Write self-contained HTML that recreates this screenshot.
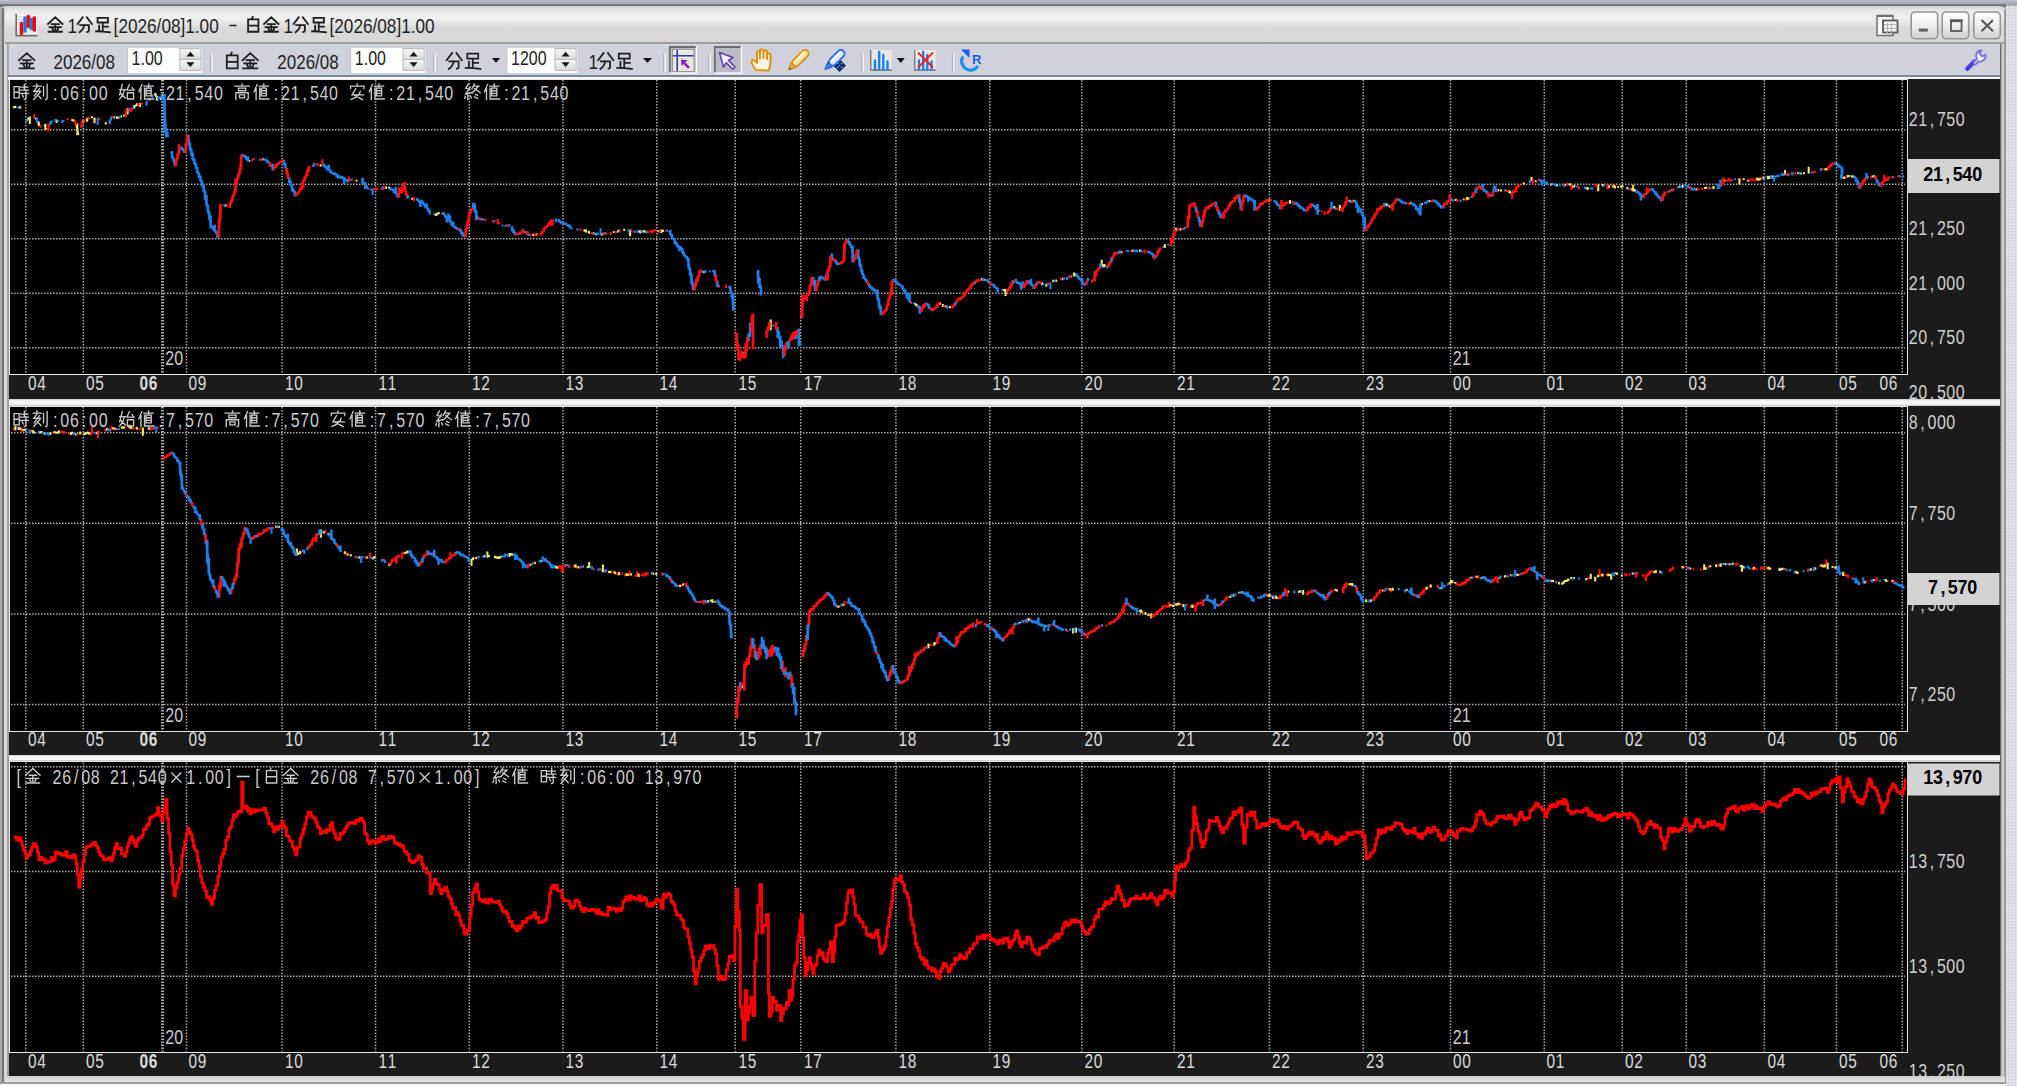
<!DOCTYPE html><html><head><meta charset="utf-8"><style>
*{margin:0;padding:0;box-sizing:border-box}
html,body{width:2017px;height:1086px;overflow:hidden;background:#a9adb9}
body{position:relative;font-family:"Liberation Sans",sans-serif}
.a{position:absolute}
.t{position:absolute;white-space:pre;transform-origin:0 0;line-height:1}
.mono{font-family:"Liberation Mono",monospace}
</style></head><body>
<div class="a" style="left:0;top:0;width:2017px;height:5px;background:linear-gradient(#bcc0cc,#9da1ad)"></div>
<div class="a" style="left:0;top:4.3px;width:2006px;height:3px;background:linear-gradient(#8a8a8a,#6c6c6c 50%,#888)"></div>
<div class="a" style="left:2006px;top:6px;width:11px;height:1080px;background-color:#d3d5dd;background-image:radial-gradient(circle at 1.5px 1.5px,#ededf2 0.9px,transparent 1.3px);background-size:3.1px 3.1px"></div>
<div class="a" style="left:0;top:6px;width:2006px;height:1078px;background:#d6d6d6;border-radius:6px 6px 0 0"></div>
<div class="a" style="left:0;top:8px;width:1.5px;height:1076px;background:#aaaaaa"></div>
<div class="a" style="left:1.5px;top:8px;width:2.5px;height:1076px;background:#737373"></div>
<div class="a" style="left:4px;top:8px;width:3px;height:1076px;background:#d8d8d8"></div>
<div class="a" style="left:7px;top:44px;width:2px;height:1033px;background:#a0a0a0"></div>
<div class="a" style="left:1999.5px;top:44px;width:4.5px;height:1034px;background:linear-gradient(90deg,#1a1a1a 0,#9a9a9a 20%,#d0d0d0 70%,#d8d8d8 100%)"></div>
<div class="a" style="left:2004px;top:10px;width:1.5px;height:1074px;background:#9a9a9a"></div>
<div class="a" style="left:7px;top:1076px;width:1998px;height:6px;background:linear-gradient(#cfcfcf,#e6e6e6)"></div>
<div class="a" style="left:0;top:1082px;width:2006px;height:1.5px;background:#9c9c9c"></div>
<div class="a" style="left:0;top:1083.5px;width:2006px;height:2.5px;background:#f4f4f4"></div>
<div class="a" style="left:5px;top:7.3px;width:1999px;height:35px;border-radius:7px 7px 0 0;background:linear-gradient(#d6d6d6 0%,#e6e6e6 8%,#f0f0f0 30%,#e4e4e4 48%,#d9d9d9 60%,#d8d8d8 100%)"></div>
<div class="a" style="left:5px;top:42.2px;width:1999px;height:1.7px;background:#a09d9d"></div>
<div class="a" style="left:8px;top:43.5px;width:1992px;height:32px;background:linear-gradient(#d4d7de 0,#cfd2da 10%,#cfd2da 90%,#d6d9df 100%);border-left:1.5px solid #a8acb4"></div>
<div class="a" style="left:8px;top:74.8px;width:1992px;height:1.8px;background:#7b869a"></div>
<div class="a" style="left:8px;top:76.5px;width:1992px;height:3px;background:#f8f8f8"></div>
<div class="a" style="left:9px;top:79px;width:1990.5px;height:320px;background:#1b1b1b"></div>
<div class="a" style="left:9px;top:78.5px;width:1898.5px;height:296.2px;background:#000;border:1.5px solid #e6e6e6"></div>
<div class="a" style="left:9px;top:399px;width:1990.5px;height:6.5px;background:linear-gradient(#c8c8c8 0,#f4f4f4 25%,#f4f4f4 75%,#bdbdbd 100%)"></div>
<div class="a" style="left:9px;top:406px;width:1990.5px;height:348.5px;background:#1b1b1b"></div>
<div class="a" style="left:9px;top:405.5px;width:1898.5px;height:326px;background:#000;border:1.5px solid #e6e6e6"></div>
<div class="a" style="left:9px;top:754.5px;width:1990.5px;height:6.5px;background:linear-gradient(#c8c8c8 0,#f4f4f4 25%,#f4f4f4 75%,#bdbdbd 100%)"></div>
<div class="a" style="left:9px;top:761.5px;width:1990.5px;height:314.5px;background:#1b1b1b"></div>
<div class="a" style="left:9px;top:761.0px;width:1898.5px;height:292.0999999999999px;background:#000;border:1.5px solid #e6e6e6"></div>
<svg class="a" style="left:0;top:0" width="2017" height="1086" viewBox="0 0 2017 1086">
<defs>
<symbol id="k_kin" viewBox="0 0 16 16" overflow="visible"><path d="M1,7.5 L8,1 L15,7.5 M4.5,7.5 H11.5 M2.5,10.5 H13.5 M8,7.5 V15 M5,11.5 L6,13.5 M11,11.5 L10,13.5 M1.5,15 H14.5" fill="none" stroke="currentColor" stroke-linecap="square" stroke-linejoin="miter"/></symbol>
<symbol id="k_fun" viewBox="0 0 16 16" overflow="visible"><path d="M6,1 L1,7.5 M10,1 L15,7.5 M3.5,8.5 H12 V14 Q12,15.2 10.5,15.2 M7.5,8.5 Q7,12.5 3,15.5" fill="none" stroke="currentColor" stroke-linecap="square" stroke-linejoin="miter"/></symbol>
<symbol id="k_ashi" viewBox="0 0 16 16" overflow="visible"><path d="M3,1.5 H13 V6 H3 Z M8,6 V14.5 M8,10 H13 M4.5,9 V14 M1.5,14.5 Q8,14.5 15,15.5" fill="none" stroke="currentColor" stroke-linecap="square" stroke-linejoin="miter"/></symbol>
<symbol id="k_shiro" viewBox="0 0 16 16" overflow="visible"><path d="M7.5,0.5 L6.5,2.8 M3,3 H13 V15 H3 Z M3,9 H13" fill="none" stroke="currentColor" stroke-linecap="square" stroke-linejoin="miter"/></symbol>
<symbol id="k_ji" viewBox="0 0 16 16" overflow="visible"><path d="M1,3 H6 V14 H1 Z M1,8.5 H6 M7.5,3.5 H14.5 M11,1 V6.5 M7,6.5 H15 M7,9.5 H15 M12.5,7.5 V14.5 Q12.5,15.5 11,15.5 M9,11 L10,13" fill="none" stroke="currentColor" stroke-linecap="square" stroke-linejoin="miter"/></symbol>
<symbol id="k_koku" viewBox="0 0 16 16" overflow="visible"><path d="M4.5,0.5 V2.5 M1,2.5 H9 M5,3 L1.5,7.5 H8 M7,5 L2,12 M8,8 L1.5,15.5 M5,11 L8.5,14.5 M11,3 V12 M14.5,1 V14.5 Q14.5,15.5 13,15.5" fill="none" stroke="currentColor" stroke-linecap="square" stroke-linejoin="miter"/></symbol>
<symbol id="k_shi" viewBox="0 0 16 16" overflow="visible"><path d="M3.5,1 L1,11 M1,6 H6.5 M5.5,6 Q5,11 1,15 M2,9.5 L6.5,14 M10.5,1 L8,6.5 H15 M13,4 L15,6.5 M8.5,9 H14.5 V15 H8.5 Z" fill="none" stroke="currentColor" stroke-linecap="square" stroke-linejoin="miter"/></symbol>
<symbol id="k_chi" viewBox="0 0 16 16" overflow="visible"><path d="M4,1 L1,8 M3,5 V15.5 M6,2.5 H15 M10.5,0.5 V4.5 M8,4.5 H13 V12 H8 Z M8,7 H13 M8,9.5 H13 M6.5,4.5 V15 H15.5" fill="none" stroke="currentColor" stroke-linecap="square" stroke-linejoin="miter"/></symbol>
<symbol id="k_kou" viewBox="0 0 16 16" overflow="visible"><path d="M8,0.5 V2.5 M1,2.5 H15 M4.5,4.5 H11.5 V7 H4.5 Z M2,9 V15.5 M2,9 H14 V14.5 Q14,15.5 12.5,15.5 M5.5,11 H10.5 V14 H5.5 Z" fill="none" stroke="currentColor" stroke-linecap="square" stroke-linejoin="miter"/></symbol>
<symbol id="k_an" viewBox="0 0 16 16" overflow="visible"><path d="M8,0.5 V2.5 M1.5,5 V2.5 H14.5 V5 M6.5,5 L3,11 H14 M11,7.5 Q10,13 2,15.5 M5.5,11.5 L13,15.5" fill="none" stroke="currentColor" stroke-linecap="square" stroke-linejoin="miter"/></symbol>
<symbol id="k_shuu" viewBox="0 0 16 16" overflow="visible"><path d="M4,0.5 L1.5,4.5 L5.5,6 M6,3.5 L1.5,10 L7,9 M3.5,10 V15.5 M1,12.5 L0.5,14.5 M6,12 L7,14 M10,0.5 L7.5,5 M9.5,2.5 H14 L8,9 M10,5 L15.5,9 M11,10.5 L13,11.5 M10,13 L13,14.5" fill="none" stroke="currentColor" stroke-linecap="square" stroke-linejoin="miter"/></symbol>
</defs>
<path d="M162.5,80V373.2" stroke="#a9a9a9" stroke-width="3" stroke-dasharray="1.5 1.5" fill="none"/>
<path d="M25.8,80V373.2M83.3,80V373.2M186.5,80V373.2M282.1,80V373.2M375.6,80V373.2M469.3,80V373.2M562.9,80V373.2M656.8,80V373.2M735.2,80V373.2M800.7,80V373.2M895.9,80V373.2M989.8,80V373.2M1081.8,80V373.2M1174.1,80V373.2M1269.4,80V373.2M1363.2,80V373.2M1450.5,80V373.2M1544.2,80V373.2M1622.2,80V373.2M1686.3,80V373.2M1764.4,80V373.2M1836.5,80V373.2M1902.3,80V373.2M11,129.7H1905M11,184.2H1905M11,238.7H1905M11,293.2H1905M11,347.7H1905" stroke="#a9a9a9" stroke-width="1.5" stroke-dasharray="1.5 1.5" fill="none"/>
<path d="M162.5,407V730" stroke="#a9a9a9" stroke-width="3" stroke-dasharray="1.5 1.5" fill="none"/>
<path d="M25.8,407V730M83.3,407V730M186.5,407V730M282.1,407V730M375.6,407V730M469.3,407V730M562.9,407V730M656.8,407V730M735.2,407V730M800.7,407V730M895.9,407V730M989.8,407V730M1081.8,407V730M1174.1,407V730M1269.4,407V730M1363.2,407V730M1450.5,407V730M1544.2,407V730M1622.2,407V730M1686.3,407V730M1764.4,407V730M1836.5,407V730M1902.3,407V730M11,432.7H1905M11,523.3H1905M11,613.9H1905M11,704.5H1905" stroke="#a9a9a9" stroke-width="1.5" stroke-dasharray="1.5 1.5" fill="none"/>
<path d="M162.5,762.5V1051.6" stroke="#a9a9a9" stroke-width="3" stroke-dasharray="1.5 1.5" fill="none"/>
<path d="M25.8,762.5V1051.6M83.3,762.5V1051.6M186.5,762.5V1051.6M282.1,762.5V1051.6M375.6,762.5V1051.6M469.3,762.5V1051.6M562.9,762.5V1051.6M656.8,762.5V1051.6M735.2,762.5V1051.6M800.7,762.5V1051.6M895.9,762.5V1051.6M989.8,762.5V1051.6M1081.8,762.5V1051.6M1174.1,762.5V1051.6M1269.4,762.5V1051.6M1363.2,762.5V1051.6M1450.5,762.5V1051.6M1544.2,762.5V1051.6M1622.2,762.5V1051.6M1686.3,762.5V1051.6M1764.4,762.5V1051.6M1836.5,762.5V1051.6M1902.3,762.5V1051.6M11,766.7H1905M11,871.5H1905M11,976.3H1905" stroke="#a9a9a9" stroke-width="1.5" stroke-dasharray="1.5 1.5" fill="none"/>
<path d="M12.9,107.3L14.5,107.1M13.7,106.3V107.3M14.5,107.1L16.1,106.9M15.3,105.7V107.8M19.2,107.2L20.8,108.4M20,106V108.6M27.4,119.3L29,118.9M28.2,117.6V119.9M29,118.9L30.5,116.8M29.8,116.5V123.9M35,118.2L36.2,118.9M35.6,117.5V119.3M38,122L39.7,125.9M38.8,121.4V126.2M44.6,124.9L46.1,129.4M45.4,123.7V130M55.9,120.5L57.3,121.8M56.6,119.6V123M71.4,120L72.9,120M72.2,119.4V121M72.9,120L74.4,120.9M73.7,119.4V121.8M76.4,124.5L78.3,135.1M77.3,123.3V135.2M82.3,122L83.6,121.5M83,120.2V123.3M86.3,119.5L87.9,118.5M87.1,118.5V121.8M91.2,117.8L92.5,116.7M91.9,116.3V118.3M93.9,118.2L95.2,119.8M94.5,117.4V123.3M105.1,123.3L106.4,123.8M105.8,122.3V124.4M113.4,116.8L114.8,117.8M114.1,116.7V117.9M116.2,118.3L117.6,117.4M116.9,116.3V118.6M117.6,117.4L119,118.1M118.3,117.2V118.4M120.5,116L122,116.6M121.2,115.4V116.9M123.4,115.8L124.9,115.8M124.2,114.2V116.1M126.9,109.5L128.2,109M127.6,108.8V114.5M133.6,108L134.9,106.1M134.2,105.1V108.7M134.9,106.1L136.4,105.3M135.6,105V106.4M136.4,105.3L137.9,104.6M137.1,103.3V105.8M139.3,105.5L140.8,103.5M140.1,103.1V106.9M148.8,100.1L150.2,98.5M149.5,98.2V100.2M154.7,93.7L156.2,95.9M155.4,93.1V96M156.2,95.9L157.7,99.6M156.9,95.9V100.7M162.1,96.9L163.6,95.1M162.8,93.9V98M225.2,205L226.5,205.6M225.8,204.2V206.5M248.6,160.8L250.1,160.8M249.4,160.3V161.2M262.2,159.4L263.7,159.2M262.9,158.3V159.7M319.9,166L321.6,164.7M320.7,164.7V166.2M355.7,180.4L357.3,180.9M356.5,180.2V181M385.2,188.2L386.7,187.4M386,186.2V189M388.4,187.8L390,188.1M389.2,186.8V188.2M411.4,198.9L413.1,198.9M412.2,197.7V199M435.1,214.6L436.6,214.7M435.8,213.3V215.9M436.6,214.7L438.1,213.2M437.4,213.1V215.1M438.1,213.2L439.6,212.8M438.9,212.4V213.2M532.6,234.8L534.1,235.6M533.3,233.7V235.8M535.5,234.4L537,234.5M536.3,233.8V234.8M583.8,229.7L585.3,231.4M584.6,229.3V231.5M585.3,231.4L586.7,232M586,229.4V232.3M588.2,231.7L589.6,232.6M588.9,230.7V233.7M592.5,233.3L594,233.5M593.2,232.9V233.7M595.4,234.2L596.9,234.3M596.2,234.2V235.2M601.3,233.6L602.8,234.4M602.1,233.3V235.4M613.1,232L614.6,232.3M613.9,231.5V232.7M617.5,232.1L619,230.6M618.3,229.8V232.3M623.4,230.2L624.9,229.5M624.2,228.9V230.6M629.3,230.1L630.8,230.9M630.1,229.6V236.2M638.2,231.3L639.6,231.2M638.9,230.4V232.4M639.6,231.2L641.1,232.5M640.4,230.3V233.4M642.6,231.2L644.1,230.7M643.4,230.5V232.5M644.1,230.7L645.7,232.5M644.9,230.4V232.5M657.7,231.1L659.2,231.3M658.5,230.5V232.2M660.7,231.9L662.1,230.1M661.4,229.4V233M662.1,230.1L663.6,231.3M662.9,229.8V232M703,272.3L704.6,272.2M703.8,271.1V273.1M770,325.7L771.4,324.4M770.7,319.6V330.2M914.4,303.3L915.8,304.3M915.1,303.3V304.5M915.8,304.3L917.2,305.6M916.5,304V306.4M939.4,303.5L940.8,303.9M940.1,302.5V304.2M942.2,304.6L943.6,306.1M942.9,304.1V306.9M945,305.9L946.4,306.3M945.7,305.7V307.6M949.1,306.8L950.5,307.2M949.8,306V308.3M981.1,279.7L982.5,278.7M981.8,278.4V280.3M983.9,280.1L985.3,279.5M984.6,278.7V280.2M1003.1,290.1L1004.8,290M1004,289.5V291.1M1004.8,290L1006.4,291.3M1005.6,288.9V295.9M1041.4,283.1L1042.7,284M1042,282V285.3M1045.5,284.5L1046.9,285M1046.2,283.8V286.8M1052.5,281.7L1053.9,280.7M1053.2,279.8V282.3M1055.4,281.4L1057,280.1M1056.2,279.7V281.7M1061.6,279.1L1063.2,279.2M1062.4,278.9V279.3M1073.3,275.4L1074.7,275.2M1074,272.6V276M1074.7,275.2L1076.1,273.9M1075.4,273.4V276.5M1101,264.7L1102.4,264.8M1101.7,259.8V265.8M1102.4,264.8L1103.8,266.5M1103.1,264.3V267.2M1103.8,266.5L1105.2,265.3M1104.5,264.1V267.3M1120.5,251.4L1121.9,252.6M1121.2,251.2V252.6M1131.7,251.1L1133.2,250.1M1132.5,249.8V251.9M1139.2,251.4L1140.8,250.2M1140,249.5V251.9M1164,246.7L1165.7,245.2M1164.8,244V247.9M1175.4,230.3L1176.9,228.2M1176.1,227.7V231.3M1179.8,229.9L1181.3,228.4M1180.6,228.2V230.5M1268.4,200.4L1269.8,199.7M1269.1,199.6V201.6M1289.2,202.5L1290.6,201.3M1289.9,200.1V203.8M1333.6,206.7L1335,208M1334.3,206V208.5M1339.1,209.7L1340.5,209.4M1339.8,205V210.5M1348.9,201.2L1350.3,200.5M1349.6,200V201.9M1353,201.1L1354.4,200.9M1353.7,199.8V201.6M1385,204L1386.4,204.5M1385.7,203.1V205.5M1386.4,204.5L1387.8,205.6M1387.1,203.8V206M1389.1,205.6L1390.5,206.7M1389.8,205.5V207.6M1410,202.7L1411.4,203M1410.7,202.3V204.3M1421.1,204.6L1422.7,203.3M1421.9,203.2V205.1M1428.9,201.1L1430.5,201M1429.7,200.2V201.8M1455.1,199.7L1456.6,199.5M1455.8,199.3V200.9M1463,199.6L1464.6,199.2M1463.8,199.1V199.7M1466.2,199.6L1467.7,198M1467,197.1V200.3M1467.7,198L1469.3,198.5M1468.5,197.6V199.4M1497.5,190L1498.9,190.8M1498.2,189V190.9M1500.2,190L1501.6,190.7M1500.9,190V191.5M1508.6,191.3L1510,192.2M1509.3,190.2V193.1M1510,192.2L1511.4,193.2M1510.7,191.8V193.7M1522.9,183.3L1524.5,183.5M1523.7,182.6V184.4M1530.8,180L1532.2,180.4M1531.5,177.1V180.8M1535.1,181.4L1536.5,181.1M1535.8,181V181.8M1550.3,185.2L1551.7,184.1M1551,183.5V185.6M1556.1,185.7L1557.5,184.9M1556.8,184V186.5M1564.8,185.1L1566.2,185M1565.5,184.1V185.1M1569.2,184.2L1570.7,185.4M1569.9,183.2V185.6M1572.1,186.3L1573.6,186.6M1572.9,186.2V187.7M1573.6,186.6L1575.1,185.9M1574.4,185.3V186.8M1585.4,188.2L1586.9,188M1586.2,187.7V189M1586.9,188L1588.4,188.9M1587.7,186.9V190.1M1597.4,186.6L1599,185M1598.2,184.3V191.3M1602,185.7L1603.6,185M1602.8,183.9V186M1608.2,185.8L1609.7,187.1M1608.9,184.9V188.3M1612.7,185.6L1614.3,187.2M1613.5,184.8V187.7M1614.3,187.2L1615.8,186.2M1615,185.8V188.4M1617.3,187.1L1618.9,186.7M1618.1,185.9V187.2M1620.4,187.1L1621.9,186.5M1621.2,185.3V187.4M1621.9,186.5L1623.4,186.5M1622.7,186.3V187.1M1626.4,188L1628,188.5M1627.2,187V189.1M1631,189.7L1632.5,189M1631.7,188.4V190M1632.5,189L1634,189.6M1633.2,184.8V191.5M1634,189.6L1635.5,191.2M1634.7,188.9V191.5M1678.6,186.8L1680.1,186.6M1679.3,186.5V187.7M1681.7,187.2L1683.3,185.9M1682.5,184.9V187.9M1695.8,189.9L1697.2,189M1696.5,187.9V190.5M1704.3,188.4L1705.7,187.6M1705,187.2V189.1M1705.7,187.6L1707.1,187.7M1706.4,186.7V188.3M1712.8,188.2L1714.2,186.7M1713.5,186V189.3M1724,180.6L1725.5,180.2M1724.7,179.9V181.5M1738.7,180.6L1740.1,179.4M1739.4,178.3V184.6M1743,179.3L1744.5,179M1743.7,178.9V179.9M1747.4,180.9L1748.8,180.6M1748.1,180.1V181.2M1756.1,179.5L1757.7,178.5M1756.9,177.5V180.4M1757.7,178.5L1759.2,179.6M1758.4,177.9V180.7M1759.2,179.6L1760.8,178.2M1760,178.1V180.2M1762.4,178.1L1763.9,177.3M1763.2,176.5V179.3M1767.1,178L1768.6,178.4M1767.8,175.8V179.2M1768.6,178.4L1770.2,176.5M1769.4,176V178.9M1771.8,178.1L1773.3,176.4M1772.6,175.5V178.5M1784.3,174.9L1785.8,173.6M1785,170.1V175.1M1797.4,173.4L1798.8,172.6M1798.1,172.5V174.1M1800.3,173.7L1801.7,173.9M1801,172.7V174M1803.2,173.5L1804.8,172.8M1804,172.8V174M1807.9,172.5L1809.5,171.4M1808.7,166.8V173.5M1824.7,169.1L1826.2,169.3M1825.4,168.2V170.4M1826.2,169.3L1827.7,169.1M1826.9,168.8V169.5M1835.8,163.2L1837.1,164.4M1836.5,162.9V165.1M1842.3,177.7L1843.8,177.6M1843.1,177V177.7M1843.8,177.6L1845.4,177.2M1844.6,176.6V178.9M1846.9,177L1848.4,175.7M1847.6,175.1V177.1M1848.4,175.7L1849.8,176.4M1849.1,175.4V176.9M1851.2,176.6L1852.6,176.4M1851.9,175.2V176.9M1852.6,176.4L1854,176.7M1853.3,175.4V177.7M1871.8,176.7L1873.3,176.1M1872.5,176V177.2M1873.3,176.1L1874.8,176.4M1874,175.4V176.5" stroke="#f2e66a" stroke-width="2.1" fill="none" stroke-linecap="butt"/>
<path d="M17.6,108.2L19.2,107.2M18.4,106V108.7M25.8,121.6L27.4,119.3M26.6,119.1V122.1M36.2,118.9L38,122M37.1,117.8V123.1M49.6,124.4L51.2,122.2M50.4,121.1V124.9M51.2,122.2L52.9,120.9M52,120.7V122.4M54.5,119.9L55.9,120.5M55.2,119V121.2M57.3,121.8L58.7,120.5M58,120.3V122.1M61.5,121.9L62.9,120.9M62.2,120.3V123.1M62.9,120.9L64.3,120.9M63.6,120.2V121M96.8,118.6L98.5,119.5M97.7,117.6V124.9M109.1,123L110.5,119.9M109.8,119.6V124.2M110.5,119.9L112,116.9M111.3,116.2V120.4M119,118.1L120.5,116M119.7,115.7V118.5M128.2,109L129.6,109.8M128.9,108V110M132.2,108.3L133.6,108M132.9,107.2V109.2M145.8,104.6L147.3,101.1M146.5,101V105.7M151.7,97.4L153.2,95.4M152.5,94.3V97.7M157.7,99.6L159.1,97.5M158.4,96.4V100.1M159.1,97.5L160.6,96.7M159.9,96.3V98.4M160.6,96.7L162.1,96.9M161.3,95.5V97.3M223.8,206L225.2,205M224.5,204.1V207.1M259.2,159.6L260.7,160.1M259.9,159.1V160.4M263.7,159.2L265.2,159.3M264.4,159V160.4M312.2,165.6L313.6,165.4M312.9,165.2V166.7M313.6,165.4L315,164.1M314.3,163.1V166.5M349.5,180.6L351.1,179.8M350.3,178.6V180.7M367.4,188.1L368.9,188.8M368.1,188.1V189.5M370.4,189.8L371.9,189.6M371.1,188.8V190.3M371.9,189.6L373.3,189.2M372.6,188.2V194.9M382.2,188.6L383.7,186.9M383,186.1V189.7M433.6,213.8L435.1,214.6M434.3,213.5V215M493.8,221.1L495.3,220.9M494.5,220.2V221.7M501.8,225.4L503.4,225.7M502.6,225.3V226.3M505,226.4L506.6,225.2M505.8,225V226.9M508.3,225.2L509.9,225.7M509.1,224.2V226.9M555,221L556.6,219M555.8,218.6V222.2M576.6,229.7L578.1,229M577.3,228.6V230.5M594,233.5L595.4,234.2M594.7,232.3V234.4M596.9,234.3L598.4,233.3M597.7,232.4V234.9M599.9,232.9L601.3,233.6M600.6,228.3V235.6M604.3,233.3L605.8,233.6M605,232.1V234.5M616.1,232.3L617.5,232.1M616.8,231.7V232.5M627.8,231.4L629.3,230.1M628.6,230V232.6M633.7,230.9L635.2,232.1M634.5,230.5V232.9M636.7,232.5L638.2,231.3M637.4,230.4V232.8M641.1,232.5L642.6,231.2M641.9,230.6V232.9M645.7,232.5L647.2,231.3M646.4,230.8V233.4M666.6,231L668,230.2M667.3,229.3V231.2M701.5,271.3L703,272.3M702.2,270.3V273.1M704.6,272.2L706.2,270.8M705.4,270.1V272.7M709.3,271.3L710.9,271.5M710.1,270.8V271.8M712.4,271.2L714,270.7M713.2,270.1V271.6M728.2,286.8L729.7,286.8M729,286.4V287.1M772.8,325.6L774.1,325.3M773.4,325.1V326.8M913.1,302.7L914.4,303.3M913.8,302.4V303.7M946.4,306.3L947.8,307.5M947.1,305.5V308.8M982.5,278.7L983.9,280.1M983.2,278.1V281.3M1001.5,290L1003.1,290.1M1002.3,289.7V290.7M1038.6,281.8L1040,282.8M1039.3,281.1V283.1M1042.7,284L1044.1,284.1M1043.4,283.8V285.1M1046.9,285L1048.3,283.1M1047.6,282.8V285.6M1049.7,283.4L1051.1,282.9M1050.4,282.5V289.3M1053.9,280.7L1055.4,281.4M1054.7,279.7V281.7M1063.2,279.2L1064.7,277.6M1063.9,277.2V279.7M1066.3,279.1L1067.8,277.1M1067,277V280.1M1070.6,275.9L1071.9,276.9M1071.3,275V278.1M1106.6,267.4L1108,266.4M1107.3,265.4V268.6M1117.8,252.2L1119.2,253.1M1118.5,250.9V253.8M1119.2,253.1L1120.5,251.4M1119.8,250.2V254.3M1126.1,250.4L1127.5,251.1M1126.8,250.4V251.7M1127.5,251.1L1128.9,251.5M1128.2,249.9V251.7M1133.2,250.1L1134.7,250.9M1134,249.4V251.5M1134.7,250.9L1136.2,251.5M1135.5,250V251.8M1136.2,251.5L1137.7,250.8M1137,249.6V252.4M1140.8,250.2L1142.3,251.7M1141.5,249.9V252.2M1162.4,247.2L1164,246.7M1163.2,246.5V247.6M1167.3,244.8L1168.9,244.7M1168.1,244.2V245.2M1182.8,229.5L1184.2,228.7M1183.5,228.1V229.6M1184.2,228.7L1185.7,227.2M1185,227V228.8M1291.9,201.9L1293.3,203M1292.6,201V203.1M1294.7,204L1296.1,202.2M1295.4,201.9V204.4M1335,208L1336.3,208.9M1335.7,207.7V210.1M1350.3,200.5L1351.6,202M1351,199.9V203.2M1387.8,205.6L1389.1,205.6M1388.4,204.7V205.8M1411.4,203L1412.8,203.2M1412.1,202.8V203.5M1424.2,203.3L1425.8,202.5M1425,201.7V204M1425.8,202.5L1427.3,201.8M1426.6,201.7V203.4M1427.3,201.8L1428.9,201.1M1428.1,199.9V202.5M1450.3,199L1451.9,199.3M1451.1,198.2V200.6M1451.9,199.3L1453.5,200.9M1452.7,198.9V201.8M1459.8,200.5L1461.4,201.3M1460.6,199.5V201.4M1470.9,196.1L1472.5,196.9M1471.7,195.5V198.1M1504.4,190.2L1505.8,190.6M1505.1,189.2V191.6M1529.2,182L1530.8,180M1530,179.6V182.9M1551.7,184.1L1553.2,184.7M1552.4,182.9V185M1554.6,184.4L1556.1,185.7M1555.3,183.5V185.8M1559,185.3L1560.4,185M1559.7,183.9V186.3M1563.3,185.6L1564.8,185.1M1564.1,184.5V186.8M1576.6,185.8L1578.1,187M1577.3,185.5V187.6M1584,187.6L1585.4,188.2M1584.7,186.4V189.2M1589.9,188.3L1591.4,188.8M1590.7,187.5V189.5M1591.4,188.8L1592.9,188.1M1592.2,187.2V189.5M1603.6,185L1605.1,185.4M1604.3,184.5V186.4M1628,188.5L1629.5,189.2M1628.7,188V189.5M1668.4,192.1L1669.9,190.7M1669.2,190.2V192.3M1671.3,190.3L1672.7,189.9M1672,189V191.4M1677,188L1678.6,186.8M1677.8,186.1V188.6M1680.1,186.6L1681.7,187.2M1680.9,185.4V187.5M1683.3,185.9L1684.8,185.2M1684.1,184.6V187.2M1709.9,188.3L1711.3,188.1M1710.6,187.9V189.2M1717,188.1L1718.4,187.5M1717.7,183.7V189M1734.3,179.4L1735.7,178.9M1735,178.7V180.2M1763.9,177.3L1765.5,177.9M1764.7,176.5V178.2M1770.2,176.5L1771.8,178.1M1771,175.3V179M1773.3,176.4L1774.9,176.5M1774.1,176.4V181.8M1774.9,176.5L1776.5,176.9M1775.7,176.5V177.1M1776.5,176.9L1778,175.8M1777.2,174.8V176.9M1778,175.8L1779.6,175.3M1778.8,174.7V176.9M1781.2,175.4L1782.7,174.1M1782,173.1V176.1M1782.7,174.1L1784.3,174.9M1783.5,172.9V175.9M1787.2,174.9L1788.7,174.7M1787.9,173.6V176M1791.6,172.9L1793,174.5M1792.3,172.1V175.4M1798.8,172.6L1800.3,173.7M1799.6,171.7V174.8M1811,172.5L1812.6,172.5M1811.8,172.2V173.7M1820.2,169.1L1821.7,169.7M1820.9,168V170.9M1833.3,163.7L1834.6,163.4M1833.9,162.4V164.6M1834.6,163.4L1835.8,163.2M1835.2,162.2V164.2M1867.2,176.4L1868.7,177.4M1868,176.2V178.6M1891.3,177.3L1892.8,177.2M1892.1,176.7V178M1899.1,176L1900.7,176.8M1899.9,175.2V177.1M1902.3,176.4L1904,176.2M1903.2,175.7V177.5" stroke="#1f7fe8" stroke-width="2.1" fill="none" stroke-linecap="butt"/>
<path d="M33.7,115L35,118.2M34.3,113.9V118.5M39.7,125.9L41.3,126.4M40.5,125.3V127.7M47.6,130.6L49.6,124.4M48.6,123.4V131.2M67,119.1L68.4,119.1M67.7,118.3V119.8M74.4,120.9L76.4,124.5M75.4,119.7V125.6M81,127.3L82.3,122M81.6,120.9V128.3M83.6,121.5L85,120.1M84.3,119V122M87.9,118.5L89.6,116.9M88.8,116.8V119.6M98.5,119.5L100.1,118.7M99.3,118V119.9M112,116.9L113.4,116.8M112.7,116.4V117.8M124.9,115.8L126.9,109.5M125.9,108.7V116.9M129.6,109.8L130.9,111.1M130.2,108.8V111.8M130.9,111.1L132.2,108.3M131.6,107.4V111.5M137.9,104.6L139.3,105.5M138.6,103.8V105.6M140.8,103.5L142.5,103.6M141.6,102.6V104.2M226.5,205.6L227.9,206M227.2,204.7V206.6M251.6,160.9L253.1,159.2M252.4,159V161M253.1,159.2L254.6,158.7M253.9,157.9V159.7M260.7,160.1L262.2,159.4M261.4,158.5V160.5M316.6,164L318.3,165.2M317.5,163.1V166.3M321.6,164.7L323.2,164.6M322.4,159.2V165.3M348,181.8L349.5,180.6M348.8,176.6V181.8M351.1,179.8L352.6,179.7M351.9,178.4V180.3M373.3,189.2L374.8,189.7M374.1,188.7V190.9M376.3,189.4L377.8,188M377,187.5V190.2M380.8,189.1L382.2,188.6M381.5,187.5V189.1M383.7,186.9L385.2,188.2M384.5,186.4V188.9M413.1,198.9L414.7,200.3M413.9,196.9V201.3M441.2,214.1L442.7,213.1M441.9,212.8V214.2M483.2,219.5L484.7,219.8M484,219.1V220.6M484.7,219.8L486.2,220.1M485.5,219.1V220.7M492.3,222L493.8,221.1M493,220.3V222.8M496.9,221.5L498.5,223.2M497.7,218.9V224.3M498.5,223.2L500.2,223.3M499.4,222.8V223.7M506.6,225.2L508.3,225.2M507.4,224.2V226.2M529.7,234.6L531.2,235.2M530.4,233.8V235.7M534.1,235.6L535.5,234.4M534.8,233.2V236.2M537,234.5L538.4,234.5M537.7,233.2V234.6M552,220.6L553.5,220.2M552.8,219.7V225.6M579.5,228.9L581,230.3M580.2,228.5V230.8M591.1,232.6L592.5,233.3M591.8,232.2V234.2M602.8,234.4L604.3,233.3M603.5,232.3V234.8M605.8,233.6L607.2,233.3M606.5,233.3V234.1M610.2,233.7L611.6,232.3M610.9,232V235M614.6,232.3L616.1,232.3M615.3,232V233M619,230.6L620.5,230.4M619.7,229.4V230.7M630.8,230.9L632.3,230.6M631.5,229.4V231.2M647.2,231.3L648.7,232.1M648,230.8V233.2M650.2,231L651.8,232M651,230.6V232.1M651.8,232L653.3,230.9M652.5,229.7V233.2M653.3,230.9L654.8,230.3M654,230.2V231.7M654.8,230.3L656.2,229.9M655.5,229.3V230.6M659.2,231.3L660.7,231.9M659.9,230.6V232.4M665.1,230.7L666.6,231M665.8,230.6V231.1M699.9,270.9L701.5,271.3M700.7,269.6V271.3M718.1,286.6L719.6,284.8M718.8,284.7V287.7M725.4,287.1L726.8,285.6M726.1,284.8V288M910.3,302.2L911.7,303.1M911,301.6V304M943.6,306.1L945,305.9M944.3,305V306.4M979.7,280.2L981.1,279.7M980.4,279.5V280.7M1006.4,291.3L1008,290.6M1007.2,289.4V292.4M1040,282.8L1041.4,283.1M1040.7,281.7V284.3M1048.3,283.1L1049.7,283.4M1049,282.9V284.3M1060.1,278.6L1061.6,279.1M1060.8,277.3V280.3M1067.8,277.1L1069.2,277.5M1068.5,276.5V277.9M1069.2,277.5L1070.6,275.9M1069.9,274.7V278M1091.3,280.7L1092.7,281.4M1092,279.5V282.7M1115,252.2L1116.4,253.7M1115.7,251.9V254.5M1116.4,253.7L1117.8,252.2M1117.1,251.9V254.1M1121.9,252.6L1123.3,252.8M1122.6,252.4V253.2M1130.3,250.5L1131.7,251.1M1131,250.3V251.7M1143.8,250.2L1145.3,251.9M1144.5,249.7V253.4M1146.8,252.1L1148.3,252M1147.5,250.7V252.6M1176.9,228.2L1178.4,229.3M1177.6,227.6V230.5M1181.3,228.4L1182.8,229.5M1182,228V229.9M1267,199.9L1268.4,200.4M1267.7,199.6V201M1269.8,199.7L1271.1,201.1M1270.5,199.1V201.3M1293.3,203L1294.7,204M1294,201.8V204.9M1321.1,211.6L1322.5,211.5M1321.8,211.1V211.7M1323.9,212.1L1325.3,212.6M1324.6,212V214.9M1336.3,208.9L1337.7,209.3M1337,208.3V209.6M1351.6,202L1353,201.1M1352.3,200.5V202.3M1405.8,203L1407.2,204M1406.5,202V204.6M1408.6,204.1L1410,202.7M1409.3,202.4V205.2M1430.5,201L1432,201.6M1431.3,200.2V201.6M1432,201.6L1433.6,200.7M1432.8,199.4V202.2M1456.6,199.5L1458.2,201.1M1457.4,199.3V202.1M1464.6,199.2L1466.2,199.6M1465.4,198.7V199.6M1496.1,191.8L1497.5,190M1496.8,189V192.6M1505.8,190.6L1507.2,190.5M1506.5,189.8V191.9M1507.2,190.5L1508.6,191.3M1507.9,190.4V191.6M1511.4,193.2L1512.8,192.8M1512.1,191.5V198.9M1532.2,180.4L1533.7,179.8M1533,179.8V185.3M1538,179.3L1539.4,180.1M1538.7,178.4V181.3M1566.2,185L1567.7,184.1M1567,183.1V185.1M1570.7,185.4L1572.1,186.3M1571.4,185.3V189.7M1578.1,187L1579.5,188.1M1578.8,186.3V189.4M1594.4,185.7L1595.9,185.2M1595.2,184.6V186.1M1595.9,185.2L1597.4,186.6M1596.7,183.9V186.7M1606.6,185.8L1608.2,185.8M1607.4,184.8V189.6M1611.2,185.6L1612.7,185.6M1612,185.2V186.6M1629.5,189.2L1631,189.7M1630.2,188.7V189.9M1667,191.9L1668.4,192.1M1667.7,190.9V192.5M1669.9,190.7L1671.3,190.3M1670.6,189.8V191.4M1672.7,189.9L1674.2,188.4M1673.4,188.1V190.9M1697.2,189L1698.6,189.4M1697.9,187.7V190.4M1701.4,189.7L1702.9,188.9M1702.2,187.8V190M1708.5,187L1709.9,188.3M1709.2,186.8V189.4M1726.9,180.7L1728.4,179.1M1727.7,178.9V182M1728.4,179.1L1729.9,180.3M1729.1,177.8V181M1729.9,180.3L1731.3,180.3M1730.6,179.4V181.4M1731.3,180.3L1732.8,180.1M1732.1,179.9V180.4M1740.1,179.4L1741.6,179.3M1740.8,179.2V179.7M1748.8,180.6L1750.3,179.6M1749.6,178.4V181.5M1751.7,180.3L1753.2,179M1752.5,178.3V181.2M1754.6,180.6L1756.1,179.5M1755.4,178.3V181.4M1760.8,178.2L1762.4,178.1M1761.6,176.9V178.2M1785.8,173.6L1787.2,174.9M1786.5,172.9V175.3M1788.7,174.7L1790.1,174.1M1789.4,173.3V174.9M1794.5,172.7L1795.9,173.7M1795.2,172.4V174.8M1812.6,172.5L1814.1,171.8M1813.4,171.6V173.3M1814.1,171.8L1815.6,171.9M1814.9,171.2V172.9M1821.7,169.7L1823.2,168.6M1822.4,168.3V169.8M1845.4,177.2L1846.9,177M1846.1,176.2V178.2M1870.2,178.2L1871.8,176.7M1871,175.7V178.5M1892.8,177.2L1894.4,176.7M1893.6,176.2V178M1897.4,176.3L1899.1,176M1898.2,176V176.7" stroke="#ff1010" stroke-width="2.1" fill="none" stroke-linecap="butt"/>
<path d="M163.6,95.1L165.7,129M164.6,93.9V133.6M165.7,129L166.8,132.6M166.3,128V137.6M166.8,132.6L168,136.6M167.4,131.9V137M171.3,151.8L172.7,157.4M172,151V158.3M172.7,157.4L174,160.5M173.4,157.4V161.1M174,160.5L175.4,165.9M174.7,159.5V166.2M179.6,147.5L180.9,148M180.3,146.4V148.9M180.9,148L182.3,149M181.6,146.7V150.2M182.3,149L183.7,150.1M183,148V150.2M183.7,150.1L185,152.7M184.3,149.9V153.1M187.8,136L189.2,143.4M188.5,134.8V144.4M189.2,143.4L190.6,149.4M189.9,142.5V150.6M190.6,149.4L192,154.1M191.3,148.3V155.4M192,154.1L193.4,159.3M192.7,153.1V160.6M193.4,159.3L195,163.8M194.2,158.3V164M195,163.8L196.5,167.9M195.8,162.7V168.7M196.5,167.9L198.1,172.8M197.3,167V173.5M198.1,172.8L199.7,176.6M198.9,172.2V177.7M199.7,176.6L201.3,181.2M200.5,175.7V181.7M201.3,181.2L202.8,185.6M202,180.9V186.4M202.8,185.6L204.4,190.7M203.6,185V191.9M204.4,190.7L205.8,198.5M205.1,190.5V199.7M205.8,198.5L207.2,205.4M206.5,195V206.1M207.2,205.4L208.5,211.8M207.9,204.8V212.8M208.5,211.8L209.9,219M209.2,211.8V219.6M209.9,219L211.3,226.5M210.6,215.3V227.7M211.3,226.5L212.7,228M212,225.7V228.9M212.7,228L214.1,229.9M213.4,227.6V229.9M214.1,229.9L215.4,231.2M214.8,224.7V232.2M215.4,231.2L216.8,233.6M216.1,230.6V233.7M216.8,233.6L218.2,237M217.5,233.2V237.9M241.7,154.5L243.1,155.9M242.4,154.1V156.5M243.1,155.9L244.5,155.7M243.8,155.7V156.5M244.5,155.7L245.8,157.7M245.1,154.8V157.9M245.8,157.7L247.2,159.9M246.5,156.6V159.9M247.2,159.9L248.6,160.8M247.9,156.2V161.5M265.2,159.3L266.6,160.2M265.9,158.9V161.3M266.6,160.2L268,162M267.3,159.9V162.7M268,162L269.4,162.5M268.7,161.8V163.5M270.7,165.8L272.1,166.2M271.4,165.2V167M272.1,166.2L273.5,169.3M272.8,163.7V170.4M283.1,160.5L284.5,163.7M283.8,159.7V164.5M284.5,163.7L285.9,168M285.2,162.8V168.5M288.6,178L290,182M289.3,177.3V183M290,182L291.4,185M290.7,180.7V185.9M291.4,185L292.8,189.3M292.1,184.9V191.2M292.8,189.3L294.2,191.5M293.5,189.3V192M294.2,191.5L295.6,195.6M294.9,191.1V196.5M323.2,164.6L324.8,166.4M324,163.5V167M324.8,166.4L326.4,167.8M325.6,165.6V167.8M326.4,167.8L328,169.6M327.2,166.6V170.8M328,169.6L329.5,169.7M328.8,164.8V170.5M329.5,169.7L331.1,172.2M330.3,169.2V172.9M331.1,172.2L332.7,173.2M331.9,171.6V174M332.7,173.2L334.3,173.9M333.5,172.2V174.6M334.3,173.9L335.8,174M335.1,172.6V175M335.8,174L337.3,176.5M336.6,173.6V177.3M337.3,176.5L338.9,175.8M338.1,174.8V178.7M338.9,175.8L340.4,177.7M339.6,175.5V178.5M340.4,177.7L341.9,177.1M341.1,176V178.5M341.9,177.1L343.4,177.9M342.7,176.4V178.2M343.4,177.9L345,179.8M344.2,176.9V183.9M345,179.8L346.5,179.6M345.7,178.7V180.9M346.5,179.6L348,181.8M347.2,179.2V182.3M361.9,178.8L363.3,182.9M362.6,177.8V184M363.3,182.9L364.6,183.5M364,182.1V184.1M364.6,183.5L366,185.7M365.3,182.2V189M366,185.7L367.4,188.1M366.7,185.6V189.1M390,188.1L391.6,189.2M390.8,187.8V190.4M391.6,189.2L393.2,190.2M392.4,188.6V190.5M393.2,190.2L394.9,192.3M394.1,189.3V193M394.9,192.3L396.5,193.9M395.7,187.1V194.3M396.5,193.9L398.1,196.6M397.3,192.8V197.4M406.9,195.3L408.2,198.5M407.5,194.8V198.7M416.3,198.9L417.9,200.1M417.1,197.9V200.5M417.9,200.1L419.5,202.1M418.7,199.5V202.4M419.5,202.1L421.2,201M420.4,201V207M421.2,201L422.8,202.7M422,199.8V203.8M422.8,202.7L424.4,204.4M423.6,202.6V205.5M424.4,204.4L425.9,207.1M425.2,203.9V207.7M425.9,207.1L427.4,208.2M426.7,203.2V209M427.4,208.2L429,211M428.2,207.9V211.2M429,211L430.5,213.8M429.7,210.6V214.5M442.7,213.1L444.3,214.3M443.5,212.1V214.4M444.3,214.3L445.9,217.3M445.1,213.7V217.6M445.9,217.3L447.6,218.5M446.8,216.3V222.4M447.6,218.5L449.2,220.4M448.4,213.5V220.8M449.2,220.4L450.8,221.8M450,215.2V222.4M450.8,221.8L452.4,224.9M451.6,221.6V225.4M452.4,224.9L454,226.7M453.2,221.5V227.2M454,226.7L455.7,227.5M454.9,225.7V228.6M455.7,227.5L457.3,229.6M456.5,227V229.6M458.9,229L460.4,230.9M459.6,227.7V231.2M460.4,230.9L461.9,233M461.1,229.4V233.9M461.9,233L463.4,235.6M462.6,232.2V236.3M463.4,235.6L464.9,237.1M464.1,234.4V237.2M472.7,208.3L474,204M473.3,203V209.4M474,204L475.6,211.4M474.8,203.3V212.6M475.6,211.4L477.1,217.3M476.3,210.6V220.2M477.1,217.3L478.6,218.3M477.9,217.3V219.5M480.1,219L481.7,219.4M480.9,218.1V220.2M481.7,219.4L483.2,219.5M482.4,218.2V219.8M511.5,227L512.9,230.2M512.2,226.2V231.4M512.9,230.2L514.2,232.3M513.5,229.1V233.1M514.2,232.3L515.6,234.5M514.9,231.7V234.9M523.7,231.8L525.2,232.4M524.5,231.1V233.1M525.2,232.4L526.7,232.2M526,231.7V233.2M528.2,234.8L529.7,234.6M529,233.9V236M558.1,219.8L559.7,221.6M558.9,218.9V222M559.7,221.6L561.3,222.6M560.5,220.6V222.9M561.3,222.6L563,223.8M562.2,221.4V224.5M563,223.8L564.6,222.9M563.8,222.4V223.9M564.6,222.9L566.2,224.4M565.4,222.4V224.7M566.2,224.4L567.7,224.8M567,224.4V225.3M567.7,224.8L569.2,225.8M568.5,224.7V226.9M569.2,225.8L570.8,228.3M570,224.7V228.5M570.8,228.3L572.3,228.2M571.5,227.7V228.5M669.5,230.5L671,234.1M670.3,230V235.3M671,234.1L672.5,238M671.8,233.9V238.1M672.5,238L674.1,239.3M673.3,238V239.6M674.1,239.3L675.6,243.2M674.8,238.7V244M675.6,243.2L677.1,245.4M676.4,242V245.6M677.1,245.4L678.6,247.2M677.9,244.4V248.3M678.6,247.2L680.1,247M679.4,246.1V251.2M680.1,247L681.6,248.4M680.9,246.3V248.5M681.6,248.4L683.1,252.7M682.4,248V253.3M683.1,252.7L684.7,255.3M683.9,252V256.4M684.7,255.3L686.2,256.8M685.4,255V257.3M686.2,256.8L687.7,258.4M686.9,256.1V259.5M687.7,258.4L689.2,267.9M688.5,258V268.6M689.2,267.9L690.8,274.3M690,267.9V275.4M690.8,274.3L692.3,283M691.5,273.7V284.1M692.3,283L693.8,290M693,282.2V290.4M714,270.7L715.4,275.7M714.7,270.3V276.6M716.7,281.5L718.1,286.6M717.4,280.7V287M729.7,286.8L731.1,292.5M730.4,286V292.8M731.1,292.5L732.5,297.4M731.8,291.7V298.3M732.5,297.4L733.9,310.3M733.2,293.7V310.7M742.2,354.3L743.6,355.3M742.9,352V358M747.8,340.3L749.2,335.6M748.5,333.6V341.2M749.2,335.6L750.9,327.4M750.1,322.7V336.8M757.5,272.8L758.9,279.1M758.2,269.9V283.8M758.9,279.1L760.2,286.5M759.5,277.9V287.9M760.2,286.5L761.6,292.2M760.9,285.5V295.5M776.9,329.2L778.2,333.9M777.6,327V337.4M778.2,333.9L779.6,337.2M778.9,331.3V339M779.6,337.2L781,341.8M780.3,335.4V346.9M781,341.8L782.5,347M781.7,340.4V348.6M782.5,347L783.9,352.8M783.2,344.9V358.1M786.6,346.8L788,343.8M787.3,341.8V348.9M788,343.8L789.4,340.7M788.7,340.7V348.6M794.9,335.2L796.3,332.4M795.6,331.2V339M797.7,331.7L799.8,345M798.8,328.4V346.2M803.3,298.7L804.7,298.7M804,298.1V299.2M812.3,277.7L814,283.1M813.2,276.9V284M814,283.1L815.8,290.3M814.9,279.8V290.9M818.6,281.1L820,277M819.3,276.7V282.1M820,277L821.4,278.3M820.7,275.5V279.6M821.4,278.3L822.8,277.7M822.1,277.7V279.5M822.8,277.7L824.1,278.3M823.4,276.5V279.5M824.1,278.3L825.5,280.4M824.8,278.3V280.5M831.1,258.4L832.5,259.7M831.8,253.3V260.8M832.5,259.7L833.9,259.3M833.2,258.5V260.3M835.3,261.1L836.6,263.1M836,260V263.6M836.6,263.1L838,264.1M837.3,262.9V265.3M838,264.1L839.4,263.6M838.7,263.5V265M847.1,240.1L848.7,242.2M847.9,238.8V243.5M848.7,242.2L850.4,244.9M849.5,241V245.3M850.4,244.9L852,246.9M851.2,244.9V248M852,246.9L853.3,261.5M852.6,245.9V262.6M857.5,250.5L858.9,258.9M858.2,249.2V259.1M858.9,258.9L860.3,265.1M859.6,258.8V266M860.3,265.1L861.6,270.5M861,264.5V271.4M861.6,270.5L863,274.7M862.3,270.2V274.8M863,274.7L864.4,278.1M863.7,274.4V279M864.4,278.1L865.8,279.7M865.1,277.4V280.4M865.8,279.7L867.2,282.3M866.5,279.2V282.4M868.6,283.9L870,286.4M869.3,283.5V287.3M870,286.4L871.4,287.7M870.7,286.3V288.2M871.4,287.7L872.8,289.2M872.1,286.7V290.3M872.8,289.2L874.1,289.8M873.5,287.9V291M874.1,289.8L875.5,291.6M874.8,289V291.8M875.5,291.6L876.9,293.8M876.2,290.3V294.6M876.9,293.8L878.3,299.6M877.6,289.4V299.7M878.3,299.6L879.7,306.8M879,298.6V307.8M879.7,306.8L881.8,314.9M880.8,306.1V315.2M892.9,280.5L894.5,280.1M893.7,278.8V280.6M894.5,280.1L896,281.6M895.3,279.8V282.8M896,281.6L897.6,283.5M896.8,281.3V284.1M897.6,283.5L899.2,284.2M898.4,282.9V284.4M899.2,284.2L900.6,285.3M899.9,284V286M900.6,285.3L902,286.3M901.3,284.5V286.4M902,286.3L903.3,288.9M902.6,285.6V289.6M903.3,288.9L904.7,290.5M904,288.8V291.7M904.7,290.5L906.1,294M905.4,290V294.3M906.1,294L907.5,295.9M906.8,292.9V298.4M907.5,295.9L908.9,298.9M908.2,295.7V299.7M908.9,298.9L910.3,302.2M909.6,293.3V302.5M917.2,305.6L919,306.8M918.1,305.3V308.1M919,306.8L920.7,311.3M919.8,306.1V313.7M925.5,303.7L926.9,304.3M926.2,302.4V304.9M926.9,304.3L928.3,305.2M927.6,303.3V305.8M928.3,305.2L929.7,308.1M929,304.3V309.1M931.1,308.6L932.5,310.4M931.8,307.7V310.7M954.7,304.1L956.1,302.4M955.4,302.4V305.4M974.2,283.6L975.6,282.4M974.9,281.3V284M986.7,279.9L988.4,282M987.5,279.1V282.1M988.4,282L990,282.9M989.2,281.5V283.4M991.4,284.4L992.8,284.2M992.1,284.1V285.1M992.8,284.2L994.1,286M993.5,284V286.5M994.1,286L995.5,287.8M994.8,285.7V287.9M995.5,287.8L996.9,288M996.2,286.6V288.6M996.9,288L998.3,291.6M997.6,287.7V292.5M1012.2,282.9L1013.6,281.2M1012.9,280.2V283.9M1015,280.2L1016.4,281.4M1015.7,279.1V282.5M1016.4,281.4L1017.8,283M1017.1,281.3V283.9M1017.8,283L1019.1,283M1018.5,282.9V283.7M1019.1,283L1020.5,284.3M1019.8,282V285.4M1020.5,284.3L1021.9,285.3M1021.2,284V289.7M1021.9,285.3L1023.3,287.8M1022.6,281.5V288M1027.5,280.8L1028.9,282.2M1028.2,280.1V283.4M1028.9,282.2L1030.3,283M1029.6,281.8V284.2M1030.3,283L1031.6,285.2M1031,278.8V285.7M1031.6,285.2L1033,285.1M1032.3,285V286.2M1033,285.1L1034.4,287.9M1033.7,284.8V289M1035.8,285.5L1037.2,282.8M1036.5,282.6V286M1076.1,273.9L1077.5,276.1M1076.8,273.5V276.9M1077.5,276.1L1078.9,278M1078.2,275.7V278.5M1078.9,278L1080.2,279M1079.6,277.6V280.1M1080.2,279L1081.6,280.7M1080.9,279V280.7M1081.6,280.7L1083,283.9M1082.3,279V284.8M1083,283.9L1084.4,284.2M1083.7,282.7V285.4M1084.4,284.2L1085.8,284.1M1085.1,283.5V285.2M1087.2,280.6L1088.6,278.5M1087.9,277.9V280.7M1099.6,267.7L1101,264.7M1100.3,263.6V268.4M1110.8,261.5L1112.2,258.2M1111.5,257.2V262.5M1148.3,252L1149.7,252.3M1149,251.3V253.2M1149.7,252.3L1151.1,253M1150.4,251.9V253.3M1151.1,253L1152.5,254.4M1151.8,253V254.7M1152.5,254.4L1153.9,256.5M1153.2,253.3V257.4M1155.3,257.2L1156.7,255.7M1156,255.3V257.2M1195.5,207.3L1196.9,211.5M1196.2,206.4V212.5M1198.3,217.3L1199.7,221M1199,216.4V221.7M1199.7,221L1201.1,226.7M1200.4,220.1V226.9M1209.4,206.1L1210.8,206.3M1210.1,205.3V207.1M1215,202.7L1216.5,206.5M1215.8,201.8V207.2M1218.1,211L1219.7,213.7M1218.9,209.9V214.7M1219.7,213.7L1221.2,217.6M1220.4,213.3V218M1238.6,194.8L1240,201.5M1239.3,194.3V202.3M1240,201.5L1241.4,209.9M1240.7,200.6V210.3M1244.2,194.8L1245.8,195.9M1245,194.6V196.3M1245.8,195.9L1247.4,196.7M1246.6,194.7V198M1247.4,196.7L1249.1,197.5M1248.2,196.4V202M1249.1,197.5L1250.7,199.2M1249.9,197.2V199.8M1250.7,199.2L1252.3,199.9M1251.5,198.7V200.7M1252.3,199.9L1253.9,200.9M1253.1,199.2V201.9M1253.9,200.9L1255.3,209.4M1254.6,199.9V210.7M1258,207.2L1259.4,206.7M1258.7,206.4V207.8M1273.9,200.6L1275.3,201.3M1274.6,200.4V201.7M1275.3,201.3L1276.7,203.4M1276,200.7V203.6M1276.7,203.4L1278,204.9M1277.3,202.7V205.9M1278,204.9L1279.4,205.7M1278.7,204.3V206.4M1279.4,205.7L1280.8,208.3M1280.1,205.1V209.3M1296.1,202.2L1297.7,204.7M1296.9,201.9V205.2M1297.7,204.7L1299.3,206.2M1298.5,203.5V206.8M1299.3,206.2L1300.9,207.7M1300.1,205.2V208.8M1300.9,207.7L1302.6,207.9M1301.8,207.2V208.8M1302.6,207.9L1304.2,210.2M1303.4,207.7V210.8M1304.2,210.2L1305.8,210.7M1305,210V211.2M1311.4,204.4L1312.8,205.5M1312.1,203.3V206.4M1312.8,205.5L1314.2,206M1313.5,205.4V206.7M1314.2,206L1315.6,207.5M1314.9,204.9V207.7M1315.6,207.5L1316.9,209.7M1316.2,207.2V210.4M1316.9,209.7L1318.3,210.7M1317.6,204V214.8M1318.3,210.7L1319.7,210.7M1319,210V211.8M1330.8,208.5L1332.2,206M1331.5,201.9V209.1M1354.4,200.9L1355.8,201.7M1355.1,200.7V202.2M1355.8,201.7L1357.2,205.3M1356.5,201.4V208.1M1357.2,205.3L1358.6,207.7M1357.9,204.9V213.2M1358.6,207.7L1360,209.7M1359.3,207.3V209.7M1360,209.7L1361.4,212.3M1360.7,208.3V212.6M1361.4,212.3L1362.8,215.5M1362.1,212.1V215.7M1362.8,215.5L1364.2,218.5M1363.5,215.2V223.3M1364.2,218.5L1365.5,230.5M1364.8,217.2V231.3M1383.6,206.3L1385,204M1384.3,203V206.9M1397.5,198.9L1398.9,199.9M1398.2,198.8V199.9M1398.9,199.9L1400.3,200.6M1399.6,199V201.6M1400.3,200.6L1401.7,202.1M1401,200.2V202.3M1401.7,202.1L1403,202.8M1402.3,201.1V203.5M1403,202.8L1404.4,202.8M1403.7,202V204M1404.4,202.8L1405.8,203M1405.1,202.3V204.2M1412.8,203.2L1414.2,205.4M1413.5,203.2V205.9M1414.2,205.4L1415.6,205.8M1414.9,204.3V206.6M1415.6,205.8L1416.9,209.1M1416.2,205.2V210M1416.9,209.1L1418.3,210.3M1417.6,208.3V210.6M1418.3,210.3L1419.7,212.7M1419,208.1V213.8M1419.7,212.7L1421.1,204.6M1420.4,203.5V215.4M1433.6,200.7L1435,201.1M1434.3,199.7V201.1M1435,201.1L1436.4,201.8M1435.7,201V201.9M1436.4,201.8L1437.8,203.4M1437.1,201.5V203.7M1437.8,203.4L1439.2,205.5M1438.5,202.6V206.3M1439.2,205.5L1440.6,206.1M1439.9,204.3V206.8M1440.6,206.1L1442,207.8M1441.3,205.1V208.5M1442,207.8L1443.4,206.8M1442.7,206.8V208.4M1475.3,192.1L1476.6,188.9M1476,188.2V193.2M1479.4,186.8L1480.8,187.1M1480.1,185.6V188.3M1482.2,189.3L1483.6,189.5M1482.9,183.8V190.5M1483.6,189.5L1485,191.1M1484.3,189.2V191.7M1485,191.1L1486.4,191.5M1485.7,190V191.6M1486.4,191.5L1487.8,193.4M1487.1,191V194.2M1489.2,195.1L1490.6,195.3M1489.9,194.5V195.8M1490.6,195.3L1492,195.9M1491.3,195V196.7M1493.3,191.9L1494.7,186.7M1494,185.9V192M1494.7,186.7L1496.1,191.8M1495.4,185.6V192.1M1539.4,180.1L1541,180.9M1540.2,179.5V181M1541,180.9L1542.5,180.5M1541.8,180.3V185.5M1542.5,180.5L1544.1,182M1543.3,179.8V182.5M1544.1,182L1545.7,183.6M1544.9,181.8V184.1M1545.7,183.6L1547.2,184.1M1546.5,181.3V184.3M1547.2,184.1L1548.8,184.1M1548,183.9V184.3M1635.5,191.2L1637,191.7M1636.2,190.8V192.7M1637,191.7L1638.5,192.5M1637.8,190.8V192.5M1638.5,192.5L1640,194.5M1639.2,191.8V195.3M1640,194.5L1641.5,195.1M1640.8,193.3V200.4M1641.5,195.1L1643,197.5M1642.2,193.9V198.3M1644.5,194.2L1646,194.2M1645.3,193.4V194.6M1650.6,189.4L1652,189.3M1651.3,189V190M1652,189.3L1653.4,190.7M1652.7,188.1V190.7M1653.4,190.7L1654.8,191.7M1654.1,190.2V192.5M1654.8,191.7L1656.2,194.2M1655.5,191.3V195.1M1656.2,194.2L1657.7,196M1657,193.1V196.2M1657.7,196L1659.1,197.3M1658.4,195.8V197.8M1659.1,197.3L1660.5,198.1M1659.8,196.5V198.6M1660.5,198.1L1661.9,200.4M1661.2,197.7V201.5M1686.4,186.4L1688,186.5M1687.2,185.8V186.9M1688,186.5L1689.5,187.2M1688.8,185.9V188.3M1691.1,188.3L1692.7,189.6M1691.9,188.1V190.5M1692.7,189.6L1694.2,188.7M1693.5,187.4V189.7M1694.2,188.7L1695.8,189.9M1695,188V190.3M1718.4,187.5L1719.8,186.5M1719.1,186.3V188.8M1719.8,186.5L1721.2,184.6M1720.5,179.5V186.8M1837.1,164.4L1838.5,165.4M1837.8,163.5V166.7M1838.5,165.4L1839.9,166.6M1839.2,164.5V167.8M1839.9,166.6L1841.3,167.5M1840.6,166.6V168.2M1841.3,167.5L1842.7,170M1842,166.9V170.3M1842.7,170L1840.8,178.3M1841.8,169.4V178.8M1840.8,178.3L1842.3,177.7M1841.6,177V178.7M1854,176.7L1855.4,177.8M1854.7,176.2V178.4M1855.4,177.8L1856.8,180.7M1856.1,177.5V182.2M1856.8,180.7L1858.3,182.9M1857.6,180V183M1858.3,182.9L1859.7,187.3M1859,182.7V188.5M1865.7,178.7L1867.2,176.4M1866.5,173.1V179.2M1876.2,178.9L1877.6,182.2M1876.9,178.8V182.8M1877.6,182.2L1879,184.1M1878.3,181.3V185.6M1879,184.1L1880.4,185.5M1879.7,182.9V186.6" stroke="#1f7fe8" stroke-width="2.6" fill="none" stroke-linecap="butt"/>
<path d="M175.4,165.9L176.8,159.2M176.1,159V166.1M176.8,159.2L178.2,153.8M177.5,153.7V159.3M178.2,153.8L179.6,147.5M178.9,144.3V154.3M185,152.7L186.4,144.2M185.7,143.5V153M186.4,144.2L187.8,136M187.1,134.7V144.4M218.2,237L219.6,219.3M218.9,219V237.6M219.6,219.3L221,204.3M220.3,204V220.6M229.3,206.8L230.7,202.8M230,201.9V208M230.7,202.8L232.1,199.7M231.4,199.6V203.2M232.1,199.7L233.4,195.4M232.7,195.3V200.6M233.4,195.4L234.8,191.3M234.1,191.2V195.9M234.8,191.3L236.2,183.9M235.5,178.4V192.5M236.2,183.9L237.6,178.4M236.9,178.2V184M237.6,178.4L238.9,174.4M238.2,173.6V179.2M238.9,174.4L240.3,169.3M239.6,169.1V174.7M240.3,169.3L241.7,154.5M241,154.5V169.6M269.4,162.5L270.7,165.8M270,162.4V167.1M273.5,169.3L275.1,167.3M274.3,166.5V169.5M275.1,167.3L276.7,165.2M275.9,164.2V167.9M276.7,165.2L278.3,163.4M277.5,162.9V166.1M278.3,163.4L279.9,162.3M279.1,161.4V164.3M279.9,162.3L281.5,161.8M280.7,161.4V162.4M281.5,161.8L283.1,160.5M282.3,159.6V162.1M285.9,168L287.2,173.4M286.6,167.9V173.6M287.2,173.4L288.6,178M287.9,172.7V178.7M295.6,195.6L297,193.8M296.3,193.6V196.1M297,193.8L298.4,192.9M297.7,191.9V194.7M298.4,192.9L299.7,190.1M299,189.8V193.3M299.7,190.1L301.1,188.5M300.4,187.5V190.5M301.1,188.5L302.5,184.2M301.8,183.1V189.7M302.5,184.2L303.9,180.2M303.2,179.9V188M303.9,180.2L305.2,176.8M304.6,176.5V180.8M305.2,176.8L306.6,174.9M305.9,174.1V178M306.6,174.9L308,170.9M307.3,169.8V175.9M308,170.9L309.4,166.6M308.7,165.7V172.1M398.1,196.6L399.6,192.5M398.9,187.5V197.7M399.6,192.5L401.1,192.1M400.4,191.7V193.1M401.1,192.1L402.7,188.1M401.9,187.1V193.4M402.7,188.1L404.2,186.2M403.4,183.3V189.3M404.2,186.2L405.5,191.2M404.9,182V191.8M405.5,191.2L406.9,195.3M406.2,190.9V196.1M457.3,229.6L458.9,229M458.1,228.3V230.2M464.9,237.1L466.4,229.3M465.7,228.6V237.3M466.4,229.3L468,222.4M467.2,221.6V229.4M468,222.4L470,212.6M469,212.4V223.6M470,212.6L471.3,210.1M470.7,209V213.2M471.3,210.1L472.7,208.3M472,207.9V210.5M478.6,218.3L480.1,219M479.4,217.5V220.1M515.6,234.5L517.2,234.1M516.4,233.6V235.5M517.2,234.1L518.8,233.7M518,233.1V234.5M518.8,233.7L520.5,233M519.7,232.3V234.9M520.5,233L522.1,232.4M521.3,231.3V233.3M522.1,232.4L523.7,231.8M522.9,228.9V233M526.7,232.2L528.2,234.8M527.5,231.3V235M539.9,234.3L541.4,233.9M540.7,233.9V235.4M541.4,233.9L543,231.2M542.2,231V234.6M543,231.2L544.5,228.6M543.7,228V232M544.5,228.6L546,226.8M545.2,226.6V228.8M546,226.8L547.5,226.3M546.8,225.6V227.6M547.5,226.3L549,223.5M548.2,223.4V226.7M549,223.5L550.5,221.1M549.8,220.9V223.6M550.5,221.1L552,220.6M551.2,220.1V226M693.8,290L695.3,285.9M694.6,284.2V290.4M695.3,285.9L696.8,279.9M696.1,279.3V285.9M696.8,279.9L698.4,276.7M697.6,276.7V281.9M698.4,276.7L699.9,270.9M699.1,270.5V277.3M715.4,275.7L716.7,281.5M716,275.2V282.2M736,333.9L737.7,345.9M736.9,333.1V349.9M737.7,345.9L739.4,357M738.5,343.7V360M739.4,357L740.8,356.4M740.1,353.2V360.8M740.8,356.4L742.2,354.3M741.5,350.4V358M743.6,355.3L745,353.4M744.3,353.4V358.7M745,353.4L746.4,348.4M745.7,343.2V357.4M746.4,348.4L747.8,340.3M747.1,337.1V351.3M750.9,327.4L752.6,318.2M751.8,314.9V331.6M752.6,318.2L753.3,342.2M753,313.5V349.2M765.8,332.5L767.2,331.3M766.5,330.3V337.7M767.2,331.3L768.6,327.2M767.9,326.6V331.3M768.6,327.2L770,325.7M769.3,321.8V328.1M775.5,323.6L776.9,329.2M776.2,321.9V329.8M783.9,352.8L785.3,348.4M784.6,345.6V356.3M785.3,348.4L786.6,346.8M786,343V350M789.4,340.7L790.8,339.4M790.1,337.4V341.7M790.8,339.4L792.2,338.4M791.5,334.3V339.6M792.2,338.4L793.5,335.3M792.9,332V340.1M793.5,335.3L794.9,335.2M794.2,331.3V338M796.3,332.4L797.7,331.7M797,329.7V335.6M801.2,317.2L803.3,298.7M802.2,293.8V318.1M804.7,298.7L806,296.3M805.4,295.1V299.5M806,296.3L807.4,295.5M806.7,294.4V301.4M807.4,295.5L808.8,293.6M808.1,293.6V296.3M808.8,293.6L810.5,285.9M809.7,285.1V294M810.5,285.9L812.3,277.7M811.4,277.6V286.1M815.8,290.3L817.2,285.3M816.5,285V291.2M817.2,285.3L818.6,281.1M817.9,279.9V285.4M825.5,280.4L826.9,275M826.2,274.7V280.6M826.9,275L828.3,270.7M827.6,269.7V280.4M828.3,270.7L829.7,266.5M829,265.5V271.5M829.7,266.5L831.1,258.4M830.4,255.5V266.9M833.9,259.3L835.3,261.1M834.6,258.6V261.2M839.4,263.6L840.8,262.7M840.1,262.1V264.4M840.8,262.7L842.2,262.1M841.5,261.1V263.9M842.2,262.1L843.6,260.8M842.9,260.8V263.2M843.6,260.8L845,243.3M844.3,243.1V261.4M845,243.3L847.1,240.1M846,239.7V243.7M853.3,261.5L854.7,259.1M854,259V261.9M854.7,259.1L856.1,254.7M855.4,254V259.3M856.1,254.7L857.5,250.5M856.8,249.8V255.3M867.2,282.3L868.6,283.9M867.9,281.4V284.9M881.8,314.9L883.2,312.5M882.5,312V315.2M883.2,312.5L884.6,311.3M883.9,310.8V313.4M884.6,311.3L886,309.7M885.3,309.7V312.4M886,309.7L887.6,305.5M886.8,304.9V310.3M887.6,305.5L889.2,298.3M888.4,298.1V305.7M889.2,298.3L890.8,293.9M890,291.9V298.9M890.8,293.9L892.9,280.5M891.8,280.4V294.9M920.7,311.3L922.3,308.4M921.5,307.7V311.9M922.3,308.4L923.9,305.4M923.1,304.2V308.8M923.9,305.4L925.5,303.7M924.7,303.6V306.9M929.7,308.1L931.1,308.6M930.4,307.8V309.8M932.5,310.4L933.9,308.9M933.2,308V311.3M933.9,308.9L935.3,308.4M934.6,307.5V308.9M935.3,308.4L936.6,306.7M936,305.7V308.6M936.6,306.7L938,303.7M937.3,303.4V307.9M938,303.7L939.4,303.5M938.7,302.3V304M951.9,307.5L953.3,306.3M952.6,305.4V308.5M953.3,306.3L954.7,304.1M954,304.1V306.7M956.1,302.4L957.5,300.5M956.8,300.1V302.8M957.5,300.5L958.9,298.6M958.2,297.8V300.7M958.9,298.6L960.2,298.8M959.6,297.7V299.9M960.2,298.8L961.6,297.4M960.9,296.8V300.1M961.6,297.4L963,296.7M962.3,296.5V297.9M963,296.7L964.4,295.6M963.7,294.6V296.9M964.4,295.6L965.8,292.3M965.1,291.4V296.6M965.8,292.3L967.2,290.7M966.5,289.8V292.5M967.2,290.7L968.6,288.5M967.9,288.4V291M968.6,288.5L970,288.3M969.3,287.6V288.6M970,288.3L971.4,284.9M970.7,284.5V289.2M971.4,284.9L972.8,283M972.1,282.7V285.7M972.8,283L974.2,283.6M973.5,282.7V284.7M975.6,282.4L976.9,280.4M976.2,279.6V282.4M976.9,280.4L978.3,280.9M977.6,279.2V281.5M978.3,280.9L979.7,280.2M979,279.5V281.4M990,282.9L991.4,284.4M990.7,282.8V285.4M1008,290.6L1009.4,288.3M1008.7,287.8V291.1M1009.4,288.3L1010.8,285.9M1010.1,285.6V288.8M1010.8,285.9L1012.2,282.9M1011.5,281.9V287.1M1013.6,281.2L1015,280.2M1014.3,279.7V281.4M1023.3,287.8L1024.7,285.1M1024,284.1V288.2M1024.7,285.1L1026.1,283M1025.4,282.4V286.1M1026.1,283L1027.5,280.8M1026.8,280V283.8M1034.4,287.9L1035.8,285.5M1035.1,284.2V288.4M1037.2,282.8L1038.6,281.8M1037.9,281.1V283.7M1085.8,284.1L1087.2,280.6M1086.5,280.5V285M1094.1,280.6L1095.5,272.8M1094.8,271.6V281.5M1095.5,272.8L1096.9,270.2M1096.2,270V276.5M1096.9,270.2L1098.2,269.9M1097.6,269.8V271.2M1098.2,269.9L1099.6,267.7M1098.9,266.5V270.3M1108,266.4L1109.4,263.5M1108.7,262.5V267.2M1109.4,263.5L1110.8,261.5M1110.1,260.9V264.7M1112.2,258.2L1113.6,255.9M1112.9,255.2V259.4M1113.6,255.9L1115,252.2M1114.3,252.1V256.1M1153.9,256.5L1155.3,257.2M1154.6,255.6V259.3M1156.7,255.7L1158,251.5M1157.4,250.7V255.7M1158,251.5L1159.4,249.9M1158.7,248.8V252.7M1159.4,249.9L1160.8,248.3M1160.1,247.6V251.1M1170.5,245.6L1172.1,240.4M1171.3,239.3V246.2M1172.1,240.4L1173.8,233.9M1173,233.4V242.5M1173.8,233.9L1175.4,230.3M1174.6,229.4V235M1187.2,227.6L1188.6,216.8M1187.9,215.9V227.9M1188.6,216.8L1190,205.2M1189.3,204.4V219.1M1190,205.2L1191.4,205.4M1190.7,205V206.3M1191.4,205.4L1192.7,203.2M1192,202.9V205.7M1192.7,203.2L1194.1,203.6M1193.4,202.7V203.7M1194.1,203.6L1195.5,207.3M1194.8,202.4V207.9M1196.9,211.5L1198.3,217.3M1197.6,210.4V217.5M1201.1,226.7L1202.5,221.7M1201.8,220.9V227.2M1202.5,221.7L1203.8,215.7M1203.2,214.8V223M1203.8,215.7L1205.2,209.9M1204.5,209.8V216.9M1205.2,209.9L1206.6,208M1205.9,206.8V210.1M1206.6,208L1208,208M1207.3,206.2V209.2M1208,208L1209.4,206.1M1208.7,204.9V209.2M1210.8,206.3L1212.2,204.2M1211.5,203.6V206.8M1212.2,204.2L1213.6,204.2M1212.9,203.9V204.8M1213.6,204.2L1215,202.7M1214.3,201.8V204.9M1216.5,206.5L1218.1,211M1217.3,205.9V211.4M1221.2,217.6L1222.8,216.5M1222,216.2V218.6M1222.8,216.5L1224.5,212.4M1223.7,211.6V218.7M1224.5,212.4L1226.1,210.8M1225.3,209.5V213.3M1226.1,210.8L1227.7,208.9M1226.9,208.6V210.9M1227.7,208.9L1229.2,206.1M1228.4,205.5V209.3M1229.2,206.1L1230.8,203.5M1230,202.3V207.3M1230.8,203.5L1232.3,201.5M1231.6,201V203.7M1232.3,201.5L1233.9,201.3M1233.1,200.1V201.9M1233.9,201.3L1235.5,197.7M1234.7,197.1V202.3M1235.5,197.7L1237,196.6M1236.3,195.4V198.2M1237,196.6L1238.6,194.8M1237.8,194.8V199M1241.4,209.9L1242.8,201.6M1242.1,200.4V210.7M1242.8,201.6L1244.2,194.8M1243.5,194.7V202.4M1255.3,209.4L1256.7,209.4M1256,208.7V209.5M1256.7,209.4L1258,207.2M1257.4,206.5V210.3M1259.4,206.7L1260.8,203.3M1260.1,203.1V207.1M1260.8,203.3L1262.3,204.2M1261.6,202.6V204.3M1262.3,204.2L1263.9,202M1263.1,201.9V204.9M1263.9,202L1265.5,201.5M1264.7,200.4V202.6M1265.5,201.5L1267,199.9M1266.2,199.3V202.4M1280.8,208.3L1282.2,205.4M1281.5,199.9V209.5M1282.2,205.4L1283.6,205.3M1282.9,204.2V206.4M1283.6,205.3L1285,203.5M1284.3,202.3V206.4M1285,203.5L1286.4,203.1M1285.7,202V204.6M1286.4,203.1L1287.8,202.4M1287.1,201.6V203.9M1305.8,210.7L1307.2,210.2M1306.5,209.8V211.3M1307.2,210.2L1308.6,206.6M1307.9,206.3V210.2M1308.6,206.6L1310,207.1M1309.3,205.5V207.9M1310,207.1L1311.4,204.4M1310.7,203.4V208.2M1326.7,213.2L1328.1,212.7M1327.4,212.1V213.6M1328.1,212.7L1329.5,210.9M1328.8,209.9V212.9M1329.5,210.9L1330.8,208.5M1330.1,208.1V211.8M1340.5,209.4L1341.9,208.7M1341.2,208.5V210.4M1341.9,208.7L1343.3,207.5M1342.6,206.7V211.8M1343.3,207.5L1344.7,205.8M1344,205V207.7M1344.7,205.8L1346.1,202.6M1345.4,201.5V206.5M1346.1,202.6L1347.5,202.3M1346.8,196.6V202.6M1365.5,230.5L1366.9,227.8M1366.2,227.7V231.3M1366.9,227.8L1368.3,226.3M1367.6,225.7V228.4M1368.3,226.3L1369.7,223.9M1369,223.5V227.2M1369.7,223.9L1371.1,222M1370.4,221.4V224.1M1371.1,222L1372.5,218.7M1371.8,217.8V222.6M1372.5,218.7L1373.8,218.1M1373.1,216.8V220M1373.8,218.1L1375.2,215.1M1374.5,214V218.4M1375.2,215.1L1376.6,213.2M1375.9,212.1V215.2M1376.6,213.2L1378,208.6M1377.3,208.2V213.4M1378,208.6L1379.4,209.5M1378.7,208.4V209.6M1379.4,209.5L1380.8,208.1M1380.1,206.3V210.7M1380.8,208.1L1382.2,206M1381.5,205.5V209.1M1382.2,206L1383.6,206.3M1382.9,205.2V206.5M1390.5,206.7L1391.9,205.9M1391.2,205.5V207.1M1391.9,205.9L1393.3,203.7M1392.6,203.7V210.7M1393.3,203.7L1394.7,202.1M1394,202.1V204M1394.7,202.1L1396.1,199.7M1395.4,199.6V202.9M1396.1,199.7L1397.5,198.9M1396.8,198.6V200.2M1443.4,206.8L1444.8,204M1444.1,202.9V207.5M1444.8,204L1446.2,204M1445.5,203.5V204.2M1446.2,204L1447.5,201.3M1446.8,200.5V205M1447.5,201.3L1448.9,201.7M1448.2,200.2V202M1448.9,201.7L1450.3,199M1449.6,194.4V202.8M1472.5,196.9L1473.9,193.4M1473.2,192.6V197.3M1473.9,193.4L1475.3,192.1M1474.6,191.4V193.6M1476.6,188.9L1478,187.2M1477.3,187V189.8M1478,187.2L1479.4,186.8M1478.7,186.4V187.5M1480.8,187.1L1482.2,189.3M1481.5,186.9V190.1M1487.8,193.4L1489.2,195.1M1488.5,192.6V197.8M1492,195.9L1493.3,191.9M1492.7,191.6V196.6M1512.8,192.8L1514.2,190.8M1513.5,190.1V193.8M1514.2,190.8L1515.6,190.5M1514.9,189.5V191.8M1515.6,190.5L1516.9,186.8M1516.2,185.8V192.4M1516.9,186.8L1518.3,186.8M1517.6,185.8V187.4M1518.3,186.8L1519.7,184.8M1519,184.5V187.6M1643,197.5L1644.5,194.2M1643.8,193.8V197.8M1646,194.2L1647.6,191.9M1646.8,187.6V194.7M1647.6,191.9L1649.1,189.8M1648.3,188.6V192.2M1649.1,189.8L1650.6,189.4M1649.8,188.7V190.9M1661.9,200.4L1663.8,195.1M1662.8,194.4V201.1M1663.8,195.1L1665.6,191.8M1664.7,191.6V195.5M1689.5,187.2L1691.1,188.3M1690.3,187.2V189.3M1721.2,184.6L1722.6,182.3M1721.9,181.6V185.8M1722.6,182.3L1724,180.6M1723.3,177.5V183.6M1827.7,169.1L1829.1,167.3M1828.4,166.2V169.2M1829.1,167.3L1830.5,165.9M1829.8,164.7V168.1M1830.5,165.9L1831.9,164.4M1831.2,163.4V166.7M1831.9,164.4L1833.3,163.7M1832.6,162.5V164.9M1859.7,187.3L1861.2,185.1M1860.5,184.3V188.5M1861.2,185.1L1862.7,183M1862,181.9V185.4M1862.7,183L1864.2,180.3M1863.5,179.6V183.6M1864.2,180.3L1865.7,178.7M1865,178V181.4M1874.8,176.4L1876.2,178.9M1875.5,175.9V179M1880.4,185.5L1882,183.2M1881.2,182.2V186.8M1882,183.2L1883.5,181.6M1882.8,181.3V184M1883.5,181.6L1885.1,180.1M1884.3,175.3V181.9M1885.1,180.1L1886.7,179.9M1885.9,179.8V181.3M1886.7,179.9L1888.2,177.7M1887.5,177.7V180.7M1888.2,177.7L1889.8,177.3M1889,177.1V178.6" stroke="#ff1010" stroke-width="2.6" fill="none" stroke-linecap="butt"/>
<path d="M13,428L14.6,429.2M13.8,427.6V430.1M21,428L22.6,430.1M21.8,427.3V432.6M30.3,430.3L31.9,431M31.1,429.6V431.3M50.9,432.7L52.3,432.7M51.6,432.1V433.1M61.3,431.8L62.8,431.7M62.1,430.4V432.4M62.8,431.7L64.4,432.8M63.6,430.8V433.7M64.4,432.8L65.9,432.8M65.1,431.8V433.4M68.9,434.1L70.4,433.9M69.7,432.8V434.4M76.5,434.2L78,434.2M77.2,432.9V435.4M89.8,434.3L91.3,433.2M90.5,433.1V435.5M91.3,433.2L92.8,432.1M92,427V434M97.2,432.7L98.7,431.9M98,430.6V438.2M98.7,431.9L100.2,432M99.5,431.9V432.6M104.7,431.1L106.2,429.8M105.5,428.9V431.5M110.7,430L112.2,428.2M111.5,425.9V430.1M115.2,429L116.7,429.7M116,428.1V430.6M124.2,426.9L125.7,427M125,426.9V427.4M131.7,428.2L133.2,428.3M132.4,428.1V428.7M133.2,428.3L134.7,429M133.9,427.6V429.3M139.1,429.3L140.6,428.7M139.9,428.1V430.2M149.6,429.4L151.1,428.2M150.3,427.1V430.6M151.1,428.2L152.6,428.9M151.8,428V429.2M152.6,428.9L154.1,427.8M153.3,426.8V430M157.1,427.9L158.6,427.4M157.8,427V428.5M272.3,527.8L273.8,528.1M273,527.2V528.4M300.7,552L302.2,550.8M301.4,550.2V553M324.6,531.7L326.1,532.7M325.4,529.7V533.5M345.6,552.4L347.1,554.7M346.3,551.5V555.2M354.5,556.3L356,557.2M355.3,556V557.6M357.5,557.7L359,558M358.3,557.6V558.2M365,557.8L366.5,557.4M365.8,556.3V559.1M369.5,557.7L371,557.8M370.2,552.9V558.4M382.8,559.4L384.2,560.6M383.5,558.8V560.8M401.3,555.5L402.7,553.8M402,552.7V559.3M402.7,553.8L404.1,553.2M403.4,552.1V554.6M476.5,558.1L478,557.7M477.2,556.5V558.5M526.9,567.5L528.4,566.6M527.6,563.7V568.5M528.4,566.6L529.9,564.7M529.1,564V566.6M532.9,563.2L534.4,563.1M533.6,561.8V563.8M543.3,560.1L544.8,559.1M544.1,557.9V560.3M557.8,567.6L559.3,566.2M558.6,565.8V568.4M559.3,566.2L560.9,567.7M560.1,565.1V568.7M560.9,567.7L562.4,566.8M561.7,566.6V572M562.4,566.8L564,566.4M563.2,564.8V572.1M564,566.4L565.5,565.1M564.7,563.9V566.8M568.6,565.4L570.1,566.8M569.4,565.3V568M573.2,566.3L574.7,565.3M573.9,565.2V566.9M576.2,567.4L577.7,567.1M577,566.1V567.9M580.8,567.4L582.3,566.3M581.5,565.4V568.3M593,569.4L594.5,569.5M593.8,569V569.8M599.1,569L600.6,569.3M599.9,568.3V569.6M603.7,571.3L605.2,570.1M604.5,570V572.5M612.6,571.4L614,571.8M613.3,571.1V572.7M615.5,573.5L616.9,573.3M616.2,573.2V574M616.9,573.3L618.4,574.1M617.6,572.4V574.9M621.2,573.6L622.7,573.7M621.9,572.5V574.4M624.1,575.4L625.6,575.1M624.9,574.1V575.4M628.7,575.3L630.2,573.9M629.5,570.9V575.8M634.8,575.7L636.3,575.7M635.6,575.2V576.5M636.3,575.7L637.9,575.7M637.1,571.6V576.8M640.9,574.4L642.5,575.8M641.7,573.5V576.3M661.3,573.1L662.8,574.4M662.1,572.4V575.5M677.7,585.7L679.3,585.9M678.5,585.4V586.1M680.9,585.8L682.4,585.3M681.7,584.3V586M695.5,601.1L697,602.2M696.2,600.4V603M697,602.2L698.5,601.7M697.8,600.9V602.6M700,601.9L701.5,601.5M700.8,601.1V602.6M701.5,601.5L703,601.9M702.2,601.2V601.9M703,601.9L704.5,600.5M703.8,599.7V604.4M740.7,687.1L742.1,687.2M741.4,682.2V689.2M836.4,606.2L837.9,607.2M837.1,605.3V608.2M843.8,604.9L845.2,603.8M844.5,601.1V606.1M846.7,602.8L848.2,602.6M847.5,601.4V603M930.7,644.3L932.2,645.3M931.5,643.8V646.1M976.4,624.7L977.9,622.8M977.1,619V625.5M977.9,622.8L979.3,623.4M978.6,621.6V624M979.3,623.4L980.8,622.3M980.1,621.8V624.3M980.8,622.3L982.3,621.7M981.5,621.2V622.9M983.8,624.2L985.2,623.6M984.5,623.3V624.9M985.2,623.6L986.7,625.9M986,623.6V626.6M1023.4,622.1L1024.8,621M1024.1,620.4V623.2M1029.1,619.3L1030.5,620.4M1029.8,618V621.2M1049.1,624.5L1050.5,625.8M1049.8,623.9V626.9M1066.7,630.3L1068.1,630.9M1067.4,630.1V631.9M1105.8,625.6L1107.4,625.4M1106.6,624.7V625.7M1141.9,612L1143.3,612.1M1142.6,610.9V612.3M1149,615.3L1150.5,614.6M1149.8,613.6V615.6M1165.2,605.4L1166.7,606.7M1165.9,604.7V607.2M1166.7,606.7L1168.1,606.7M1167.4,605.8V608M1168.1,606.7L1169.5,605.5M1168.8,602.1V607.8M1170.9,604.9L1172.4,605.1M1171.7,603.9V605.9M1179.6,603.9L1181.1,605.3M1180.4,602.9V605.5M1185.7,605.2L1187.2,604.9M1186.4,603.9V606.1M1190.2,605.3L1191.8,607.1M1191,604.4V607.9M1235.2,594.5L1236.7,594.5M1236,593.8V595M1266.2,594.4L1267.7,596.3M1266.9,593.5V596.5M1352.9,585.7L1354.3,585.5M1353.6,584.4V586.8M1384.8,590.7L1386.2,588.8M1385.5,587.7V591.5M1390.5,588.8L1391.9,590M1391.2,588.3V592.2M1427.1,587.4L1428.6,587.2M1427.9,586.6V588.6M1437.2,585.9L1438.6,587.6M1437.9,584.8V587.8M1455.8,583.2L1457.2,584.5M1456.5,582V585.7M1474.7,577.4L1476.2,576.8M1475.4,575.7V577.8M1477.6,576.7L1479.1,578.3M1478.3,575.5V578.4M1505.6,576L1507.1,576.4M1506.3,575.9V576.4M1518.7,575.1L1520.1,574.2M1519.4,573.7V575.8M1587,579L1588.5,578.7M1587.8,578V579M1588.5,578.7L1590,577.8M1589.2,576.7V578.8M1598.8,575.6L1600.3,574.9M1599.5,569V575.6M1600.3,574.9L1601.7,576.2M1601,573.7V576.3M1606.1,574.5L1607.5,575M1606.8,573.7V576.2M1624.1,575L1625.7,573.9M1624.9,573.7V575.2M1625.7,573.9L1627.2,575.6M1626.4,573.6V576.6M1628.8,574L1630.3,575.1M1629.5,573.8V575.5M1635,573.3L1636.5,574M1635.8,572.1V577.8M1636.5,574L1638.1,573.3M1637.3,572.1V574.3M1642.3,575.3L1643.7,575.8M1643,574.2V576.8M1669.4,570.9L1670.8,568.9M1670.1,568.8V571.9M1670.8,568.9L1672.4,569.5M1671.6,568.2V570.2M1672.4,569.5L1673.9,567.8M1673.1,566.8V570.1M1683.2,567.4L1684.8,566.6M1684,566.3V567.4M1686.3,568L1687.9,566.8M1687.1,566.7V569M1692.5,569.4L1694.1,568.9M1693.3,567.8V569.6M1700.3,570.2L1701.8,569.2M1701,568.7V570.3M1708.1,567.8L1709.6,566.3M1708.8,565.6V568.5M1718.5,565.1L1720,566.1M1719.2,564.1V566.1M1727.5,564.3L1729.1,564.2M1728.3,564V564.6M1735.3,564.5L1736.8,563.5M1736.1,563.1V565.4M1736.8,563.5L1738.4,564.5M1737.6,563V565M1751.5,569.8L1753,568.5M1752.2,567.9V570M1754.4,568L1755.9,569.3M1755.2,567.3V569.5M1755.9,569.3L1757.4,568.7M1756.7,567.8V569.8M1760.4,567.6L1761.9,568.4M1761.1,566.6V569.7M1761.9,568.4L1763.3,568.4M1762.6,567.7V568.8M1763.3,568.4L1764.8,568.6M1764.1,567.7V569.8M1766.3,568.9L1767.9,567.3M1767.1,566.7V569.2M1785,569.3L1786.5,570.2M1785.7,568V570.5M1807.2,571.2L1808.6,570M1807.9,568.7V571.7M1819.2,566.1L1820.8,565.5M1820,565.3V566.9M1825.4,565.5L1827,565.8M1826.2,559.6V567.1M1833.2,567.3L1834.7,567.2M1834,567V567.7M1844,574.8L1845.6,575.3M1844.8,574.5V575.5M1845.6,575.3L1847.1,575.5M1846.3,574.4V576.4M1847.1,575.5L1848.7,577.3M1847.9,574.5V578.3M1851.8,577.7L1853.3,579M1852.6,577.2V579.8M1865.5,581.8L1867,581.5M1866.3,580.5V582.2M1870,580.4L1871.5,581.1M1870.7,580V581.5M1874.4,580.1L1875.9,580M1875.2,579V580.8M1875.9,580L1877.5,579.8M1876.7,577V581.2M1886.8,581.4L1888.3,580.9M1887.5,580.6V581.9M1893,581.1L1894.5,582.9M1893.7,579.9V583.9" stroke="#ff1010" stroke-width="2.1" fill="none" stroke-linecap="butt"/>
<path d="M14.6,429.2L16.2,427.8M15.4,425.6V430.4M17.8,427.7L19.4,429.1M18.6,426.8V430M19.4,429.1L21,428M20.2,427.8V430.2M22.6,430.1L24.1,430.1M23.3,428.9V430.3M24.1,430.1L25.7,429.6M24.9,428.8V431M31.9,431L33.4,432.3M32.7,429.9V432.7M33.4,432.3L35,432.4M34.2,432.2V433.6M39.2,432L40.7,432.3M40,431.3V433.4M40.7,432.3L42.1,432M41.4,431.1V432.4M43.5,433.5L44.9,433.6M44.2,432.5V434.5M49.4,433.9L50.9,432.7M50.1,432.3V435M53.8,432L55.3,432.3M54.6,431V432.3M55.3,432.3L56.8,433.2M56.1,432.2V433.4M56.8,433.2L58.3,432M57.6,431.5V433.7M58.3,432L59.8,430.8M59.1,430.6V432.7M70.4,433.9L72,432.7M71.2,431.9V435M72,432.7L73.5,432.8M72.7,431.8V432.9M75,434.4L76.5,434.2M75.7,433.5V434.7M79.4,433.8L80.9,432.7M80.2,431.6V434.6M83.9,434.4L85.4,433.8M84.6,433.1V434.8M85.4,433.8L86.8,432.5M86.1,432.2V434.5M86.8,432.5L88.3,432.6M87.6,431.8V432.9M88.3,432.6L89.8,434.3M89.1,432.3V434.3M95.8,433.1L97.2,432.7M96.5,432.5V434M106.2,429.8L107.7,429.2M107,428.1V430.6M112.2,428.2L113.7,428.2M113,427.9V429.2M113.7,428.2L115.2,429M114.5,427.4V429.7M121.2,427.2L122.7,428M122,426.2V428.4M122.7,428L124.2,426.9M123.5,426.6V428.9M128.7,427.6L130.2,426.8M129.4,424.7V428.2M130.2,426.8L131.7,428.2M130.9,426.2V429M136.1,428.9L137.6,427.5M136.9,426.9V429.6M142.1,429.7L143.6,428.9M142.9,427.6V435.7M148.1,427.7L149.6,429.4M148.8,427.6V429.8M275.2,526.8L276.7,526.6M276,526.2V527.6M278.2,527.2L279.7,526.8M279,525.7V527.2M296.2,555.2L297.7,554M296.9,548.6V555.6M297.7,554L299.2,553.5M298.4,552.5V554.9M299.2,553.5L300.7,552M299.9,551V554.3M320.1,529.9L321.6,531.7M320.9,529.4V537.8M323.1,532.3L324.6,531.7M323.9,531.5V533.4M327.6,534.2L329.1,533.9M328.4,533.4V535.2M344.1,553L345.6,552.4M344.8,551.3V554M347.1,554.7L348.6,554.6M347.8,553.7V555.1M350.1,554.6L351.5,555.9M350.8,554.4V556.2M359,558L360.5,556.6M359.8,556.6V558.6M366.5,557.4L368,557.5M367.2,556.6V558.6M372.5,558.5L374,557.1M373.2,556.9V559.4M374,557.1L375.5,557.1M374.8,556.5V557.1M388.6,564L390,564.7M389.3,563.6V566M404.1,553.2L405.6,553M404.9,552.2V553.4M405.6,553L407,551.9M406.3,551.6V553.7M407,551.9L408.4,551.4M407.7,550.5V553.2M470.7,560.2L472.2,559.5M471.5,559V565.8M472.2,559.5L473.6,558M472.9,557.3V560.3M475.1,558.3L476.5,558.1M475.8,557.3V558.8M483.8,556.9L485.2,555.7M484.5,555.1V556.9M486.7,556.6L488.2,556.6M487.4,551.5V556.8M488.2,556.6L489.7,555.6M488.9,555V556.8M494.1,556.9L495.6,557.4M494.9,555.7V558.2M495.6,557.4L497.1,557.2M496.4,556.7V558.4M497.1,557.2L498.5,558.4M497.8,556.2V558.9M498.5,558.4L500,557.5M499.3,556.6V559M500,557.5L501.4,556.3M500.7,555.9V558M508.7,555.8L510.1,554.2M509.4,553.1V556.9M510.1,554.2L511.6,554.9M510.8,553V555.5M511.6,554.9L513,554.4M512.3,553.3V555.5M529.9,564.7L531.4,564.6M530.6,563.9V564.9M534.4,563.1L535.8,562.8M535.1,562.4V563.3M540.3,560.6L541.8,561.2M541.1,559.9V562.3M554.7,567.1L556.2,566.9M555.5,565.7V567.3M556.2,566.9L557.8,567.6M557,566.3V568.7M574.7,565.3L576.2,567.4M575.5,564.3V567.5M577.7,567.1L579.3,567.4M578.5,566.2V568.2M586.9,567.6L588.4,566.7M587.6,566.7V568.1M588.4,566.7L589.9,567.2M589.2,562.1V567.7M602.2,570.1L603.7,571.3M602.9,564.5V572.3M608.3,571.7L609.7,572.5M609,571V572.9M609.7,572.5L611.2,571.8M610.5,570.7V572.7M614,571.8L615.5,573.5M614.8,571.5V574.2M618.4,574.1L619.8,573.1M619.1,571.9V575.2M625.6,575.1L627.2,574M626.4,573.3V575.8M627.2,574L628.7,575.3M627.9,573.9V576.1M630.2,573.9L631.8,574.9M631,573.5V575.6M637.9,575.7L639.4,574.7M638.6,573.6V576.9M652.5,573.4L653.9,574.2M653.2,572.4V574.6M655.4,573.8L656.9,573.6M656.2,573.2V574.9M679.3,585.9L680.9,585.8M680.1,585.1V586.9M682.4,585.3L684,583.9M683.2,583.4V585.4M707.5,601.5L708.9,601.5M708.2,599.9V602.7M710.3,600.6L711.7,600.4M711,600.4V601.3M711.7,600.4L713.2,601.8M712.5,599.2V602.9M714.6,601.8L716,601.7M715.3,601.1V601.9M742.1,687.2L743.6,686.9M742.9,684.7V687.4M837.9,607.2L839.4,605.7M838.6,605.4V607.6M842.3,604.4L843.8,604.9M843,604.1V605.4M927.8,647.1L929.2,644.6M928.5,643.6V648.3M933.7,644.5L935.1,642.7M934.4,642.5V645.7M935.1,642.7L936.6,643.2M935.9,641.7V644M1019.1,622.9L1020.5,622.2M1019.8,622V623.1M1027.6,620.2L1029.1,619.3M1028.4,618.1V621.2M1044.8,626.2L1046.2,625.9M1045.5,625.7V627.1M1072.4,630.1L1073.8,628.7M1073.1,628.3V633.4M1075.2,628.8L1076.7,628.3M1076,628V632.7M1139,611.1L1140.5,610.5M1139.7,610.3V611.5M1140.5,610.5L1141.9,612M1141.2,609.5V613.2M1144.8,613L1146.2,614.1M1145.5,612.1V615M1147.6,614.7L1149,615.3M1148.3,613.9V616.1M1150.5,614.6L1151.9,617.1M1151.2,613.6V618.3M1169.5,605.5L1170.9,604.9M1170.2,604.3V606.3M1172.4,605.1L1173.8,605.8M1173.1,605.1V606.9M1175.2,605.3L1176.7,603.7M1176,603.5V605.5M1176.7,603.7L1178.1,603.6M1177.4,603.5V605.8M1178.1,603.6L1179.6,603.9M1178.9,602.8V605M1182.7,604.4L1184.2,606M1183.4,604.1V607.2M1191.8,607.1L1193.3,605.4M1192.5,604.5V608M1229.5,596.7L1231,597M1230.2,595.8V598M1232.4,594.8L1233.8,595.5M1233.1,594V596.7M1238.1,592.5L1239.5,592.7M1238.8,591.9V592.8M1241,592.6L1242.4,592M1241.7,591.8V593.4M1267.7,596.3L1269.2,594.9M1268.4,594.8V596.4M1269.2,594.9L1270.7,596.3M1269.9,593.9V596.6M1272.2,596.1L1273.6,597.6M1272.9,595.7V598.7M1275.1,596.5L1276.6,598.3M1275.9,595.5V598.9M1276.6,598.3L1278.1,597.8M1277.4,597.4V598.8M1287.6,591.5L1289.1,592.1M1288.3,590.5V592.7M1298,592.1L1299.5,591.6M1298.8,591.4V592.7M1299.5,591.6L1300.9,591.6M1300.2,590.3V591.6M1302.4,591.7L1303.8,593.7M1303.1,590V594.8M1334.5,589.8L1336.1,589.9M1335.3,588.9V590M1336.1,589.9L1337.7,590.7M1336.9,589.6V591.4M1348.5,584L1350,584.4M1349.3,583.6V585.1M1350,584.4L1351.4,583.6M1350.7,583.3V584.7M1351.4,583.6L1352.9,585.7M1352.1,583.1V585.9M1365.4,602L1367,600.5M1366.2,599.3V602M1370.1,601.7L1371.7,599.8M1370.9,599.4V602.1M1381.9,590.5L1383.4,590.7M1382.6,589.6V591.1M1389.1,589.9L1390.5,588.8M1389.8,588V590.5M1391.9,590L1393.4,588.6M1392.7,587.8V590.7M1405.8,589.9L1407.4,590.2M1406.6,588.7V591.1M1425.7,589.4L1427.1,587.4M1426.4,586.8V590.1M1430,587L1431.5,585.3M1430.7,584.4V587.6M1440,588.5L1441.5,587.5M1440.7,587.3V589M1448.8,583.7L1450.2,582.8M1449.5,582.3V584.1M1450.2,582.8L1451.7,581.3M1451,580.1V583.2M1451.7,581.3L1453.1,582.1M1452.4,580.3V583.3M1454.5,582.4L1455.8,583.2M1455.2,582.3V583.3M1470.3,577.8L1471.8,577.4M1471,577.1V578M1476.2,576.8L1477.6,576.7M1476.9,575.7V576.9M1480.5,578.3L1482,578.1M1481.3,577.6V578.3M1498.3,577.8L1499.8,578M1499,577.3V578.9M1504.2,576.8L1505.6,576M1504.9,575.3V577.6M1510,575.6L1511.5,575M1510.7,574.4V575.6M1515.8,574.2L1517.2,574.7M1516.5,573.8V574.9M1517.2,574.7L1518.7,575.1M1518,574.2V575.4M1546.4,581L1547.9,580.4M1547.1,580.2V581.2M1550.8,580.8L1552.3,581.2M1551.6,579.7V582.2M1552.3,581.2L1553.8,580.9M1553.1,579.9V581.7M1558.2,582.3L1559.7,583.3M1559,581.7V584.4M1561.2,583.9L1562.8,583.4M1562,583.3V584.1M1562.8,583.4L1564.3,581.5M1563.5,581.3V584.2M1564.3,581.5L1565.8,580.6M1565.1,580.1V582.1M1565.8,580.6L1567.4,580.8M1566.6,580.2V582M1567.4,580.8L1569,579.1M1568.2,578.4V581M1570.5,577.8L1572,578.5M1571.2,577.3V579.3M1573.5,578.1L1575,578M1574.2,577.9V578.2M1585.5,579.1L1587,579M1586.2,578.1V580.2M1590,577.8L1591.5,578.5M1590.8,573.8V578.7M1594.4,578.3L1595.9,577.4M1595.2,576.7V581.5M1597.3,577L1598.8,575.6M1598.1,574.8V577.1M1601.7,576.2L1603.2,573.9M1602.5,573.8V576.3M1607.5,575L1609,574.8M1608.3,573.6V576.2M1609,574.8L1610.5,575.1M1609.7,574.7V575.3M1610.5,575.1L1611.9,575M1611.2,574.3V579.7M1614.8,573.2L1616.3,573.2M1615.6,573V573.3M1616.3,573.2L1617.9,573.8M1617.1,572.6V574.9M1621,575.6L1622.5,575M1621.8,574.9V576.6M1631.9,573.7L1633.4,573.7M1632.7,572.4V574M1653.6,572.1L1655,572.1M1654.3,570.9V572.8M1655,572.1L1656.5,572.3M1655.8,570V573.1M1659.4,572.2L1660.9,571.7M1660.1,570.7V572.6M1681.7,567.1L1683.2,567.4M1682.5,566V568.6M1689.4,568.7L1691,568.2M1690.2,567.8V569.3M1703.4,569L1705,569M1704.2,564.3V570M1705,569L1706.5,567.9M1705.8,567.3V569.4M1709.6,566.3L1711.1,565.9M1710.3,565.4V566.9M1715.5,566.6L1717,565.4M1716.2,564.2V567M1720,566.1L1721.4,564.3M1720.7,563.2V566.8M1724.4,563.8L1726,564.1M1725.2,563.1V565.3M1729.1,564.2L1730.6,564.4M1729.8,563.2V564.9M1732.2,563.5L1733.7,564.2M1733,562.7V564.2M1739.9,566L1741.3,566M1740.6,565V567M1741.3,566L1742.8,567.2M1742,565.1V571.8M1742.8,567.2L1744.2,567.6M1743.5,566.1V568.5M1753,568.5L1754.4,568M1753.7,566.8V569.5M1767.9,567.3L1769.4,569.1M1768.6,566.6V569.5M1769.4,569.1L1771,568.2M1770.2,567.6V569.8M1778.8,568.6L1780.3,569.7M1779.5,567.7V570.9M1780.3,569.7L1781.9,569.1M1781.1,568.7V569.9M1781.9,569.1L1783.4,569M1782.7,567.8V569.8M1795.4,572.8L1796.9,572.1M1796.1,570.8V573.4M1796.9,572.1L1798.3,573.2M1797.6,571.8V574.1M1810.1,569.2L1811.5,569.8M1810.8,568.3V570.7M1814.5,568L1816.1,569M1815.3,567.4V569.3M1820.8,565.5L1822.3,566.1M1821.5,564.3V566.7M1822.3,566.1L1823.9,566.8M1823.1,566V567M1823.9,566.8L1825.4,565.5M1824.6,564.3V567.5M1827,565.8L1828.5,565.9M1827.7,562.8V569.3M1831.6,566.6L1833.2,567.3M1832.4,566.2V567.3M1834.7,567.2L1836.3,568.4M1835.5,566.3V568.4M1842.5,574.7L1844,574.8M1843.2,571.7V575.9M1864,582.3L1865.5,581.8M1864.8,581.4V583.5M1872.9,579.8L1874.4,580.1M1873.7,579.8V581M1885.2,579.8L1886.8,581.4M1886,579.1V581.9M1891.4,580.7L1893,581.1M1892.2,580.4V581.7" stroke="#f2e66a" stroke-width="2.1" fill="none" stroke-linecap="butt"/>
<path d="M16.2,427.8L17.8,427.7M17,427.5V429M25.7,429.6L27.2,430.2M26.4,428.7V430.5M28.8,431.1L30.3,430.3M29.6,429.6V434M37.8,431.5L39.2,432M38.5,431.4V432.8M42.1,432L43.5,433.5M42.8,431.4V433.8M44.9,433.6L46.4,434.2M45.6,432.3V434.9M46.4,434.2L47.9,433.2M47.1,432.4V434.6M47.9,433.2L49.4,433.9M48.6,432.8V435.6M73.5,432.8L75,434.4M74.2,431.9V435.4M94.3,433L95.8,433.1M95,432.5V433.9M107.7,429.2L109.2,430.6M108.5,428V431.6M109.2,430.6L110.7,430M110,429.4V431.6M116.7,429.7L118.2,428.7M117.5,428.3V429.8M118.2,428.7L119.7,429.1M119,428.5V430.1M154.1,427.8L155.6,427.3M154.8,426.5V428.7M155.6,427.3L157.1,427.9M156.3,427.1V432M269.3,527.6L270.8,528.7M270,527.5V529.3M270.8,528.7L272.3,527.8M271.5,526.7V533.7M276.7,526.6L278.2,527.2M277.5,526.4V527.4M302.2,550.8L303.7,550.5M302.9,549.6V551.9M303.7,550.5L305.2,550.6M304.4,550V554.1M306.7,549.5L308.2,547.8M307.4,546.5V550.4M321.6,531.7L323.1,532.3M322.4,530.9V533.3M356,557.2L357.5,557.7M356.8,556.2V558.3M360.5,556.6L362,557.6M361.2,556.3V563M362,557.6L363.5,557.1M362.8,556.6V558.3M371,557.8L372.5,558.5M371.8,556.8V559.3M381.3,560.5L382.8,559.4M382.1,559V561.8M384.2,560.6L385.7,562.5M384.9,559.5V563.2M408.4,551.4L409.8,550.8M409.1,550.8V552.3M478,557.7L479.4,557.1M478.7,556V558.5M482.3,556.8L483.8,556.9M483,555.7V557M485.2,555.7L486.7,556.6M485.9,554.6V557.3M501.4,556.3L502.9,556.7M502.2,555V557.3M502.9,556.7L504.3,556.8M503.6,555.8V557.5M504.3,556.8L505.8,554.8M505.1,553.5V557.3M505.8,554.8L507.2,555.4M506.5,553.7V556.2M507.2,555.4L508.7,555.8M507.9,554.6V556.8M531.4,564.6L532.9,563.2M532.1,563V565.1M538.8,561.9L540.3,560.6M539.6,559.7V562M541.8,561.2L543.3,560.1M542.6,556.2V562.1M565.5,565.1L567.1,565.3M566.3,564.1V566.3M567.1,565.3L568.6,565.4M567.8,564.6V566.6M579.3,567.4L580.8,567.4M580,566.2V567.7M582.3,566.3L583.8,566.6M583.1,565.7V567.9M589.9,567.2L591.5,567.5M590.7,566.5V568M591.5,567.5L593,569.4M592.2,566.3V569.5M597.6,570.5L599.1,569M598.3,568.4V570.7M600.6,569.3L602.2,570.1M601.4,569.1V570.3M605.2,570.1L606.8,571.9M606,568.9V572.5M651,573L652.5,573.4M651.7,571.7V574.6M662.8,574.4L664.3,574.2M663.6,573V575.1M698.5,601.7L700,601.9M699.2,600.9V602.1M704.5,600.5L706,602.4M705.2,599.9V602.6M706,602.4L707.5,601.5M706.8,601.4V603.3M739.2,688.9L740.7,687.1M739.9,682.1V691.5M840.8,605.7L842.3,604.4M841.6,603.4V606.8M926.3,647.8L927.8,647.1M927,646.4V648.6M975,625.3L976.4,624.7M975.7,624.5V627.4M986.7,625.9L988.2,624.8M987.5,623.9V626.9M988.2,624.8L989.7,627.2M989,624.2V627.9M1017.6,623.7L1019.1,622.9M1018.3,622.5V624.4M1021.9,620.8L1023.4,622.1M1022.6,619.9V622.9M1024.8,621L1026.2,620.2M1025.5,619.8V621.2M1026.2,620.2L1027.6,620.2M1026.9,619V623M1047.6,626.2L1049.1,624.5M1048.3,624.3V630.9M1065.2,629.5L1066.7,630.3M1065.9,628.5V631M1069.5,630.2L1070.9,629.1M1070.2,628.3V630.8M1073.8,628.7L1075.2,628.8M1074.5,627.6V632.2M1101.1,626.5L1102.7,625.4M1101.9,624.3V626.6M1184.2,606L1185.7,605.2M1184.9,604.1V610.4M1231,597L1232.4,594.8M1231.7,593.9V597.3M1233.8,595.5L1235.2,594.5M1234.5,593.5V596.8M1239.5,592.7L1241,592.6M1240.3,592.2V593.7M1257.3,597.9L1258.8,597.2M1258,596.4V598.6M1258.8,597.2L1260.2,597.9M1259.5,596.4V598.1M1260.2,597.9L1261.7,595.9M1261,595.8V598.7M1261.7,595.9L1263.2,596.6M1262.5,595.8V597.8M1263.2,596.6L1264.7,594.7M1264,593.9V597.6M1264.7,594.7L1266.2,594.4M1265.5,593.4V596M1270.7,596.3L1272.2,596.1M1271.4,594.9V596.5M1273.6,597.6L1275.1,596.5M1274.4,596V598.8M1293.5,591.7L1295,590.9M1294.3,590.8V593.5M1300.9,591.6L1302.4,591.7M1301.7,591.5V592M1368.5,600.7L1370.1,601.7M1369.3,599.5V602.5M1371.7,599.8L1373.3,600M1372.5,599.8V600.1M1383.4,590.7L1384.8,590.7M1384.1,589.7V590.7M1386.2,588.8L1387.7,589.1M1386.9,588.7V589.3M1398,589.8L1399.5,589.1M1398.7,588.1V590M1404.3,591.1L1405.8,589.9M1405.1,589.8V592.4M1438.6,587.6L1440,588.5M1439.3,587.3V589.3M1441.5,587.5L1442.9,587.1M1442.2,582.1V589.6M1442.9,587.1L1444.4,586M1443.7,585.3V587.3M1444.4,586L1445.8,585.5M1445.1,585.2V586.6M1447.3,584.9L1448.8,583.7M1448,583.2V585.3M1471.8,577.4L1473.2,577.6M1472.5,576.7V578.4M1499.8,578L1501.2,576M1500.5,575.6V578.3M1507.1,576.4L1508.5,576.3M1507.8,575.2V577.6M1511.5,575L1512.9,575.3M1512.2,573.9V576.6M1514.3,575.9L1515.8,574.2M1515.1,569.9V576.8M1520.1,574.2L1521.6,573.5M1520.9,573.4V574.4M1544.9,578.7L1546.4,581M1545.6,578.7V581.9M1547.9,580.4L1549.3,581.2M1548.6,579.3V582.1M1549.3,581.2L1550.8,580.8M1550.1,579.5V581.7M1555.3,582.7L1556.8,582M1556,581.1V583M1572,578.5L1573.5,578.1M1572.8,577.1V579.5M1578,578.2L1579.5,578.8M1578.8,577.4V579.8M1611.9,575L1613.3,573.4M1612.6,573.1V575.6M1613.3,573.4L1614.8,573.2M1614.1,572.2V576.2M1633.4,573.7L1635,573.3M1634.2,572.2V574.4M1660.9,571.7L1662.3,573.4M1661.6,571.6V573.9M1687.9,566.8L1689.4,568.7M1688.7,566.8V569.5M1721.4,564.3L1722.9,564M1722.2,563.3V564.8M1722.9,564L1724.4,563.8M1723.7,563.6V565.1M1726,564.1L1727.5,564.3M1726.7,563.9V564.8M1730.6,564.4L1732.2,563.5M1731.4,563.2V565.6M1744.2,567.6L1745.7,567.4M1744.9,566.2V568M1747.1,566.9L1748.5,567.6M1747.8,565.7V567.6M1748.5,567.6L1750,569.3M1749.3,567V569.3M1783.4,569L1785,569.3M1784.2,568.7V569.7M1786.5,570.2L1788,570.6M1787.2,570.2V570.9M1789.4,569.8L1790.9,570.3M1790.2,568.8V571.4M1793.9,571.7L1795.4,572.8M1794.6,571V573.2M1802.8,571.2L1804.2,570.9M1803.5,570.3V572.2M1808.6,570L1810.1,569.2M1809.3,569.2V570.5M1813,570L1814.5,568M1813.8,567.2V571.1M1853.3,579L1854.9,578.8M1854.1,577.9V579M1862.6,582.5L1864,582.3M1863.3,577.3V583.6M1871.5,581.1L1872.9,579.8M1872.2,579.1V582.4M1879,580.5L1880.6,580.8M1879.8,580.1V581.8M1883.7,580L1885.2,579.8M1884.4,579.5V580.6" stroke="#1f7fe8" stroke-width="2.1" fill="none" stroke-linecap="butt"/>
<path d="M163,458.9L164.5,457M163.8,456.4V460M164.5,457L166,456.9M165.2,455.9V458.1M166,456.9L167.5,455.4M166.8,455.1V457.2M167.5,455.4L169,455.1M168.2,453.9V456.6M169,455.1L170.5,453.4M169.8,453.4V455.1M170.5,453.4L172,452.3M171.2,452.1V454.1M185.5,494.2L187,495.8M186.2,493.4V497M191.5,502.9L193,506M192.2,502.1V506.5M200.4,519.4L201.9,524.8M201.2,518.7V525M204.9,534.8L206.4,540.4M205.7,534.3V544M213.9,586.7L215.4,589.9M214.7,586.1V590M218.4,597.4L219.9,586.7M219.2,584.3V597.8M219.9,586.7L221.4,576.6M220.7,575.7V587.9M230.4,593.5L231.9,589M231.2,588.1V594.3M233.4,583.9L234.9,579.5M234.2,578.3V584.7M234.9,579.5L236.4,576.3M235.7,575.3V579.8M236.4,576.3L237.9,562.8M237.1,562.2V577M237.9,562.8L239.3,549M238.6,547.9V563.8M239.3,549L240.8,543.8M240.1,543.2V549.5M240.8,543.8L242.3,538.2M241.6,537.8V547.5M242.3,538.2L243.8,533.1M243.1,532.7V539.1M243.8,533.1L245.3,528.1M244.6,527V534.3M251.3,539L252.8,538.5M252.1,538.4V539.6M252.8,538.5L254.3,536.7M253.6,535.9V539.4M254.3,536.7L255.8,536.1M255.1,535V537.9M257.3,536.3L258.8,533.6M258.1,532.9V537.3M258.8,533.6L260.3,534.3M259.6,532.7V535.2M260.3,534.3L261.8,533.3M261.1,532.6V535.4M261.8,533.3L263.3,532.5M262.6,532V533.5M263.3,532.5L264.8,530.1M264.1,529.2V532.5M264.8,530.1L266.3,530.6M265.6,530V531.4M266.3,530.6L267.8,528.4M267.1,528.1V531.5M267.8,528.4L269.3,527.6M268.6,527.2V529.3M308.2,547.8L309.7,545.8M308.9,545.6V548.9M309.7,545.8L311.2,544.1M310.4,543.4V546.3M311.2,544.1L312.7,540.8M311.9,539.5V545.3M312.7,540.8L314.1,538.6M313.4,537.6V541.6M314.1,538.6L315.6,537.3M314.9,536.9V539.1M315.6,537.3L317.1,534.4M316.4,533.5V542.1M317.1,534.4L318.6,533.8M317.9,533V535.5M336.6,544.4L338.1,546.9M337.4,544.2V547.4M390,564.7L391.4,562M390.7,561.9V565.1M391.4,562L392.8,560.4M392.1,559.1V562.1M392.8,560.4L394.2,559.7M393.5,558.6V560.8M394.2,559.7L395.7,559.1M394.9,557.8V560.9M395.7,559.1L397.1,556.9M396.4,556V563.4M397.1,556.9L398.5,556.3M397.8,556V557M398.5,556.3L399.9,555.6M399.2,554.5V557.6M418.8,565.9L420.3,562.8M419.5,561.9V566.1M420.3,562.8L421.8,561.7M421,561.1V563.8M423.2,557.7L424.7,555.3M424,554.6V558M424.7,555.3L426.2,555M425.5,554.2V555.8M426.2,555L427.7,551.1M427,550.5V556.1M432,553.7L433.5,554.8M432.8,552.3V555.7M443.6,562.1L445.1,562.3M444.4,561.2V562.6M445.1,562.3L446.7,560.5M445.9,559.3V563.6M446.7,560.5L448.2,559.5M447.4,559V561.3M448.2,559.5L449.7,558.1M449,556.9V560.1M449.7,558.1L451.3,555.6M450.5,552.4V558.9M451.3,555.6L452.8,556.2M452,554.9V556.3M452.8,556.2L454.3,554.8M453.6,554.6V556.4M454.3,554.8L455.9,553M455.1,552.1V555.8M547.6,561.6L549,562M548.3,561.3V563.1M644,576L645.3,573.5M644.7,572.3V576.5M645.3,573.5L646.7,574.3M646,572.3V574.9M646.7,574.3L648,573.5M647.3,572.3V575.5M670.3,578.6L671.8,581.1M671,577.9V581.9M685.6,582.8L687,587.1M686.3,582.7V587.6M725.9,609.7L727.3,609.3M726.6,608.2V610.7M736.2,713.3L737.7,701.5M737,697.5V718.4M737.7,701.5L739.2,688.9M738.5,685.8V703M743.6,686.9L745.1,665M744.4,663.6V690.8M745.1,665L746.6,662.1M745.8,660.8V668.1M746.6,662.1L748,659.8M747.3,657.9V665.4M748,659.8L749.5,656.2M748.8,655.4V664.4M749.5,656.2L751,647.6M750.2,646.5V657.4M751,647.6L752.4,639.8M751.7,637.7V648.7M753.9,646.5L755.3,653M754.6,644.5V658M756.8,659.3L758.3,655.9M757.5,655.4V660.2M758.3,655.9L759.8,651.2M759,647.7V658M759.8,651.2L761.2,645.7M760.5,644.6V655.4M767.2,656.5L768.7,655.1M767.9,650V656.5M768.7,655.1L770.1,651.3M769.4,649.3V656.8M770.1,651.3L771.6,651.5M770.9,646.8V654.4M771.6,651.5L773,648.7M772.3,644.8V656.6M773,648.7L774.5,647.6M773.8,646.2V652.9M781.9,665.6L783.4,670.1M782.6,660.8V671.9M784.9,671.4L786.3,672.4M785.6,667.3V677.5M790.7,676L792.2,685M791.5,674.5V687.4M802.5,655.8L804,650.4M803.2,650.1V657M804,650.4L805.4,644.6M804.7,643.4V651.6M805.4,644.6L806.9,639.8M806.2,635.1V645.3M808.4,624.7L809.9,611.9M809.1,610.6V625.2M809.9,611.9L811.4,609M810.6,608V612.3M811.4,609L812.9,609.6M812.1,607.8V610.7M812.9,609.6L814.3,606.5M813.6,605.3V610.6M814.3,606.5L815.8,605.8M815.1,604.9V607.1M815.8,605.8L817.3,603.5M816.6,602.4V606.3M817.3,603.5L818.8,602.4M818,601.3V604.1M818.8,602.4L820.2,600.3M819.5,598.8V602.6M820.2,600.3L821.7,599.5M821,599V601.1M821.7,599.5L823.2,598.1M822.5,597.7V599.8M823.2,598.1L824.7,596.5M823.9,595.6V598.4M824.7,596.5L826.1,595.1M825.4,594V596.7M826.1,595.1L827.6,592.3M826.9,592.1V596.1M857,609.4L858.5,609.1M857.8,609V609.9M876.2,651.8L877.7,654.3M876.9,651.6V654.3M888,680.3L889.5,675.2M888.7,675V680.9M889.5,675.2L890.9,672M890.2,671.4V675.9M890.9,672L892.4,666.4M891.7,665.6V674.1M899.8,682.8L901.3,682.7M900.5,682.1V684.1M901.3,682.7L902.7,681.4M902,680.7V683.9M902.7,681.4L904.2,681.4M903.5,681V682.9M904.2,681.4L905.6,680M904.9,679.5V681.6M905.6,680L907.1,680.3M906.4,679.2V680.6M907.1,680.3L908.6,674.9M907.8,674.4V680.6M908.6,674.9L910.1,671M909.3,665.9V676.1M910.1,671L911.5,668.5M910.8,667.9V672M911.5,668.5L913,664.2M912.3,663.6V669.7M913,664.2L914.5,659.6M913.8,659.4V665.2M914.5,659.6L916,655.5M915.3,652.6V659.7M916,655.5L917.5,655M916.7,654.3V655.8M917.5,655L918.9,652.5M918.2,651.3V655.6M918.9,652.5L920.4,652.5M919.7,652.2V653.2M920.4,652.5L921.9,650.1M921.1,649.4V653.1M921.9,650.1L923.4,650.1M922.6,649.4V650.3M923.4,650.1L924.8,647.2M924.1,646.8V651.2M924.8,647.2L926.3,647.8M925.6,646.4V648.1M936.6,643.2L938.1,638.3M937.4,637.3V643.9M938.1,638.3L939.6,633.1M938.9,632.2V638.4M954.3,646.4L955.8,644M955,643.7V647.6M955.8,644L957.3,642M956.5,636.3V645.6M957.3,642L958.7,637.2M958,636.7V643M958.7,637.2L960.2,634.6M959.5,634.6V637.7M960.2,634.6L961.7,632.2M961,631.3V635.4M961.7,632.2L963.2,632.3M962.4,631.5V633.1M963.2,632.3L964.7,631.4M963.9,629.9V632.6M964.7,631.4L966.1,628.3M965.4,627.4V632.3M966.1,628.3L967.6,628.8M966.9,627.2V629.9M967.6,628.8L969.1,626.8M968.3,626.1V629.1M969.1,626.8L970.5,626M969.8,624.7V627.2M970.5,626L972,624.9M971.3,624.2V626.7M972,624.9L973.5,624.8M972.8,622.6V627.7M991.2,627.9L992.7,629.4M991.9,627.2V629.9M1003.1,640.9L1004.6,637.3M1003.8,637.1V641.1M1004.6,637.3L1006,636.8M1005.3,636.7V637.6M1006,636.8L1007.5,634.7M1006.7,633.4V637.3M1007.5,634.7L1008.9,633.4M1008.2,633.3V635.1M1008.9,633.4L1010.4,630.4M1009.7,629.4V633.9M1010.4,630.4L1011.8,628.8M1011.1,628.5V630.8M1011.8,628.8L1013.3,627.7M1012.6,627.6V634.6M1013.3,627.7L1014.7,624.6M1014,623.8V628M1054.9,625.1L1056.4,626.8M1055.6,624.8V627.5M1082.4,632L1083.8,634.9M1083.1,631.4V635.6M1085.2,634.4L1086.6,634.8M1085.9,633.7V635.6M1086.6,634.8L1088.1,634.2M1087.3,633V638.8M1088.1,634.2L1089.5,632.6M1088.8,632.1V634.6M1089.5,632.6L1090.9,632.1M1090.2,631.4V633.6M1090.9,632.1L1092.3,630.7M1091.6,630.3V632.9M1092.3,630.7L1093.8,630.9M1093.1,630.2V631.7M1093.8,630.9L1095.2,629.8M1094.5,629V632.2M1095.2,629.8L1096.6,627.6M1095.9,626.9V630.2M1096.6,627.6L1098.1,628.2M1097.4,627V628.2M1098.1,628.2L1099.5,626.1M1098.8,625.1V628.3M1109,624.1L1110.6,622.3M1109.8,622.1V625.1M1110.6,622.3L1112.2,622M1111.4,621.7V623.2M1112.2,622L1113.8,621.9M1113,621.5V622.9M1113.8,621.9L1115.4,619.9M1114.6,619V622M1115.4,619.9L1117,618.8M1116.2,618.7V620.8M1117,618.8L1118.6,618M1117.8,615.8V619.3M1118.6,618L1120,614.8M1119.3,614.7V618.2M1120,614.8L1121.4,612.7M1120.7,612.4V615.2M1121.4,612.7L1122.9,609.8M1122.2,608.5V612.8M1122.9,609.8L1124.3,606.5M1123.6,605.7V613.6M1124.3,606.5L1125.7,603.8M1125,602.6V606.8M1128.7,604.4L1130.2,606.2M1129.4,603.4V606.6M1151.9,617.1L1153.4,615.5M1152.6,615.3V617.1M1153.4,615.5L1154.9,614.7M1154.1,614.1V616.7M1154.9,614.7L1156.4,612.9M1155.6,612.7V615.8M1156.4,612.9L1157.8,611.8M1157.1,610.7V613M1157.8,611.8L1159.3,611.1M1158.6,610.5V612.6M1159.3,611.1L1160.8,609.6M1160.1,608.7V611.3M1160.8,609.6L1162.3,608.2M1161.6,608.1V610M1162.3,608.2L1163.8,605.7M1163.1,605.2V609.2M1194.8,606.5L1196.3,605.4M1195.5,604.6V611.4M1196.3,605.4L1197.8,603.6M1197,602.4V605.4M1197.8,603.6L1199.3,602.9M1198.5,601.9V604.2M1199.3,602.9L1200.8,603.6M1200,602.5V604.4M1200.8,603.6L1202.2,602.2M1201.5,602V603.7M1202.2,602.2L1203.7,600.2M1203,599.8V606.2M1205.2,600.2L1206.7,599.2M1206,598.9V600.5M1218.6,604.8L1220.2,605M1219.4,604V605.4M1220.2,605L1221.8,603.3M1221,603.1V605.9M1223.3,601.2L1224.9,600.7M1224.1,600.1V601.3M1224.9,600.7L1226.5,598M1225.7,597.7V600.7M1226.5,598L1228.1,596.9M1227.3,595.9V598.2M1278.1,597.8L1279.7,598.1M1278.9,597.7V598.5M1279.7,598.1L1281.3,595.6M1280.5,594.9V599M1281.3,595.6L1282.8,595.1M1282.1,594.3V595.9M1284.4,592.5L1286,593.4M1285.2,588.2V593.6M1286,593.4L1287.6,591.5M1286.8,590.5V596.6M1306.7,594.2L1308.1,592.8M1307.4,592.6V595.3M1308.1,592.8L1309.5,592.2M1308.8,590.9V593.7M1309.5,592.2L1311,592.5M1310.2,591.3V593.1M1311,592.5L1312.4,590.4M1311.7,589.6V592.7M1312.4,590.4L1313.8,591.1M1313.1,589.7V591.3M1315.3,590.6L1316.8,592.7M1316,590.3V592.8M1325.7,599.2L1327.1,596.7M1326.4,596.1V600M1327.1,596.7L1328.6,594.3M1327.9,593.1V597.7M1330,592.4L1331.5,591.1M1330.7,590.1V593.4M1331.5,591.1L1332.9,591M1332.2,589.9V592.4M1342.4,591.8L1344,588M1343.2,587.1V593M1344,588L1345.5,584.6M1344.8,583.7V588.5M1345.5,584.6L1347.1,583.8M1346.3,582.5V587.4M1355.9,587L1357.5,591.8M1356.7,586.3V592.7M1373.3,600L1374.7,597.6M1374,596.4V600.7M1374.7,597.6L1376.2,596.6M1375.5,596.6V597.9M1376.2,596.6L1377.6,593.5M1376.9,592.4V596.8M1377.6,593.5L1379.1,592.8M1378.3,592.6V594.2M1379.1,592.8L1380.5,589.9M1379.8,589.2V593.4M1413.8,594.6L1415.4,595.8M1414.6,594.3V596.3M1418.6,597.1L1420,594.4M1419.3,594.1V598.3M1420,594.4L1421.4,593.5M1420.7,592.4V594.8M1421.4,593.5L1422.9,592.3M1422.2,591.1V594.7M1422.9,592.3L1424.3,589.9M1423.6,589.1V593.5M1424.3,589.9L1425.7,589.4M1425,588.8V590.2M1458.6,584.9L1460.1,584.7M1459.3,584V586.1M1460.1,584.7L1461.5,584.4M1460.8,584.2V585.9M1461.5,584.4L1463,582.3M1462.3,581.9V585M1463,582.3L1464.4,582.8M1463.7,582.3V584.1M1464.4,582.8L1465.9,581.8M1465.2,580.9V584.6M1465.9,581.8L1467.4,579.5M1466.6,578.9V582.4M1467.4,579.5L1468.8,579.6M1468.1,579V580.1M1468.8,579.6L1470.3,577.8M1469.6,577.7V580.5M1491.3,582.4L1492.7,581.1M1492,580.5V583.1M1492.7,581.1L1494.1,579.7M1493.4,578.9V581.8M1494.1,579.7L1495.5,578.4M1494.8,578.1V580.4M1495.5,578.4L1496.9,577.4M1496.2,577.2V578.6M1496.9,577.4L1498.3,577.8M1497.6,576.7V582.9M1521.6,573.5L1523.1,573.8M1522.4,572.3V574M1523.1,573.8L1524.7,572.5M1523.9,572V574.6M1524.7,572.5L1526.2,572M1525.5,571V573.3M1526.2,572L1527.8,569.5M1527,569V572.7M1527.8,569.5L1529.4,568.9M1528.6,568V570.1M1529.4,568.9L1530.9,567.9M1530.1,567.3V569.3M1535.1,571.6L1536.5,572.7M1535.8,570.9V572.8M1542.1,576.6L1543.5,577.9M1542.8,576.2V578.6M1543.5,577.9L1544.9,578.7M1544.2,577.4V579.4M1645.1,577.3L1646.5,575.9M1645.8,574.8V580.8M1646.5,575.9L1647.9,574.9M1647.2,574.3V576.1M1647.9,574.9L1649.3,573.5M1648.6,572.3V575.6M1649.3,573.5L1650.7,571.9M1650,570.9V574.2M1650.7,571.9L1652.1,570.7M1651.4,570.4V573.1" stroke="#ff1010" stroke-width="2.6" fill="none" stroke-linecap="butt"/>
<path d="M172,452.3L173.5,454.1M172.8,452.1V454.6M173.5,454.1L175,457.3M174.2,453.6V457.4M175,457.3L176.5,457.9M175.8,456.6V459M176.5,457.9L178,460.9M177.2,457.5V461.8M178,460.9L179.5,462.3M178.8,460.3V462.8M179.5,462.3L181,474.8M180.2,461.8V475.3M181,474.8L182.5,488.9M181.8,473.7V489.4M182.5,488.9L184,489.9M183.2,487.2V490.2M184,489.9L185.5,494.2M184.8,489.9V494.3M187,495.8L188.5,496.8M187.8,495.7V497.7M188.5,496.8L190,500.4M189.2,496.7V501.2M190,500.4L191.5,502.9M190.7,499.6V503.3M193,506L194.4,507.7M193.7,505.9V508M194.4,507.7L195.9,511.7M195.2,506.6V512.9M195.9,511.7L197.4,513.7M196.7,511.1V514.5M197.4,513.7L198.9,515.1M198.2,513.7V515.6M198.9,515.1L200.4,519.4M199.7,513.9V519.9M201.9,524.8L203.4,528.7M202.7,523.8V529.5M203.4,528.7L204.9,534.8M204.2,528.5V534.9M206.4,540.4L207.9,558.4M207.2,540.1V563.2M207.9,558.4L209.4,574.6M208.7,557.8V574.6M209.4,574.6L210.9,579.7M210.2,574.1V580.2M210.9,579.7L212.4,581.9M211.7,578.7V582.6M212.4,581.9L213.9,586.7M213.2,579.2V587.3M215.4,589.9L216.9,592.9M216.2,589.7V593M216.9,592.9L218.4,597.4M217.7,591.6V597.7M221.4,576.6L222.9,579.5M222.2,576V579.7M222.9,579.5L224.4,581.7M223.7,578.8V586.7M224.4,581.7L225.9,585M225.2,581V586.3M225.9,585L227.4,587.9M226.7,584.8V588.6M227.4,587.9L228.9,590.3M228.2,587.2V591.1M228.9,590.3L230.4,593.5M229.7,589.6V594.5M231.9,589L233.4,583.9M232.7,582.8V589.2M245.3,528.1L246.8,529.6M246.1,527.6V530.3M246.8,529.6L248.3,533.5M247.6,528.8V534.4M248.3,533.5L249.8,537.7M249.1,533.5V537.7M249.8,537.7L251.3,539M250.6,537.4V543.8M255.8,536.1L257.3,536.3M256.6,535.1V537M281.2,528.4L282.7,529.8M281.9,527.9V531.1M282.7,529.8L284.2,534.1M283.4,529V534.9M284.2,534.1L285.7,536.2M284.9,533.9V537.3M285.7,536.2L287.2,537.8M286.4,536.1V537.8M287.2,537.8L288.7,541.6M287.9,533.7V542.9M288.7,541.6L290.2,543.4M289.4,541.2V544.7M290.2,543.4L291.7,546.6M290.9,542.1V547.2M291.7,546.6L293.2,548.3M292.4,545.3V549.4M293.2,548.3L294.7,552.6M293.9,547.2V553.6M294.7,552.6L296.2,555.2M295.4,551.4V555.9M318.6,533.8L320.1,529.9M319.4,529.4V534.9M329.1,533.9L330.6,535.6M329.9,532.8V536.4M330.6,535.6L332.1,539.1M331.4,529.6V539.9M332.1,539.1L333.6,539.8M332.9,538V539.8M333.6,539.8L335.1,543.6M334.4,539.1V543.8M335.1,543.6L336.6,544.4M335.9,542.7V544.8M338.1,546.9L339.6,548.9M338.9,546.1V549M339.6,548.9L341.1,551.9M340.4,545.4V552M409.8,550.8L411.3,554.7M410.6,550.4V555.7M411.3,554.7L412.8,557.2M412.1,554.1V558.4M412.8,557.2L414.3,557.6M413.6,557.1V557.7M414.3,557.6L415.8,561.6M415.1,557.4V562.5M415.8,561.6L417.3,564M416.6,560.3V565.3M417.3,564L418.8,565.9M418.1,563V566.8M421.8,561.7L423.2,557.7M422.5,557.6V562.5M427.7,551.1L429.1,553.6M428.4,550.5V554.6M429.1,553.6L430.6,554.3M429.9,552.6V554.7M430.6,554.3L432,553.7M431.3,553V554.9M433.5,554.8L434.9,557M434.2,549.8V557.6M434.9,557L436.4,556.9M435.6,556.8V557.5M436.4,556.9L437.8,559.1M437.1,556V559.7M437.8,559.1L439.3,560.1M438.5,558.6V564.8M439.3,560.1L440.7,560.1M440,559.4V560.2M440.7,560.1L442.2,561.6M441.4,559.1V562.2M442.2,561.6L443.6,562.1M442.9,560.7V563M455.9,553L457.4,551.9M456.6,551.4V553.9M457.4,551.9L458.9,552.7M458.1,551.2V552.8M458.9,552.7L460.4,554.3M459.6,551.9V554.8M460.4,554.3L461.9,554.8M461.1,553.7V555.9M461.9,554.8L463.4,555.2M462.6,553.5V556.3M463.4,555.2L464.8,556.7M464.1,555.2V557.6M464.8,556.7L466.3,557.1M465.6,555.6V557.4M466.3,557.1L467.8,557.6M467.1,556.1V558.1M467.8,557.6L469.3,559.7M468.6,557.1V562.1M513,554.4L514.5,554.7M513.8,553.8V555.5M514.5,554.7L516.1,555.8M515.3,553.6V560.1M516.1,555.8L517.6,558.7M516.9,554.7V558.7M517.6,558.7L519.2,559.2M518.4,558.3V560M519.2,559.2L520.7,560.5M520,558.4V560.7M520.7,560.5L522.3,562.2M521.5,560.2V562.3M522.3,562.2L523.8,564.2M523,561.3V568.2M523.8,564.2L525.4,566M524.6,563.4V566.6M525.4,566L526.9,567.5M526.1,565.6V568.1M544.8,559.1L546.2,561.2M545.5,558V561.8M546.2,561.2L547.6,561.6M546.9,560.6V562.6M549,562L550.5,565M549.8,561.7V565.6M550.5,565L551.9,565.9M551.2,563.7V568.3M551.9,565.9L553.3,567.3M552.6,565.2V568.6M553.3,567.3L554.7,567.1M554,564.7V568.3M665.8,574.2L667.3,575.9M666.5,573.7V577.1M667.3,575.9L668.8,577M668,575.4V577.1M668.8,577L670.3,578.6M669.5,575.9V579.4M671.8,581.1L673.2,582.9M672.5,580.2V583.8M673.2,582.9L674.7,583.4M674,582.8V583.7M674.7,583.4L676.2,585.8M675.5,582.9V587M676.2,585.8L677.7,585.7M677,585.2V586.8M687,587.1L688.4,588.8M687.7,585.8V588.9M688.4,588.8L689.8,591.5M689.1,588.5V592.6M689.8,591.5L691.3,593.3M690.5,590.3V593.9M691.3,593.3L692.7,595.4M692,593.1V595.4M692.7,595.4L694.1,598.9M693.4,595.4V599.4M694.1,598.9L695.5,601.1M694.8,598V601.5M717.4,600.8L718.7,602.7M718,599.6V603.5M718.7,602.7L720,604.8M719.4,601.7V605.3M720,604.8L721.5,605.7M720.7,604.3V607M721.5,605.7L722.9,607.6M722.2,605.1V608.7M722.9,607.6L724.4,607M723.7,606V608M724.4,607L725.9,609.7M725.1,606.7V609.9M727.3,609.3L728.8,611.9M728.1,608.6V612.2M728.8,611.9L730.3,624.9M729.5,611V625.2M730.3,624.9L731.8,638.1M731,623.7V638.4M752.4,639.8L753.9,646.5M753.1,638.1V648.5M755.3,653L756.8,659.3M756.1,650.9V660.1M761.2,645.7L762.7,641.6M762,636.8V648.5M762.7,641.6L764.2,646.7M763.5,639.7V649.2M764.2,646.7L765.7,651.3M765,646V652.8M765.7,651.3L767.2,656.5M766.5,647.6V659.1M774.5,647.6L776,650M775.2,646.7V650.2M776,650L777.4,651M776.7,647.3V656M777.4,651L778.9,654.5M778.2,647.3V656.9M778.9,654.5L780.4,658.8M779.6,652.9V659.8M780.4,658.8L781.9,665.6M781.1,655.9V669.1M783.4,670.1L784.9,671.4M784.1,670V675M786.3,672.4L787.8,674.7M787,672.3V675.2M787.8,674.7L789.2,675.5M788.5,674.3V679.6M789.2,675.5L790.7,676M790,671.5V676.1M792.2,685L793.7,691.9M793,683V693.9M793.7,691.9L795.2,702.9M794.4,686.9V704.3M795.2,702.9L796.6,711.8M795.9,701.4V715.2M806.9,639.8L808.4,624.7M807.6,624.4V640.1M827.6,592.3L829.1,594.4M828.3,592.1V594.5M829.1,594.4L830.5,595.8M829.8,593.7V596.1M830.5,595.8L832,597.5M831.3,595V597.9M832,597.5L833.5,599.8M832.8,596.6V600.8M833.5,599.8L835,604.5M834.2,599.6V605.4M835,604.5L836.4,606.2M835.7,603.7V606.8M848.2,602.6L849.7,602.7M848.9,597.8V603.7M849.7,602.7L851.1,603.9M850.4,601.4V604M851.1,603.9L852.6,606.8M851.9,603.7V607M852.6,606.8L854.1,606M853.4,605.3V606.8M854.1,606L855.6,607.8M854.8,605.3V608.2M855.6,607.8L857,609.4M856.3,606.9V609.7M858.5,609.1L860,614M859.2,608V614.3M860,614L861.5,615.4M860.7,613.3V615.4M861.5,615.4L862.9,620M862.2,615.1V621.2M862.9,620L864.4,621.8M863.7,619.1V623M864.4,621.8L865.9,625M865.1,620.6V626.2M865.9,625L867.4,628M866.6,624.9V628.2M867.4,628L868.8,629.8M868.1,627.2V630.4M868.8,629.8L870.3,633.7M869.6,629.3V633.7M870.3,633.7L871.8,637.1M871.1,632.6V637.7M871.8,637.1L873.3,642.2M872.5,636.8V642.9M873.3,642.2L874.7,647M874,641.5V647.5M874.7,647L876.2,651.8M875.5,645.8V652.4M877.7,654.3L879.2,658.6M878.4,654.2V659.2M879.2,658.6L880.6,662.4M879.9,658.5V662.9M880.6,662.4L882.1,665.1M881.4,662.2V668.5M882.1,665.1L883.6,670.4M882.8,663.9V671.4M883.6,670.4L885,672.6M884.3,669.3V673.2M885,672.6L886.5,677.3M885.8,671.4V678M886.5,677.3L888,680.3M887.3,676.4V681.5M892.4,666.4L893.9,670.2M893.1,665.1V670.5M893.9,670.2L895.4,673.4M894.6,669.4V674.2M895.4,673.4L896.8,676.9M896.1,673V677.3M896.8,676.9L898.3,681.1M897.6,676V682.4M898.3,681.1L899.8,682.8M899.1,679.8V683.8M939.6,633.1L941.1,635.6M940.3,631.9V636.8M941.1,635.6L942.5,636.5M941.8,634.8V637.8M942.5,636.5L944,637.3M943.3,636.1V638M944,637.3L945.5,640.4M944.8,636.5V641.4M945.5,640.4L947,641.3M946.2,638.1V641.3M947,641.3L948.4,641.5M947.7,640.2V641.6M948.4,641.5L949.9,643.1M949.2,640.6V643.6M949.9,643.1L951.4,644.9M950.6,642.4V645.1M951.4,644.9L952.8,645.4M952.1,644.2V646.1M952.8,645.4L954.3,646.4M953.6,644.5V647M989.7,627.2L991.2,627.9M990.4,627.1V628.1M992.7,629.4L994.2,630.2M993.4,629.2V631.1M994.2,630.2L995.7,632.4M994.9,628.9V632.5M995.7,632.4L997.1,634.5M996.4,631.1V637.9M997.1,634.5L998.6,635.6M997.9,633.3V636.7M998.6,635.6L1000.1,638M999.4,634.6V638.8M1000.1,638L1001.6,638.6M1000.9,637.7V638.9M1001.6,638.6L1003.1,640.9M1002.4,638.5V641.5M1014.7,624.6L1016.2,623M1015.5,623V624.9M1030.5,620.4L1031.9,621.1M1031.2,619.4V621.5M1031.9,621.1L1033.4,622.2M1032.6,619.9V623.3M1033.4,622.2L1034.8,622.2M1034.1,621.4V622.7M1034.8,622.2L1036.2,621.8M1035.5,620.6V623.5M1036.2,621.8L1037.7,623.1M1036.9,621.8V623.9M1037.7,623.1L1039.1,625.1M1038.4,617.4V625.4M1039.1,625.1L1040.5,623.6M1039.8,623.4V625.7M1040.5,623.6L1041.9,625.1M1041.2,623.6V626.4M1041.9,625.1L1043.4,625.4M1042.7,624.4V626.4M1043.4,625.4L1044.8,626.2M1044.1,624.9V631.4M1051.9,624.3L1053.4,624.5M1052.6,624.1V624.7M1053.4,624.5L1054.9,625.1M1054.1,620V625.8M1056.4,626.8L1057.8,627.2M1057.1,625.5V627.8M1057.8,627.2L1059.3,628.3M1058.6,626.4V629.4M1059.3,628.3L1060.8,628.1M1060.1,627.9V629.2M1060.8,628.1L1062.3,629.4M1061.6,628V630.4M1062.3,629.4L1063.8,630.5M1063.1,629V630.7M1078.1,629.4L1079.5,629.8M1078.8,628.5V630.7M1079.5,629.8L1080.9,631.2M1080.2,628.6V632.4M1080.9,631.2L1082.4,632M1081.7,630.4V632.7M1083.8,634.9L1085.2,634.4M1084.5,633.2V635M1125.7,603.8L1127.2,603.2M1126.4,597.7V604.4M1127.2,603.2L1128.7,604.4M1127.9,603.2V604.5M1130.2,606.2L1131.7,606.8M1130.9,606V607.4M1131.7,606.8L1133.1,608.3M1132.4,606.1V609.3M1133.1,608.3L1134.6,609M1133.9,608.3V609.8M1134.6,609L1136.1,608.9M1135.4,608.7V609.8M1136.1,608.9L1137.6,609.5M1136.9,607.8V612.9M1203.7,600.2L1205.2,600.2M1204.5,599.4V600.5M1206.7,599.2L1208.2,600M1207.4,594.4V600.8M1208.2,600L1209.7,600.6M1208.9,598.9V600.9M1209.7,600.6L1211.2,601.1M1210.4,599.4V602.3M1211.2,601.1L1212.7,601.9M1211.9,601.1V602.1M1212.7,601.9L1214.1,603.3M1213.4,600V604.4M1214.1,603.3L1215.6,603.9M1214.9,598.5V609.1M1215.6,603.9L1217.1,605.6M1216.4,603.8V606.4M1217.1,605.6L1218.6,604.8M1217.9,604.8V606.6M1221.8,603.3L1223.3,601.2M1222.6,600.6V603.3M1242.4,592L1243.9,592.7M1243.1,591.6V592.7M1243.9,592.7L1245.4,594M1244.6,592.3V594.7M1245.4,594L1246.9,594.6M1246.1,593.9V595.3M1246.9,594.6L1248.3,595.5M1247.6,591.4V597.3M1248.3,595.5L1249.8,595.7M1249.1,594.6V596.2M1249.8,595.7L1251.3,597.5M1250.6,595.1V598.5M1251.3,597.5L1252.8,599.5M1252.1,596.4V601.3M1252.8,599.5L1254.3,600.5M1253.6,599.2V601.7M1282.8,595.1L1284.4,592.5M1283.6,591.7V596.4M1313.8,591.1L1315.3,590.6M1314.5,589.4V592.3M1316.8,592.7L1318.3,593.6M1317.5,592.7V594.1M1318.3,593.6L1319.8,594.5M1319,592.7V594.9M1319.8,594.5L1321.2,595.4M1320.5,594.1V596.7M1321.2,595.4L1322.7,595.4M1322,595.2V595.9M1322.7,595.4L1324.2,598M1323.5,594.1V599.1M1324.2,598L1325.7,599.2M1325,597.8V600.4M1328.6,594.3L1330,592.4M1329.3,591.7V595.3M1354.3,585.5L1355.9,587M1355.1,584.8V587.2M1357.5,591.8L1359,594M1358.3,591.1V595M1359,594L1360.6,595.6M1359.8,593V596.3M1360.6,595.6L1362.2,600M1361.4,595.6V600.4M1362.2,600L1363.8,602.1M1363,598.7V602.9M1409,590.6L1410.6,592.8M1409.8,589.7V593.3M1410.6,592.8L1412.2,593.5M1411.4,587.4V594.8M1412.2,593.5L1413.8,594.6M1413,593.4V595.8M1415.4,595.8L1417,595.5M1416.2,594.3V596.2M1417,595.5L1418.6,597.1M1417.8,595V598.1M1482,578.1L1483.5,577.1M1482.8,576.4V579.1M1483.5,577.1L1485.1,577.8M1484.3,576V578.8M1485.1,577.8L1486.7,580.4M1485.9,577.5V580.8M1486.7,580.4L1488.2,580.2M1487.4,579V580.5M1488.2,580.2L1489.8,580.9M1489,580.1V582M1489.8,580.9L1491.3,582.4M1490.5,579.6V582.9M1530.9,567.9L1532.3,569.9M1531.6,567.2V570.7M1532.3,569.9L1533.7,570.6M1533,568.7V570.8M1533.7,570.6L1535.1,571.6M1534.4,565.9V572.5M1536.5,572.7L1537.9,574.7M1537.2,571.8V579.8M1537.9,574.7L1539.3,574.6M1538.6,574.3V575.3M1539.3,574.6L1540.7,575.3M1540,574.5V575.8M1540.7,575.3L1542.1,576.6M1541.4,575.3V577.7M1836.3,568.4L1837.8,569.8M1837.1,568V570M1837.8,569.8L1839.4,572.2M1838.6,565.5V573.3M1839.4,572.2L1840.9,574.8M1840.1,571.7V575.2M1854.9,578.8L1856.5,580M1855.7,577.8V583.5M1856.5,580L1858,582.2M1857.2,579.6V583.2M1858,582.2L1859.6,584.1M1858.8,582V585M1894.5,582.9L1896.1,582.9M1895.3,582.8V584M1896.1,582.9L1897.6,584.7M1896.8,582.8V585M1897.6,584.7L1899.2,585.7M1898.4,584.4V586M1899.2,585.7L1900.8,585.3M1900,585.1V585.9M1900.8,585.3L1902.3,586.2M1901.6,584.1V587.2M1902.3,586.2L1903.9,587.8M1903.1,585.4V588.8" stroke="#1f7fe8" stroke-width="2.6" fill="none" stroke-linecap="butt"/>
<path d="M13.8,837.3H15.2V836.8H16.6V839.8H17.9V840.5H19.3V837.7H20.7V841.1H22.1V845.5H23.4V850.1H24.8V853.3H26.2V858.1H27.6V855.5H29V854.9H30.4V850.9H31.7V846.8H33.1V843.7H34.5V844.6H35.9V846.7H37.3V852.1H38.7V859.6H40.3V857.3H41.8V859.7H43.4V858.9H45V863H46.6V861.7H48.1V861.8H49.7V862H51.1V857.7H52.5V860.5H53.9V859.2H55.2V852.1H56.6V853.4H58V852.8H59.5V853.6H61V854.8H62.5V855H64V855.4H65.5V851.7H67.1V857H68.6V857.4H70.1V856H71.6V857.8H73.1V854.9H74.6V856.3H76V863.7H77.3V874.9H78.7V887.1H80.1V878.3H81.5V869.7H82.8V861.7H84.2V854H85.6V848H87V846.3H88.4V846.5H89.8V846H91.1V844.2H92.5V844.3H93.9V842.4H95.5V845.4H97.1V847.9H98.7V852.5H100.2V855.3H101.8V856.2H103.4V859.7H105V859.7H106.4V858.6H107.8V859.1H109.1V857.7H110.5V860.9H111.9V858.3H113.2V853.3H114.6V847.5H116V843.5H117.4V848.5H118.8V848.8H120.2V847.8H121.5V853.9H122.9V853.9H124.3V856.5H125.7V852.1H127.1V846.5H128.4V842.9H129.8V838.5H131.2V836.5H132.6V839.9H134V843.4H135.4V846.4H137V840.5H138.5V838H140.1V837.7H141.7V835.6H143.3V829.7H144.8V829.1H146.4V825.6H148V823.8H149.6V817.8H151.2V816.9H152.7V816.5H154.3V815.4H155.9V813.5H157.5V807.6H158.9V814.9H160.2V815.4H161.6V821.1H163V812.8H164.3V808.4H165.7V799.3H167.1V818.4H168.5V833.1H169.8V851.5H171.2V864.9H172.6V884.7H174V896H175.5V887.8H177.1V882.1H178.6V874.2H180.1V868.1H181.7V855.6H183.2V848.4H184.7V840.8H186.3V833.9H187.8V828.1H189.2V831.8H190.6V834H191.9V839.5H193.3V846.2H194.7V849.6H196.1V851.7H197.5V860.7H198.9V866.4H200.3V876.5H201.7V882.8H203.3V886.9H204.9V890.8H206.5V897.4H208.1V896.7H209.7V900.4H211.3V904.3H212.9V898.2H214.5V890.4H216.2V885.3H217.8V876.3H219.4V865.9H221V857.3H222.6V853.8H224.1V849.4H225.7V840.1H227.3V837.2H228.9V829.1H230.4V826.5H232V820.6H233.4V814.8H234.8V816.9H236.2V814.4H237.5V811.8H238.9V811.2H240.3V812H241.7V782H243.1V807.4H244.5V807.9H245.9V806.2H247.2V811.2H248.6V808.5H250V813.8H251.4V809.7H253V812.1H254.5V809.6H256.1V811.2H257.7V810.1H259.3V810H260.8V809.6H262.4V809.7H264V808.4H265.6V812.6H267.2V817.5H268.7V823.6H270.3V824.1H271.9V826.6H273.5V831.9H274.9V829.4H276.3V826.7H277.6V829.4H279V826H280.4V826.8H281.8V821.3H283.3V826H284.9V828.1H286.4V835.6H287.9V836.7H289.5V841H291V841.3H292.5V846.8H294.1V849.9H295.6V855H297.1V847.5H298.7V846.8H300.2V838.2H301.7V834.3H303.3V829.2H304.8V823.6H306.3V817H307.9V812H309.4V812H311V815.9H312.5V817.5H314.1V818.3H315.7V822.2H317.3V826.5H318.8V828.4H320.4V833.7H322V832H323.6V830.9H325.2V832.3H326.7V829.4H328.3V830.5H329.9V825.2H331.5V822.5H332.9V830.2H334.2V833.8H335.6V838.1H337V839.4H338.6V839.5H340.1V833.1H341.7V834.2H343.3V831.7H344.9V828.6H346.4V826.5H348V823.3H349.5V822.7H351.1V822.5H352.6V822.7H354.2V823.6H355.7V820.3H357.3V821.1H358.8V819.7H360.4V818H361.9V820.5H363.3V822.5H364.6V833.3H366V834.5H367.4V841H368.9V843.8H370.4V841.7H371.9V840.5H373.3V841.1H374.8V843.2H376.3V841.1H377.8V839.1H379.3V842H380.8V837.6H382.2V836.3H383.7V839.5H385.2V839.4H386.7V839H388.4V836.5H390V837.9H391.4V836.3H392.8V837.7H394.2V842.6H395.7V843.1H397.1V844.7H398.5V843.6H399.9V845.9H401.3V845.4H402.7V847H404.1V851.4H405.5V851.8H406.9V854.3H409.1V860.4H410.6V861H412.1V862.9H413.6V862H415.1V860.5H416.6V860H418.1V855.6H419.6V857.2H421.8V864.4H423.4V868.5H425V868.1H426.5V872.6H428.1V873.4H430.2V893.6H431.6V889.4H433.1V883.8H434.5V879.3H436.1V883.9H437.6V884.6H439.2V888.9H440.8V893.6H442.2V889.9H443.7V890.4H445.1V887.2H446.7V891.3H448.2V896H449.8V898.8H451.4V903.5H452.8V908.6H454.2V907.3H455.6V914.9H457.1V912.6H458.5V915.4H459.9V921H461.2V925.5H462.5V925H463.9V933.1H465.2V934.4H466.8V930.1H468.3V930.4H469.7V915.9H471.2V905.5H472.6V892.7H474.2V888.6H475.8V883.8H477.4V891.9H478.9V899.3H480.3V900H481.7V901.1H483.1V901.3H484.6V899.7H486V902.6H487.4V903.1H488.9V899.1H490.4V899.5H491.9V902H493.5V902H495V901.6H496.5V902.3H498V901H499.4V904.3H500.8V907.4H502.2V910.4H503.7V912.2H505.1V911H506.5V913.7H507.9V917.7H509.3V921.8H510.7V921.4H512.1V926.5H513.5V926.1H514.9V929H516.4V930.8H517.9V926H519.4V928.4H521V925.5H522.5V921.4H524V922.6H525.5V921.8H526.9V918.1H528.3V918.1H529.8V917.3H531.2V915.9H532.6V917H534V912.6H535.6V918.1H537.1V917.3H538.7V922.5H540.3V921.9H541.9V922.1H543.5V920.9H545.1V919.3H546.7V912.8H548.1V906.8H549.5V893.6H550.9V888.2H552.5V885.1H554.1V888.7H555.7V885.4H557.3V890.5H558.9V890.6H560.5V891.5H562V898H563.6V899.9H565V901H566.4V900.7H567.9V901H569.3V904.7H570.7V907.3H572.1V908.1H573.5V905.9H574.9V900.1H576.3V900.3H577.9V902H579.5V906H581.1V909.4H582.7V911.7H584.2V908.3H585.7V910H587.1V909.9H588.6V910.7H590.1V909.9H591.6V909.4H593.1V909.5H594.5V911H596V913.2H597.5V909.5H598.9V914H600.3V912.7H601.8V914.4H603.2V914.7H604.6V914.3H606V915.5H608.1V907.2H609.6V910H611.1V908.7H612.6V908H614.2V908.9H615.7V911.3H617.2V908.7H618.7V908.9H620.1V910.7H621.5V908.3H623V901.6H624.4V900.2H625.8V896.8H627.2V897.5H628.7V900.1H630.2V895.6H631.6V898H633.1V897.4H634.6V899.1H636.1V898.4H637.6V899.3H639V895.9H640.5V900.9H642V899.9H643.6V897.7H645.1V898.8H646.7V904.8H648.3V906.2H649.8V903.4H651.3V905.9H652.8V903.6H654.4V902.4H655.9V899.1H657.4V901H658.9V899.8H661V908.5H663.2V894.3H664.8V897.4H666.4V895H667.9V893.7H669.5V894.8H670.9V901.3H672.3V902.7H673.8V904.9H675.2V911H676.6V914.8H678V914.8H679.4V915.7H680.8V919.2H682.2V920.5H683.6V927.3H685V928.8H686.4V929.1H687.8V936.6H689.3V943.3H690.7V949.8H692.1V957.2H693.5V970.8H694.9V983.8H696.3V975.6H697.8V969.1H699.2V961.7H700.8V957.7H702.4V954.9H703.9V950.1H705.5V945.9H706.9V946.5H708.3V948.6H709.8V945.1H711.2V946.8H712.6V945.5H714V949.4H715.4V954.1H716.8V965.9H718.2V979.3H719.8V978.4H721.4V976.3H723V979.6H724.6V978.8H726.2V970H727.7V963.5H729.2V956.4H730.6V956.9H732V955.7H733.5V960.7H735V926.7H736.4V889H737.8V911H739.3V930.7H740.3V1006.9H741.8V1018.1H743.2V1039.4H745.1V990.7H747.1V1020H748.4V1012.8H749.6V1006.9H750.9V997.7H752.9V1015.5H754.8V961.2H756.2V933.1H757.7V905.3H759.7V884.7H761.6V933H763.2V925.4H764.8V925.5H766.4V914.6H768.4V992.9H769.3V1016.4H770.8V1012.4H772.2V997H773.7V1002.2H775.1V1001.6H776.5V1010.1H778V1009.9H779.3V1005.4H780.6V1020.7H781.9V1013.9H783.4V1008H784.8V1009.1H786.2V1002.6H787.7V1005H789V990.3H790.3V1000.4H791.6V995.8H793V979.1H794.5V965.7H796V962.3H797.4V941.7H798.7V934.4H799.9V920.5H801.2V914.6H802.5V938.2H803.8V957.3H805.1V975.7H806.4V969.7H807.7V963.2H809V957.6H810.3V963H811.5V968.9H812.8V974H814.2V965.8H815.7V964.4H817.1V955.6H818.6V950H820.2V954.6H821.7V952.7H823.3V958.9H824.8V961H826.4V961.6H827.7V953.4H829V949.7H830.3V941.9H832.2V961.6H833.5V952.1H834.8V937H836.1V925.2H837.6V925.5H839.2V924.7H840.7V923.8H842.3V923H843.8V920.8H845.1V913.7H846.4V902.5H847.7V892.8H849V890H850.2V891.9H851.5V889.9H852.8V897.1H854.1V904.5H855.4V915.5H856.9V915.9H858.5V918.5H860V922H861.6V921.9H863.1V927.1H864.7V927.1H866.2V934H867.8V935.6H869.3V934.2H870.9V937H872.4V937.6H873.8V935H875.2V932.3H876.7V930.4H878V937.7H879.2V947.1H880.5V953.5H881.8V951H883.1V949.4H884.4V945.6H885.9V936.7H887.3V926.3H888.8V917H890.2V908.2H891.5V900.8H892.8V889.5H894.1V880.5H895.5V879H897V880.2H898.5V879.4H899.9V875.9H901.4V881.8H903V884.4H904.5V891.3H906.1V893.4H907.6V897.6H909.1V905.3H910.7V919.2H912.2V924.6H913.8V933.1H915.3V943.7H916.8V947.3H918.2V950.4H919.7V957.1H921.2V959.5H922.7V958.1H924.1V964.4H925.5V960.7H927V965.9H928.6V968.5H930.2V967.9H931.8V971.1H933.4V968.8H935V971.8H936.6V977H938.6V978.4H940V971.3H941.5V968.3H943V963.4H944.4V963.5H945.7V965.9H946.9V967.5H948.2V971.9H949.8V968.9H951.4V965H953V964H954.7V958.4H956.3V959.8H957.9V958.6H959.4V954.6H960.8V956.6H962.2V958H963.7V959H965.2V957.4H966.7V952.7H968.2V952.9H969.7V948.6H971.3V948.8H972.8V945.1H974.3V943.3H975.8V943H977.3V936.8H978.9V938.3H980.5V937.1H982.1V935.2H983.7V938.9H985.3V935.3H986.9V934.8H988.5V934.9H990V938.7H991.4V939.7H992.8V939H994.3V941.3H995.7V942H997.1V944.2H998.7V940.4H1000.3V940.6H1001.9V943.2H1003.5V938.5H1005.1V939.4H1006.7V937.8H1007.9V941.7H1009V947.3H1010.4V944.8H1011.9V941.3H1013.3V939.6H1014.8V934H1016.2V930.8H1017.8V936.8H1019.4V943.4H1021V946.6H1022.4V941.9H1023.8V942.6H1025.3V943.1H1026.7V937.1H1028.1V937.5H1029.5V939.5H1030.9V944.5H1032.4V949.3H1033.8V950.4H1035.2V953.1H1036.6V953.3H1038.1V955H1039.5V948.3H1040.9V948.6H1042.3V946.8H1043.8V946.9H1045.2V947.3H1046.6V944.8H1048.1V943.6H1049.5V940.3H1051.1V940.8H1052.7V940.8H1054.2V937.3H1055.8V934.4H1057.4V938.5H1059V934.7H1060.6V933.7H1062.2V928.2H1063.8V923.1H1065.2V922H1066.7V925.9H1068.1V924.7H1069.5V923.5H1070.9V920.1H1072.4V921.4H1073.8V921.9H1075.2V919.8H1076.7V921.7H1078.1V921.4H1079.7V922.1H1081.3V926.1H1082.8V930.7H1084.4V932.4H1086V934.3H1087.6V933.6H1089.2V929.6H1090.8V927.4H1092.4V926.4H1094V919.4H1095.6V915.7H1097.2V917.1H1098.7V909.4H1100.3V909.2H1101.9V908.9H1103.4V905.7H1104.9V901.6H1106.4V902.4H1107.8V904H1109.3V902.7H1110.8V898.5H1112.3V899.7H1113.8V898.9H1115.6V891.8H1117.4V886.2H1118.8V890.4H1120.2V894.1H1121.6V900.4H1122.9V900.1H1124.3V906.4H1125.7V904.7H1127.1V905.3H1128.6V901.6H1130V899.2H1131.5V898.6H1132.9V899H1134.4V898.3H1135.8V896.3H1137.3V898.6H1138.7V898.3H1140.2V899H1141.7V897.9H1143.1V894.3H1144.6V898H1146.1V898.8H1147.5V898.2H1149V896.7H1150.4V893.6H1151.9V897.6H1153.5V897.8H1155.1V901.5H1156.7V905H1158.3V899H1159.9V896H1161.5V899.1H1163V896.9H1164.6V890.4H1166.2V890.5H1167.6V893.4H1169V892.8H1170.5V893H1171.9V896.4H1173.3V891.7H1174.5V880.5H1175.7V866.2H1177.3V869.9H1178.9V867H1180.5V864.4H1182V867H1183.6V866.4H1185.2V863.2H1186.8V860.3H1188.4V850.6H1190V847.8H1191.8V830.4H1193.6V807.1H1195V816.5H1196.4V823.9H1197.8V830.8H1199.1V834.2H1200.5V841.6H1201.9V846.8H1203.3V843.6H1204.7V840.1H1206.2V831.5H1207.6V829.3H1209V820.4H1210.4V820.8H1211.9V821.2H1213.3V821.3H1214.8V821.3H1216.2V817.3H1217.7V820.8H1219.2V826.1H1220.6V829.6H1222.1V832.8H1223.6V827.5H1225.2V828.5H1226.7V825.5H1228.3V822.2H1229.8V818.3H1231.4V818.1H1232.9V812.1H1234.3V814.7H1235.7V811.7H1237.2V812.4H1238.6V810.3H1240V807.8H1241.8V824.8H1243.6V843.1H1245.3V827.4H1247.1V814.4H1248.6V815.6H1250.1V812.2H1251.6V815.3H1253.1V812.3H1254.9V820H1256.7V828.2H1258.3V827.4H1259.9V826.8H1261.4V824H1263V823.6H1264.6V826H1266.2V824.5H1267.7V823.1H1269.3V821.9H1270.9V819.2H1272.3V821.7H1273.8V820.8H1275.2V820.4H1276.6V820H1278.1V823.7H1279.5V826.4H1280.9V827.2H1282.3V828.4H1283.8V826.3H1285.2V828.6H1286.8V829.2H1288.4V826.5H1290V826H1291.6V824.9H1293.2V822H1294.8V822.6H1296.4V822.4H1298V827.9H1299.5V828.4H1301.1V830H1302.7V836.2H1304.3V838.7H1305.7V836.7H1307.1V834.6H1308.6V832.2H1310V834.3H1311.4V832.1H1313V834.1H1314.6V837H1316.2V834.5H1317.8V840.8H1319.4V843.1H1321V841.1H1322.6V837.4H1324.1V838.8H1325.7V832.3H1327.3V835.2H1328.9V838.8H1330.5V836H1332V839.1H1333.6V838.1H1335.2V844H1336.7V843.1H1338.1V839.9H1339.6V841.1H1341.1V836.7H1342.5V839.5H1344V838.7H1345.5V837.4H1347V832.7H1348.4V833.4H1349.9V834.6H1351.4V834.7H1352.8V832H1354.3V832.2H1355.9V831.6H1357.5V832.9H1359V831.8H1360.6V831.9H1362.2V836.3H1363.8V835.1H1365V846.3H1366.2V858.7H1367.6V857.2H1369V856.5H1370.5V852.8H1371.9V852.8H1373.3V850.6H1374.9V844.4H1376.5V838H1378.1V829.9H1379.6V833.9H1381.2V829.9H1382.7V831.8H1384.2V832.2H1385.7V828.3H1387.3V827.5H1388.8V828.6H1390.3V829.5H1391.9V826.5H1393.4V826.4H1394.9V822.7H1396.4V823.2H1398V823.3H1399.5V823.8H1400.9V824.4H1402.4V828.5H1403.8V831.2H1405.3V830H1406.7V833.7H1408.1V830.6H1409.5V831.2H1411V831.9H1412.4V832.6H1413.8V828.3H1415.2V833.3H1416.7V834.2H1418.1V836.8H1419.6V834.2H1421V838.4H1422.6V833.5H1424.1V834.3H1425.7V831H1427.3V828.3H1428.9V832.3H1430.5V831.6H1432V828.6H1433.6V827.4H1435.2V830.3H1436.6V830.3H1438.1V835.6H1439.5V834.7H1441V840.3H1442.4V839.9H1443.8V839.3H1445.2V835.8H1446.5V835.6H1447.9V830.6H1449.3V830.3H1450.7V831.2H1452.1V833.4H1453.5V835.6H1454.9V834.7H1456.3V838.2H1457.4V830.9H1458.6V831.2H1460.2V829.3H1461.7V828.3H1463.3V829H1464.9V829.2H1466.4V829.8H1468V829.8H1469.5V831.2H1471.1V830.8H1472.6V828.2H1474V826.3H1475.4V821.4H1476.8V814.3H1478.2V814.8H1479.6V811.2H1481.2V812.7H1482.7V814.8H1484.3V820H1485.9V823.3H1487.4V824H1489V823.9H1490.5V825.2H1491.9V822.1H1493.3V822.3H1494.8V821.7H1496.2V818.3H1497.7V816.1H1499.1V817.2H1500.6V816.9H1502.1V816H1503.7V817.7H1505.2V818.7H1506.8V818.5H1508.4V815H1509.9V815.6H1511.5V818.3H1513V818.3H1514.6V824.3H1516V821H1517.5V819.7H1519V814.1H1520.4V812.4H1522.2V817.2H1523.9V819.6H1525.4V818.3H1526.8V818.3H1528.3V817.6H1529.8V810.6H1531.2V809.9H1532.7V808.7H1534.1V806H1535.6V803H1537.1V804.2H1538.7V806.7H1540.2V807.1H1541.8V810.1H1543.4V810.6H1544.9V816.9H1546.5V812.9H1548V809.3H1549.6V805.6H1551.1V807H1552.7V804.4H1554.2V806.6H1555.8V806H1557.3V801.9H1558.9V802.8H1560.4V801.3H1562V804.2H1563.5V799.3H1564.9V800.5H1566.3V803.9H1567.7V810.2H1569.1V810.8H1570.5V813.7H1572.1V812H1573.6V812.8H1575.2V810.8H1576.7V811H1578.3V811.3H1579.8V811.7H1581.4V812.1H1582.9V810.1H1584.5V810.7H1585.9V808.4H1587.3V810H1588.7V815.4H1590.1V812.1H1591.5V815.7H1593V814.8H1594.4V816.8H1595.9V815.7H1597.3V819.4H1598.8V815.2H1600.3V819.5H1601.7V820.6H1603.2V817.8H1604.8V819.6H1606.3V818.2H1607.9V815.6H1609.4V816.9H1611V814.3H1612.5V814.9H1614.1V813.2H1615.6V813.4H1617.2V817H1618.6V814.9H1620V816.8H1621.3V814.6H1622.7V813.7H1624.1V814.7H1625.7V814.4H1627.2V818.2H1628.8V813.3H1630.4V814.6H1631.9V815.1H1633.5V817.1H1635V819.4H1636.6V820.8H1638.2V826.5H1639.7V830.9H1641.2V831.9H1642.8V833.7H1644.2V832H1645.6V828.1H1647V824.4H1648.4V823.3H1649.8V821.1H1651.3V824.7H1652.9V824H1654.4V827.9H1656V825.1H1657.5V827.5H1659.1V828.1H1660.7V837.7H1662.2V840.5H1663.8V849H1665.3V842H1666.9V836.7H1668.4V828.9H1669.9V828.1H1671.3V832.2H1672.8V830H1674.2V828.7H1675.7V831.2H1677.2V831.5H1678.6V829.6H1680.1V829.7H1681.7V828H1683.2V824.9H1684.8V818.6H1686.3V823.7H1687.9V825.1H1689.4V831.2H1690.8V829.7H1692.2V826.4H1693.6V826.7H1695V821.9H1696.4V819.9H1697.8V819.3H1699.2V822.7H1700.6V826.3H1702V827.7H1703.4V827.2H1704.8V826.3H1706.2V826.3H1707.6V822.3H1709V824H1710.4V824.8H1711.9V821.2H1713.3V821.4H1714.8V824.2H1716.2V825.3H1717.7V824.4H1719.2V825.1H1720.6V828.4H1722.1V829.2H1723.5V825.1H1724.9V816.6H1726.2V813.5H1727.6V809.2H1729V808.9H1730.6V807.8H1732.1V808.1H1733.7V806H1735.3V810.6H1736.8V812.2H1738.4V808.6H1740V808.4H1741.5V806.3H1743.1V810.5H1744.6V806.6H1746.2V805.7H1747.7V809.1H1749.3V807.5H1750.8V805.7H1752.4V804.1H1754V808.6H1755.5V805.8H1757.1V808.6H1758.6V808.6H1760.2V807.8H1761.7V811.7H1763.2V807.4H1764.8V805.3H1766.3V804H1767.9V801.7H1769.5V802.9H1771V804.4H1772.6V804.8H1774.1V804.2H1775.7V805.5H1777.3V806.9H1778.8V805.6H1780.4V801.3H1781.9V799.5H1783.5V798.2H1785V799.8H1786.6V796.5H1788.1V796.2H1789.7V794.8H1791.2V794.9H1792.8V792.9H1794.3V789.4H1795.9V792.4H1797.5V789.4H1799V792.3H1800.5V791.7H1802.1V793.3H1803.7V794.2H1805.2V796.1H1806.8V796.9H1808.3V798.4H1809.8V797.2H1811.4V793.2H1812.9V795.2H1814.5V792.2H1816V793.7H1817.6V791.8H1819.2V791.7H1820.7V788.8H1822.3V789.1H1823.9V788.6H1825.4V788.3H1827V792.4H1828.5V789.5H1830.1V783.3H1831.6V780.7H1833V781.2H1834.4V781.6H1835.8V778H1837.2V782.7H1838.6V777.2H1840.3V788.1H1842.1V802H1843.7V792.4H1845.2V786.8H1846.8V778.9H1848.2V782H1849.7V785.7H1851.1V790.9H1852.6V792.1H1854.1V796.4H1855.7V797.8H1857.2V801.8H1858.8V799.7H1860.4V803.1H1861.9V803.9H1863.3V798.8H1864.7V796.6H1866.1V791H1867.5V784.3H1868.9V779.1H1870.3V781.2H1871.7V786.9H1873.1V786.9H1874.5V788H1875.9V790.7H1877.4V794.9H1878.8V800.2H1880.2V802.8H1881.7V812.8H1883.2V807.1H1884.7V804.4H1886.2V801.8H1887.7V793.9H1889.2V790.1H1890.7V787.6H1892.2V783.8H1893.8V785.3H1895.3V787.7H1896.8V791.5H1898.4V791.6H1900V793.7H1901.5V793.8H1903.2V788.6H1905V778.6" stroke="#ff0000" stroke-width="2.7" fill="none" stroke-linejoin="miter" stroke-miterlimit="2"/>
<use href="#k_ji" x="13" y="83.5" width="16.5" height="16.5" stroke-width="1.3" style="color:#cacaca"/>
<use href="#k_koku" x="32.2" y="83.5" width="16.5" height="16.5" stroke-width="1.3" style="color:#cacaca"/>
<text transform="translate(50.4,99.6) scale(0.800,1)" x="3.2 12.4 24.4 39.2 48.4 60.4 75.2" font-family="Liberation Sans" font-size="20.00" fill="#cacaca">:06:00 </text>
<use href="#k_shi" x="118.6" y="83.5" width="16.5" height="16.5" stroke-width="1.3" style="color:#cacaca"/>
<use href="#k_chi" x="137.8" y="83.5" width="16.5" height="16.5" stroke-width="1.3" style="color:#cacaca"/>
<text transform="translate(156,99.6) scale(0.800,1)" x="3.2 12.4 24.4 39.2 48.4 60.4 72.4 87.2" font-family="Liberation Sans" font-size="20.00" fill="#cacaca">:21,540 </text>
<use href="#k_kou" x="233.8" y="83.5" width="16.5" height="16.5" stroke-width="1.3" style="color:#cacaca"/>
<use href="#k_chi" x="253" y="83.5" width="16.5" height="16.5" stroke-width="1.3" style="color:#cacaca"/>
<text transform="translate(271.2,99.6) scale(0.800,1)" x="3.2 12.4 24.4 39.2 48.4 60.4 72.4 87.2" font-family="Liberation Sans" font-size="20.00" fill="#cacaca">:21,540 </text>
<use href="#k_an" x="349" y="83.5" width="16.5" height="16.5" stroke-width="1.3" style="color:#cacaca"/>
<use href="#k_chi" x="368.2" y="83.5" width="16.5" height="16.5" stroke-width="1.3" style="color:#cacaca"/>
<text transform="translate(386.4,99.6) scale(0.800,1)" x="3.2 12.4 24.4 39.2 48.4 60.4 72.4 87.2" font-family="Liberation Sans" font-size="20.00" fill="#cacaca">:21,540 </text>
<use href="#k_shuu" x="464.2" y="83.5" width="16.5" height="16.5" stroke-width="1.3" style="color:#cacaca"/>
<use href="#k_chi" x="483.4" y="83.5" width="16.5" height="16.5" stroke-width="1.3" style="color:#cacaca"/>
<text transform="translate(501.6,99.6) scale(0.800,1)" x="3.2 12.4 24.4 39.2 48.4 60.4 72.4" font-family="Liberation Sans" font-size="20.00" fill="#cacaca">:21,540</text>
<use href="#k_ji" x="13" y="410.5" width="16.5" height="16.5" stroke-width="1.3" style="color:#cacaca"/>
<use href="#k_koku" x="32.2" y="410.5" width="16.5" height="16.5" stroke-width="1.3" style="color:#cacaca"/>
<text transform="translate(50.4,426.6) scale(0.800,1)" x="3.2 12.4 24.4 39.2 48.4 60.4 75.2" font-family="Liberation Sans" font-size="20.00" fill="#cacaca">:06:00 </text>
<use href="#k_shi" x="118.6" y="410.5" width="16.5" height="16.5" stroke-width="1.3" style="color:#cacaca"/>
<use href="#k_chi" x="137.8" y="410.5" width="16.5" height="16.5" stroke-width="1.3" style="color:#cacaca"/>
<text transform="translate(156,426.6) scale(0.800,1)" x="3.2 12.4 27.2 36.4 48.4 60.4 75.2" font-family="Liberation Sans" font-size="20.00" fill="#cacaca">:7,570 </text>
<use href="#k_kou" x="224.2" y="410.5" width="16.5" height="16.5" stroke-width="1.3" style="color:#cacaca"/>
<use href="#k_chi" x="243.4" y="410.5" width="16.5" height="16.5" stroke-width="1.3" style="color:#cacaca"/>
<text transform="translate(261.6,426.6) scale(0.800,1)" x="3.2 12.4 27.2 36.4 48.4 60.4 75.2" font-family="Liberation Sans" font-size="20.00" fill="#cacaca">:7,570 </text>
<use href="#k_an" x="329.8" y="410.5" width="16.5" height="16.5" stroke-width="1.3" style="color:#cacaca"/>
<use href="#k_chi" x="349" y="410.5" width="16.5" height="16.5" stroke-width="1.3" style="color:#cacaca"/>
<text transform="translate(367.2,426.6) scale(0.800,1)" x="3.2 12.4 27.2 36.4 48.4 60.4 75.2" font-family="Liberation Sans" font-size="20.00" fill="#cacaca">:7,570 </text>
<use href="#k_shuu" x="435.4" y="410.5" width="16.5" height="16.5" stroke-width="1.3" style="color:#cacaca"/>
<use href="#k_chi" x="454.6" y="410.5" width="16.5" height="16.5" stroke-width="1.3" style="color:#cacaca"/>
<text transform="translate(472.8,426.6) scale(0.800,1)" x="3.2 12.4 27.2 36.4 48.4 60.4" font-family="Liberation Sans" font-size="20.00" fill="#cacaca">:7,570</text>
<text transform="translate(14,783.6) scale(0.800,1)" x="3.2" font-family="Liberation Sans" font-size="20.00" fill="#cacaca">[</text>
<use href="#k_kin" x="24.6" y="767.5" width="16.5" height="16.5" stroke-width="1.3" style="color:#cacaca"/>
<text transform="translate(42.7,783.6) scale(0.800,1)" x="3.2 12.3 24.3 39 48.2 60.1 74.8 84 95.9 110.6 119.8 131.7 143.7" font-family="Liberation Sans" font-size="20.00" fill="#cacaca"> 26/08 21,540</text>
<path d="M171.3,772.5L181.3,782.5M181.3,772.5L171.3,782.5" stroke="#cacaca" stroke-width="1.4"/>
<text transform="translate(185.9,783.6) scale(0.800,1)" x="0.4 15.1 24.3 36.2 50.9" font-family="Liberation Sans" font-size="20.00" fill="#cacaca">1.00]</text>
<path d="M236.7,776.5H249.7" stroke="#cacaca" stroke-width="1.6"/>
<text transform="translate(252.8,783.6) scale(0.800,1)" x="3.2" font-family="Liberation Sans" font-size="20.00" fill="#cacaca">[</text>
<use href="#k_shiro" x="263.3" y="767.5" width="16.5" height="16.5" stroke-width="1.3" style="color:#cacaca"/>
<use href="#k_kin" x="282.4" y="767.5" width="16.5" height="16.5" stroke-width="1.3" style="color:#cacaca"/>
<text transform="translate(300.5,783.6) scale(0.800,1)" x="3.2 12.3 24.3 39 48.2 60.1 74.8 84 98.7 107.8 119.8 131.7" font-family="Liberation Sans" font-size="20.00" fill="#cacaca"> 26/08 7,570</text>
<path d="M419.6,772.5L429.6,782.5M429.6,772.5L419.6,782.5" stroke="#cacaca" stroke-width="1.4"/>
<text transform="translate(434.2,783.6) scale(0.800,1)" x="0.4 15.1 24.3 36.2 50.9 62.9" font-family="Liberation Sans" font-size="20.00" fill="#cacaca">1.00] </text>
<use href="#k_shuu" x="492.5" y="767.5" width="16.5" height="16.5" stroke-width="1.3" style="color:#cacaca"/>
<use href="#k_chi" x="511.6" y="767.5" width="16.5" height="16.5" stroke-width="1.3" style="color:#cacaca"/>
<text transform="translate(529.7,783.6) scale(0.800,1)" x="3.2" font-family="Liberation Sans" font-size="20.00" fill="#cacaca"> </text>
<use href="#k_ji" x="540.3" y="767.5" width="16.5" height="16.5" stroke-width="1.3" style="color:#cacaca"/>
<use href="#k_koku" x="559.4" y="767.5" width="16.5" height="16.5" stroke-width="1.3" style="color:#cacaca"/>
<text transform="translate(577.5,783.6) scale(0.800,1)" x="3.2 12.3 24.3 39 48.2 60.1 74.8 84 95.9 110.6 119.8 131.7 143.7" font-family="Liberation Sans" font-size="20.00" fill="#cacaca">:06:00 13,970</text>
<text transform="translate(27.5,389.6) scale(0.800,1)" x="0.5 12.1" font-family="Liberation Sans" font-size="19.29" fill="#dcdcdc">04</text>
<text transform="translate(85.5,389.6) scale(0.800,1)" x="0.5 12.1" font-family="Liberation Sans" font-size="19.29" fill="#dcdcdc">05</text>
<text transform="translate(139,389.6) scale(0.800,1)" x="0.5 12.1" font-family="Liberation Sans" font-size="19.29" fill="#dcdcdc" font-weight="bold">06</text>
<text transform="translate(188,389.6) scale(0.800,1)" x="0.5 12.1" font-family="Liberation Sans" font-size="19.29" fill="#dcdcdc">09</text>
<text transform="translate(284.5,389.6) scale(0.800,1)" x="0.5 12.1" font-family="Liberation Sans" font-size="19.29" fill="#dcdcdc">10</text>
<text transform="translate(378,389.6) scale(0.800,1)" x="0.5 12.1" font-family="Liberation Sans" font-size="19.29" fill="#dcdcdc">11</text>
<text transform="translate(471.5,389.6) scale(0.800,1)" x="0.5 12.1" font-family="Liberation Sans" font-size="19.29" fill="#dcdcdc">12</text>
<text transform="translate(565,389.6) scale(0.800,1)" x="0.5 12.1" font-family="Liberation Sans" font-size="19.29" fill="#dcdcdc">13</text>
<text transform="translate(659,389.6) scale(0.800,1)" x="0.5 12.1" font-family="Liberation Sans" font-size="19.29" fill="#dcdcdc">14</text>
<text transform="translate(738,389.6) scale(0.800,1)" x="0.5 12.1" font-family="Liberation Sans" font-size="19.29" fill="#dcdcdc">15</text>
<text transform="translate(803.5,389.6) scale(0.800,1)" x="0.5 12.1" font-family="Liberation Sans" font-size="19.29" fill="#dcdcdc">17</text>
<text transform="translate(898,389.6) scale(0.800,1)" x="0.5 12.1" font-family="Liberation Sans" font-size="19.29" fill="#dcdcdc">18</text>
<text transform="translate(992,389.6) scale(0.800,1)" x="0.5 12.1" font-family="Liberation Sans" font-size="19.29" fill="#dcdcdc">19</text>
<text transform="translate(1084,389.6) scale(0.800,1)" x="0.5 12.1" font-family="Liberation Sans" font-size="19.29" fill="#dcdcdc">20</text>
<text transform="translate(1176.5,389.6) scale(0.800,1)" x="0.5 12.1" font-family="Liberation Sans" font-size="19.29" fill="#dcdcdc">21</text>
<text transform="translate(1271.5,389.6) scale(0.800,1)" x="0.5 12.1" font-family="Liberation Sans" font-size="19.29" fill="#dcdcdc">22</text>
<text transform="translate(1365.5,389.6) scale(0.800,1)" x="0.5 12.1" font-family="Liberation Sans" font-size="19.29" fill="#dcdcdc">23</text>
<text transform="translate(1452.5,389.6) scale(0.800,1)" x="0.5 12.1" font-family="Liberation Sans" font-size="19.29" fill="#dcdcdc">00</text>
<text transform="translate(1546,389.6) scale(0.800,1)" x="0.5 12.1" font-family="Liberation Sans" font-size="19.29" fill="#dcdcdc">01</text>
<text transform="translate(1624.5,389.6) scale(0.800,1)" x="0.5 12.1" font-family="Liberation Sans" font-size="19.29" fill="#dcdcdc">02</text>
<text transform="translate(1688,389.6) scale(0.800,1)" x="0.5 12.1" font-family="Liberation Sans" font-size="19.29" fill="#dcdcdc">03</text>
<text transform="translate(1767,389.6) scale(0.800,1)" x="0.5 12.1" font-family="Liberation Sans" font-size="19.29" fill="#dcdcdc">04</text>
<text transform="translate(1838.5,389.6) scale(0.800,1)" x="0.5 12.1" font-family="Liberation Sans" font-size="19.29" fill="#dcdcdc">05</text>
<text transform="translate(1879,389.6) scale(0.800,1)" x="0.5 12.1" font-family="Liberation Sans" font-size="19.29" fill="#dcdcdc">06</text>
<text transform="translate(165,365.3) scale(0.800,1)" x="0.2 11.7" font-family="Liberation Sans" font-size="20.00" fill="#cacaca">20</text>
<text transform="translate(1452.5,365.3) scale(0.800,1)" x="0.2 11.7" font-family="Liberation Sans" font-size="20.00" fill="#cacaca">21</text>
<text transform="translate(27.5,746.4) scale(0.800,1)" x="0.5 12.1" font-family="Liberation Sans" font-size="19.29" fill="#dcdcdc">04</text>
<text transform="translate(85.5,746.4) scale(0.800,1)" x="0.5 12.1" font-family="Liberation Sans" font-size="19.29" fill="#dcdcdc">05</text>
<text transform="translate(139,746.4) scale(0.800,1)" x="0.5 12.1" font-family="Liberation Sans" font-size="19.29" fill="#dcdcdc" font-weight="bold">06</text>
<text transform="translate(188,746.4) scale(0.800,1)" x="0.5 12.1" font-family="Liberation Sans" font-size="19.29" fill="#dcdcdc">09</text>
<text transform="translate(284.5,746.4) scale(0.800,1)" x="0.5 12.1" font-family="Liberation Sans" font-size="19.29" fill="#dcdcdc">10</text>
<text transform="translate(378,746.4) scale(0.800,1)" x="0.5 12.1" font-family="Liberation Sans" font-size="19.29" fill="#dcdcdc">11</text>
<text transform="translate(471.5,746.4) scale(0.800,1)" x="0.5 12.1" font-family="Liberation Sans" font-size="19.29" fill="#dcdcdc">12</text>
<text transform="translate(565,746.4) scale(0.800,1)" x="0.5 12.1" font-family="Liberation Sans" font-size="19.29" fill="#dcdcdc">13</text>
<text transform="translate(659,746.4) scale(0.800,1)" x="0.5 12.1" font-family="Liberation Sans" font-size="19.29" fill="#dcdcdc">14</text>
<text transform="translate(738,746.4) scale(0.800,1)" x="0.5 12.1" font-family="Liberation Sans" font-size="19.29" fill="#dcdcdc">15</text>
<text transform="translate(803.5,746.4) scale(0.800,1)" x="0.5 12.1" font-family="Liberation Sans" font-size="19.29" fill="#dcdcdc">17</text>
<text transform="translate(898,746.4) scale(0.800,1)" x="0.5 12.1" font-family="Liberation Sans" font-size="19.29" fill="#dcdcdc">18</text>
<text transform="translate(992,746.4) scale(0.800,1)" x="0.5 12.1" font-family="Liberation Sans" font-size="19.29" fill="#dcdcdc">19</text>
<text transform="translate(1084,746.4) scale(0.800,1)" x="0.5 12.1" font-family="Liberation Sans" font-size="19.29" fill="#dcdcdc">20</text>
<text transform="translate(1176.5,746.4) scale(0.800,1)" x="0.5 12.1" font-family="Liberation Sans" font-size="19.29" fill="#dcdcdc">21</text>
<text transform="translate(1271.5,746.4) scale(0.800,1)" x="0.5 12.1" font-family="Liberation Sans" font-size="19.29" fill="#dcdcdc">22</text>
<text transform="translate(1365.5,746.4) scale(0.800,1)" x="0.5 12.1" font-family="Liberation Sans" font-size="19.29" fill="#dcdcdc">23</text>
<text transform="translate(1452.5,746.4) scale(0.800,1)" x="0.5 12.1" font-family="Liberation Sans" font-size="19.29" fill="#dcdcdc">00</text>
<text transform="translate(1546,746.4) scale(0.800,1)" x="0.5 12.1" font-family="Liberation Sans" font-size="19.29" fill="#dcdcdc">01</text>
<text transform="translate(1624.5,746.4) scale(0.800,1)" x="0.5 12.1" font-family="Liberation Sans" font-size="19.29" fill="#dcdcdc">02</text>
<text transform="translate(1688,746.4) scale(0.800,1)" x="0.5 12.1" font-family="Liberation Sans" font-size="19.29" fill="#dcdcdc">03</text>
<text transform="translate(1767,746.4) scale(0.800,1)" x="0.5 12.1" font-family="Liberation Sans" font-size="19.29" fill="#dcdcdc">04</text>
<text transform="translate(1838.5,746.4) scale(0.800,1)" x="0.5 12.1" font-family="Liberation Sans" font-size="19.29" fill="#dcdcdc">05</text>
<text transform="translate(1879,746.4) scale(0.800,1)" x="0.5 12.1" font-family="Liberation Sans" font-size="19.29" fill="#dcdcdc">06</text>
<text transform="translate(165,722.1) scale(0.800,1)" x="0.2 11.7" font-family="Liberation Sans" font-size="20.00" fill="#cacaca">20</text>
<text transform="translate(1452.5,722.1) scale(0.800,1)" x="0.2 11.7" font-family="Liberation Sans" font-size="20.00" fill="#cacaca">21</text>
<text transform="translate(27.5,1068) scale(0.800,1)" x="0.5 12.1" font-family="Liberation Sans" font-size="19.29" fill="#dcdcdc">04</text>
<text transform="translate(85.5,1068) scale(0.800,1)" x="0.5 12.1" font-family="Liberation Sans" font-size="19.29" fill="#dcdcdc">05</text>
<text transform="translate(139,1068) scale(0.800,1)" x="0.5 12.1" font-family="Liberation Sans" font-size="19.29" fill="#dcdcdc" font-weight="bold">06</text>
<text transform="translate(188,1068) scale(0.800,1)" x="0.5 12.1" font-family="Liberation Sans" font-size="19.29" fill="#dcdcdc">09</text>
<text transform="translate(284.5,1068) scale(0.800,1)" x="0.5 12.1" font-family="Liberation Sans" font-size="19.29" fill="#dcdcdc">10</text>
<text transform="translate(378,1068) scale(0.800,1)" x="0.5 12.1" font-family="Liberation Sans" font-size="19.29" fill="#dcdcdc">11</text>
<text transform="translate(471.5,1068) scale(0.800,1)" x="0.5 12.1" font-family="Liberation Sans" font-size="19.29" fill="#dcdcdc">12</text>
<text transform="translate(565,1068) scale(0.800,1)" x="0.5 12.1" font-family="Liberation Sans" font-size="19.29" fill="#dcdcdc">13</text>
<text transform="translate(659,1068) scale(0.800,1)" x="0.5 12.1" font-family="Liberation Sans" font-size="19.29" fill="#dcdcdc">14</text>
<text transform="translate(738,1068) scale(0.800,1)" x="0.5 12.1" font-family="Liberation Sans" font-size="19.29" fill="#dcdcdc">15</text>
<text transform="translate(803.5,1068) scale(0.800,1)" x="0.5 12.1" font-family="Liberation Sans" font-size="19.29" fill="#dcdcdc">17</text>
<text transform="translate(898,1068) scale(0.800,1)" x="0.5 12.1" font-family="Liberation Sans" font-size="19.29" fill="#dcdcdc">18</text>
<text transform="translate(992,1068) scale(0.800,1)" x="0.5 12.1" font-family="Liberation Sans" font-size="19.29" fill="#dcdcdc">19</text>
<text transform="translate(1084,1068) scale(0.800,1)" x="0.5 12.1" font-family="Liberation Sans" font-size="19.29" fill="#dcdcdc">20</text>
<text transform="translate(1176.5,1068) scale(0.800,1)" x="0.5 12.1" font-family="Liberation Sans" font-size="19.29" fill="#dcdcdc">21</text>
<text transform="translate(1271.5,1068) scale(0.800,1)" x="0.5 12.1" font-family="Liberation Sans" font-size="19.29" fill="#dcdcdc">22</text>
<text transform="translate(1365.5,1068) scale(0.800,1)" x="0.5 12.1" font-family="Liberation Sans" font-size="19.29" fill="#dcdcdc">23</text>
<text transform="translate(1452.5,1068) scale(0.800,1)" x="0.5 12.1" font-family="Liberation Sans" font-size="19.29" fill="#dcdcdc">00</text>
<text transform="translate(1546,1068) scale(0.800,1)" x="0.5 12.1" font-family="Liberation Sans" font-size="19.29" fill="#dcdcdc">01</text>
<text transform="translate(1624.5,1068) scale(0.800,1)" x="0.5 12.1" font-family="Liberation Sans" font-size="19.29" fill="#dcdcdc">02</text>
<text transform="translate(1688,1068) scale(0.800,1)" x="0.5 12.1" font-family="Liberation Sans" font-size="19.29" fill="#dcdcdc">03</text>
<text transform="translate(1767,1068) scale(0.800,1)" x="0.5 12.1" font-family="Liberation Sans" font-size="19.29" fill="#dcdcdc">04</text>
<text transform="translate(1838.5,1068) scale(0.800,1)" x="0.5 12.1" font-family="Liberation Sans" font-size="19.29" fill="#dcdcdc">05</text>
<text transform="translate(1879,1068) scale(0.800,1)" x="0.5 12.1" font-family="Liberation Sans" font-size="19.29" fill="#dcdcdc">06</text>
<text transform="translate(165,1043.7) scale(0.800,1)" x="0.2 11.7" font-family="Liberation Sans" font-size="20.00" fill="#cacaca">20</text>
<text transform="translate(1452.5,1043.7) scale(0.800,1)" x="0.2 11.7" font-family="Liberation Sans" font-size="20.00" fill="#cacaca">21</text>
<text transform="translate(1908.5,126.4) scale(0.800,1)" x="0.3 12.1 26.6 35.6 47.3 59.1" font-family="Liberation Sans" font-size="20.00" fill="#d0d0d0">21,750</text>
<text transform="translate(1908.5,180.9) scale(0.800,1)" x="0.3 12.1 26.6 35.6 47.3 59.1" font-family="Liberation Sans" font-size="20.00" fill="#d0d0d0">21,500</text>
<text transform="translate(1908.5,235.4) scale(0.800,1)" x="0.3 12.1 26.6 35.6 47.3 59.1" font-family="Liberation Sans" font-size="20.00" fill="#d0d0d0">21,250</text>
<text transform="translate(1908.5,289.9) scale(0.800,1)" x="0.3 12.1 26.6 35.6 47.3 59.1" font-family="Liberation Sans" font-size="20.00" fill="#d0d0d0">21,000</text>
<text transform="translate(1908.5,344.4) scale(0.800,1)" x="0.3 12.1 26.6 35.6 47.3 59.1" font-family="Liberation Sans" font-size="20.00" fill="#d0d0d0">20,750</text>
<text transform="translate(1908.5,398.9) scale(0.800,1)" x="0.3 12.1 26.6 35.6 47.3 59.1" font-family="Liberation Sans" font-size="20.00" fill="#d0d0d0">20,500</text>
<rect x="1907" y="159" width="92.5" height="34" fill="#d3d3d3"/>
<text transform="translate(1923.3,180.8) scale(0.900,1)" x="-0.1 10.8 24.4 32.6 43.4 54.3" font-family="Liberation Sans" font-size="20.00" fill="#000000" font-weight="bold">21,540</text>
<text transform="translate(1908.5,429.4) scale(0.800,1)" x="0.3 14.8 23.8 35.6 47.3" font-family="Liberation Sans" font-size="20.00" fill="#d0d0d0">8,000</text>
<text transform="translate(1908.5,520) scale(0.800,1)" x="0.3 14.8 23.8 35.6 47.3" font-family="Liberation Sans" font-size="20.00" fill="#d0d0d0">7,750</text>
<text transform="translate(1908.5,610.6) scale(0.800,1)" x="0.3 14.8 23.8 35.6 47.3" font-family="Liberation Sans" font-size="20.00" fill="#d0d0d0">7,500</text>
<text transform="translate(1908.5,701.2) scale(0.800,1)" x="0.3 14.8 23.8 35.6 47.3" font-family="Liberation Sans" font-size="20.00" fill="#d0d0d0">7,250</text>
<rect x="1907" y="573" width="92.5" height="32" fill="#d3d3d3"/>
<text transform="translate(1928.2,593.8) scale(0.900,1)" x="-0.1 13.6 21.7 32.6 43.4" font-family="Liberation Sans" font-size="20.00" fill="#000000" font-weight="bold">7,570</text>
<text transform="translate(1908.5,868.2) scale(0.800,1)" x="0.3 12.1 26.6 35.6 47.3 59.1" font-family="Liberation Sans" font-size="20.00" fill="#d0d0d0">13,750</text>
<text transform="translate(1908.5,973) scale(0.800,1)" x="0.3 12.1 26.6 35.6 47.3 59.1" font-family="Liberation Sans" font-size="20.00" fill="#d0d0d0">13,500</text>
<text transform="translate(1908.5,1077.8) scale(0.800,1)" x="0.3 12.1 26.6 35.6 47.3 59.1" font-family="Liberation Sans" font-size="20.00" fill="#d0d0d0">13,250</text>
<rect x="1907" y="763.5" width="92.5" height="32.0" fill="#d3d3d3"/>
<text transform="translate(1923.3,784.3) scale(0.900,1)" x="-0.1 10.8 24.4 32.6 43.4 54.3" font-family="Liberation Sans" font-size="20.00" fill="#000000" font-weight="bold">13,970</text>
</svg>
<svg class="a" style="left:0;top:0" width="2017" height="80" viewBox="0 0 2017 80">
<defs><linearGradient id="btng" x1="0" y1="0" x2="0" y2="1"><stop offset="0" stop-color="#ffffff"/><stop offset="0.5" stop-color="#eeeeee"/><stop offset="1" stop-color="#cfcfcf"/></linearGradient><linearGradient id="spg" x1="0" y1="0" x2="0" y2="1"><stop offset="0" stop-color="#f6f6f6"/><stop offset="1" stop-color="#dcdcdc"/></linearGradient></defs>
<rect x="16.5" y="14.5" width="21" height="21" fill="#f4f4f4"/>
<path d="M17,17H37.5" stroke="#d8d8d8" stroke-width="1"/>
<path d="M17,19.5H37.5" stroke="#d8d8d8" stroke-width="1"/>
<path d="M17,22H37.5" stroke="#d8d8d8" stroke-width="1"/>
<path d="M17,24.5H37.5" stroke="#d8d8d8" stroke-width="1"/>
<path d="M17,27H37.5" stroke="#d8d8d8" stroke-width="1"/>
<path d="M17,29.5H37.5" stroke="#d8d8d8" stroke-width="1"/>
<path d="M17,32H37.5" stroke="#d8d8d8" stroke-width="1"/>
<path d="M16.2,14V35.6H37.5" stroke="#6a6a6a" stroke-width="1.6" fill="none"/>
<path d="M21.5,23.5V33.5" stroke="#ff0000" stroke-width="3.6" stroke-linecap="round"/>
<path d="M25,18V31" stroke="#1080f0" stroke-width="3.4" stroke-linecap="round"/>
<path d="M28.3,16.5V26.5" stroke="#ff0000" stroke-width="3.6" stroke-linecap="round"/>
<path d="M31.2,19.5V28.5" stroke="#1080f0" stroke-width="3.4" stroke-linecap="round"/>
<path d="M34.2,18V30" stroke="#ff0000" stroke-width="3.6" stroke-linecap="round"/>
<rect x="1877" y="15.5" width="16" height="20" fill="#fafafa" stroke="#6e6e6e" stroke-width="1.5"/>
<rect x="1877" y="15" width="16" height="2" fill="#6e6e6e"/>
<rect x="1883" y="20.5" width="14.5" height="12" fill="#f2f2f2" stroke="#5a5a5a" stroke-width="1.8"/>
<path d="M1884,24.5H1897M1884,28.5H1897M1887.5,23V33M1891.5,23V33" stroke="#b4b4b4" stroke-width="1"/>
<rect x="1911.2" y="12" width="26.5" height="26.8" rx="4" fill="url(#btng)" stroke="#959595" stroke-width="1.6"/>
<rect x="1942.2" y="12" width="26.5" height="26.8" rx="4" fill="url(#btng)" stroke="#959595" stroke-width="1.6"/>
<rect x="1973.8" y="12" width="26.5" height="26.8" rx="4" fill="url(#btng)" stroke="#959595" stroke-width="1.6"/>
<rect x="1918.8" y="28.6" width="9" height="3" fill="#5c5c5c"/>
<rect x="1951" y="20.5" width="10.5" height="10.5" fill="none" stroke="#5a5a5a" stroke-width="1.8"/>
<rect x="1950" y="19.5" width="12.5" height="2.6" fill="#5a5a5a"/>
<path d="M1981.5,20L1993,31.2M1993,20L1981.5,31.2" stroke="#5a5a5a" stroke-width="2.2"/>
<use href="#k_kin" x="18" y="52" width="17.5" height="17.5" stroke-width="1.6" style="color:#1e1e1e"/>
<text transform="translate(53.5,68.7) scale(0.850,1)" font-family="Liberation Sans" font-size="20" fill="#1e1e1e" style="white-space:pre">2026/08</text>
<rect x="127.4" y="47.2" width="75.6" height="26.6" fill="#ffffff" stroke="#c4c8d0" stroke-width="1.2"/>
<text transform="translate(131.6,64.8) scale(0.820,1)" font-family="Liberation Sans" font-size="19.5" fill="#1e1e1e" style="white-space:pre">1.00</text>
<rect x="179.8" y="48.6" width="21.2" height="10.8" fill="url(#spg)" stroke="#b8b8b8" stroke-width="1"/>
<rect x="179.8" y="59.4" width="21.2" height="11" fill="url(#spg)" stroke="#b8b8b8" stroke-width="1"/>
<path d="M186.4,56.5L190.4,51.8L194.4,56.5Z" fill="#111"/>
<path d="M186.4,62.2L190.4,66.9L194.4,62.2Z" fill="#111"/>
<path d="M210.5,53.5V72" stroke="#a9adb5" stroke-width="1"/><path d="M211.9,53.5V72" stroke="#fafafa" stroke-width="1.3"/>
<use href="#k_shiro" x="223.5" y="52" width="17.5" height="17.5" stroke-width="1.6" style="color:#1e1e1e"/>
<use href="#k_kin" x="241.5" y="52" width="17.5" height="17.5" stroke-width="1.6" style="color:#1e1e1e"/>
<text transform="translate(277.3,68.7) scale(0.850,1)" font-family="Liberation Sans" font-size="20" fill="#1e1e1e" style="white-space:pre">2026/08</text>
<rect x="350.6" y="47.2" width="75.6" height="26.6" fill="#ffffff" stroke="#c4c8d0" stroke-width="1.2"/>
<text transform="translate(354.8,64.8) scale(0.820,1)" font-family="Liberation Sans" font-size="19.5" fill="#1e1e1e" style="white-space:pre">1.00</text>
<rect x="403" y="48.6" width="21.2" height="10.8" fill="url(#spg)" stroke="#b8b8b8" stroke-width="1"/>
<rect x="403" y="59.4" width="21.2" height="11" fill="url(#spg)" stroke="#b8b8b8" stroke-width="1"/>
<path d="M409.6,56.5L413.6,51.8L417.6,56.5Z" fill="#111"/>
<path d="M409.6,62.2L413.6,66.9L417.6,62.2Z" fill="#111"/>
<path d="M433.7,53.5V72" stroke="#a9adb5" stroke-width="1"/><path d="M435.1,53.5V72" stroke="#fafafa" stroke-width="1.3"/>
<use href="#k_fun" x="445.5" y="52" width="17.5" height="17.5" stroke-width="1.6" style="color:#1e1e1e"/>
<use href="#k_ashi" x="464" y="52" width="17.5" height="17.5" stroke-width="1.6" style="color:#1e1e1e"/>
<path d="M491.9,57.9H500.2L496,62.8Z" fill="#111"/>
<rect x="506.8" y="47.2" width="71.4" height="26.6" fill="#ffffff" stroke="#c4c8d0" stroke-width="1.2"/>
<text transform="translate(511,64.8) scale(0.820,1)" font-family="Liberation Sans" font-size="19.5" fill="#1e1e1e" style="white-space:pre">1200</text>
<rect x="555" y="48.6" width="21.2" height="10.8" fill="url(#spg)" stroke="#b8b8b8" stroke-width="1"/>
<rect x="555" y="59.4" width="21.2" height="11" fill="url(#spg)" stroke="#b8b8b8" stroke-width="1"/>
<path d="M561.6,56.5L565.6,51.8L569.6,56.5Z" fill="#111"/>
<path d="M561.6,62.2L565.6,66.9L569.6,62.2Z" fill="#111"/>
<text transform="translate(588.5,68.7) scale(0.850,1)" font-family="Liberation Sans" font-size="20" fill="#1e1e1e" style="white-space:pre">1</text>
<use href="#k_fun" x="597" y="52" width="17.5" height="17.5" stroke-width="1.6" style="color:#1e1e1e"/>
<use href="#k_ashi" x="615.5" y="52" width="17.5" height="17.5" stroke-width="1.6" style="color:#1e1e1e"/>
<path d="M643,57.9H652L647.5,62.8Z" fill="#111"/>
<path d="M663.7,53.5V72" stroke="#a9adb5" stroke-width="1"/><path d="M665.1,53.5V72" stroke="#fafafa" stroke-width="1.3"/>
<rect x="669" y="46.2" width="27" height="27" fill="#b9bdc1"/>
<path d="M669.8,73V47H696" stroke="#6c6c6c" stroke-width="1.8" fill="none"/>
<path d="M669,73.2H696.4V46" stroke="#ffffff" stroke-width="1.3" fill="none"/>
<rect x="672.5" y="49.5" width="21.5" height="22" fill="#f4f4ec" stroke="#808080" stroke-width="0.8"/>
<path d="M673,52H693.5" stroke="#cfcfc4" stroke-width="0.8"/>
<path d="M673,54.2H693.5" stroke="#cfcfc4" stroke-width="0.8"/>
<path d="M673,56.4H693.5" stroke="#cfcfc4" stroke-width="0.8"/>
<path d="M673,58.6H693.5" stroke="#cfcfc4" stroke-width="0.8"/>
<path d="M673,60.8H693.5" stroke="#cfcfc4" stroke-width="0.8"/>
<path d="M673,63H693.5" stroke="#cfcfc4" stroke-width="0.8"/>
<path d="M673,65.2H693.5" stroke="#cfcfc4" stroke-width="0.8"/>
<path d="M673,67.4H693.5" stroke="#cfcfc4" stroke-width="0.8"/>
<path d="M673,69.6H693.5" stroke="#cfcfc4" stroke-width="0.8"/>
<path d="M677.2,50V71M673,55.7H694" stroke="#3a3aa8" stroke-width="1.6"/>
<path d="M689,67.8L682.5,61.3" stroke="#8a20b8" stroke-width="2.6"/><path d="M681,59.5L687.5,60.2L681.6,66Z" fill="#8a20b8"/>
<path d="M708.8,53.5V72" stroke="#a9adb5" stroke-width="1"/><path d="M710.2,53.5V72" stroke="#fafafa" stroke-width="1.3"/>
<rect x="714" y="46.2" width="27" height="27" fill="#b9bdc1"/>
<path d="M714.8,73V47H741" stroke="#6c6c6c" stroke-width="1.8" fill="none"/>
<path d="M714,73.2H741.4V46" stroke="#ffffff" stroke-width="1.3" fill="none"/>
<path d="M719.5,52.5L733,57.5L728.5,60.5L735,67L732.8,69.2L726.3,62.7L723.5,67Z" fill="#f4f0ff" stroke="#6040c0" stroke-width="1.6" stroke-linejoin="round"/>
<path d="M756,70C753,66 751,62 752,60.5C753,59 755,60.5 757,63V53C757,50.5 760,50.5 760,53V58.5V51C760,48.5 763.5,48.5 763.5,51V58V52C763.5,49.8 767,49.8 767,52V59V55C767,53 770.5,53 770.5,55V62C770.5,66 769.5,68 768.5,70.5Z" fill="#fff6e0" stroke="#e0900c" stroke-width="2" stroke-linejoin="round"/>
<g transform="translate(799,59.5) rotate(-45)"><rect x="-8" y="-3.6" width="20" height="7.2" rx="3.6" fill="#ffe2a8" stroke="#e08a08" stroke-width="1.7"/><path d="M-6,-1.2H9.5" stroke="#fffaf0" stroke-width="1.6"/><path d="M-7.8,-3.4L-14.5,0L-7.8,3.4Z" fill="#f0b050" stroke="#d08010" stroke-width="1.2" stroke-linejoin="round"/><path d="M-12,-1.3L-15,0L-12,1.3Z" fill="#805010"/></g>
<path d="M839.5,59L846,65.5L839.5,72L833,65.5Z" fill="#0a2a74"/>
<path d="M837,63.5h1.2M841,63.5h1.2M837,67.5h1.2M841,67.5h1.2M839,65.5h1.2" stroke="#c8d8ff" stroke-width="1"/>
<g transform="translate(835,59.5) rotate(-45)"><rect x="-7" y="-3.8" width="19" height="7.6" rx="3.8" fill="#d8e6ff" stroke="#2a6ee8" stroke-width="1.8"/><path d="M-5,-1.3H10" stroke="#ffffff" stroke-width="1.6"/><path d="M-7,-3.2L-13,-0.8L-14,0L-13,0.8L-7,3.2Z" fill="#3a80f0" stroke="#1a5ad0" stroke-width="1"/></g>
<path d="M861.9,53.5V72" stroke="#a9adb5" stroke-width="1"/><path d="M863.3,53.5V72" stroke="#fafafa" stroke-width="1.3"/>
<rect x="871" y="50.5" width="20.5" height="19.5" fill="#f6f2ea"/>
<path d="M871.5,52.5H891.5" stroke="#dcd6cc" stroke-width="0.8"/>
<path d="M871.5,55H891.5" stroke="#dcd6cc" stroke-width="0.8"/>
<path d="M871.5,57.5H891.5" stroke="#dcd6cc" stroke-width="0.8"/>
<path d="M871.5,60H891.5" stroke="#dcd6cc" stroke-width="0.8"/>
<path d="M871.5,62.5H891.5" stroke="#dcd6cc" stroke-width="0.8"/>
<path d="M871.5,65H891.5" stroke="#dcd6cc" stroke-width="0.8"/>
<path d="M871.5,67.5H891.5" stroke="#dcd6cc" stroke-width="0.8"/>
<path d="M870.8,50V70H891.8" stroke="#707070" stroke-width="1.3" fill="none"/>
<path d="M875,60.5V69.5M879.2,52V69.5M883.3,55V69.5M887.5,61.5V69.5" stroke="#1580f0" stroke-width="2.4" stroke-linecap="round"/>
<path d="M896.8,58H904.8L900.8,63Z" fill="#111"/>
<rect x="915" y="50.5" width="20.5" height="19.5" fill="#f6f2ea"/>
<path d="M915.5,52.5H935.5" stroke="#dcd6cc" stroke-width="0.8"/>
<path d="M915.5,55H935.5" stroke="#dcd6cc" stroke-width="0.8"/>
<path d="M915.5,57.5H935.5" stroke="#dcd6cc" stroke-width="0.8"/>
<path d="M915.5,60H935.5" stroke="#dcd6cc" stroke-width="0.8"/>
<path d="M915.5,62.5H935.5" stroke="#dcd6cc" stroke-width="0.8"/>
<path d="M915.5,65H935.5" stroke="#dcd6cc" stroke-width="0.8"/>
<path d="M915.5,67.5H935.5" stroke="#dcd6cc" stroke-width="0.8"/>
<path d="M914.8,50V70H935.8" stroke="#707070" stroke-width="1.3" fill="none"/>
<path d="M919,60.5V69.5M923.2,52V69.5M927.3,55V69.5M931.5,61.5V69.5" stroke="#1580f0" stroke-width="2.4" stroke-linecap="round"/>
<path d="M918.5,53L932.5,67M932.5,53L918.5,67" stroke="#ff2020" stroke-width="1.9" stroke-linecap="round"/>
<path d="M952.4,53.5V72" stroke="#a9adb5" stroke-width="1"/><path d="M953.8,53.5V72" stroke="#fafafa" stroke-width="1.3"/>
<path d="M963,56.5A8,8 0 1 0 978,66" stroke="#1a90e8" stroke-width="3.2" fill="none"/>
<path d="M961,49.5H969.5V58Z" fill="#1a60f0"/>
<text x="972" y="63.8" font-family="Liberation Sans" font-weight="bold" font-size="13" fill="#1a60e0">R</text>
<path d="M967.3,68.8L974.5,61.5" transform="translate(1000,0)" stroke="#4a40f0" stroke-width="4.4" stroke-linecap="round"/>
<path d="M1973.5,62.5L1977,59C1974.8,55.5 1976.5,50.5 1981.5,50.5L1979.5,53.5L1982,56.5L1985.5,54.5C1986.5,59 1982,62.5 1978.5,61.5L1975,65" fill="#f2f0ff" stroke="#7a70d8" stroke-width="1.8" stroke-linejoin="round"/>
<use href="#k_kin" x="47" y="16.3" width="16.5" height="16.5" stroke-width="1.75" style="color:#1e1e1e"/>
<text transform="translate(67.5,32.5) scale(0.860,1)" font-family="Liberation Sans" font-size="20" fill="#1e1e1e" style="white-space:pre">1</text>
<use href="#k_fun" x="76.5" y="16.3" width="16.5" height="16.5" stroke-width="1.75" style="color:#1e1e1e"/>
<use href="#k_ashi" x="94.5" y="16.3" width="16.5" height="16.5" stroke-width="1.75" style="color:#1e1e1e"/>
<text transform="translate(113.6,32.5) scale(0.860,1)" font-family="Liberation Sans" font-size="20" fill="#1e1e1e" style="white-space:pre">[2026/08]1.00</text>
<path d="M229.5,25.5H236.5" stroke="#1e1e1e" stroke-width="1.5"/>
<use href="#k_shiro" x="245" y="16.3" width="16.5" height="16.5" stroke-width="1.75" style="color:#1e1e1e"/>
<use href="#k_kin" x="263" y="16.3" width="16.5" height="16.5" stroke-width="1.75" style="color:#1e1e1e"/>
<text transform="translate(283.5,32.5) scale(0.860,1)" font-family="Liberation Sans" font-size="20" fill="#1e1e1e" style="white-space:pre">1</text>
<use href="#k_fun" x="292.5" y="16.3" width="16.5" height="16.5" stroke-width="1.75" style="color:#1e1e1e"/>
<use href="#k_ashi" x="310.5" y="16.3" width="16.5" height="16.5" stroke-width="1.75" style="color:#1e1e1e"/>
<text transform="translate(329.5,32.5) scale(0.860,1)" font-family="Liberation Sans" font-size="20" fill="#1e1e1e" style="white-space:pre">[2026/08]1.00</text>
</svg>
<div class="a" style="left:9px;top:399px;width:1990.5px;height:6.5px;background:linear-gradient(#c8c8c8 0,#f4f4f4 25%,#f4f4f4 75%,#bdbdbd 100%)"></div>
<div class="a" style="left:9px;top:754.5px;width:1990.5px;height:6.5px;background:linear-gradient(#c8c8c8 0,#f4f4f4 25%,#f4f4f4 75%,#bdbdbd 100%)"></div>
<div class="a" style="left:7px;top:1076px;width:1998px;height:6px;background:linear-gradient(#cfcfcf,#e6e6e6)"></div>
</body></html>
